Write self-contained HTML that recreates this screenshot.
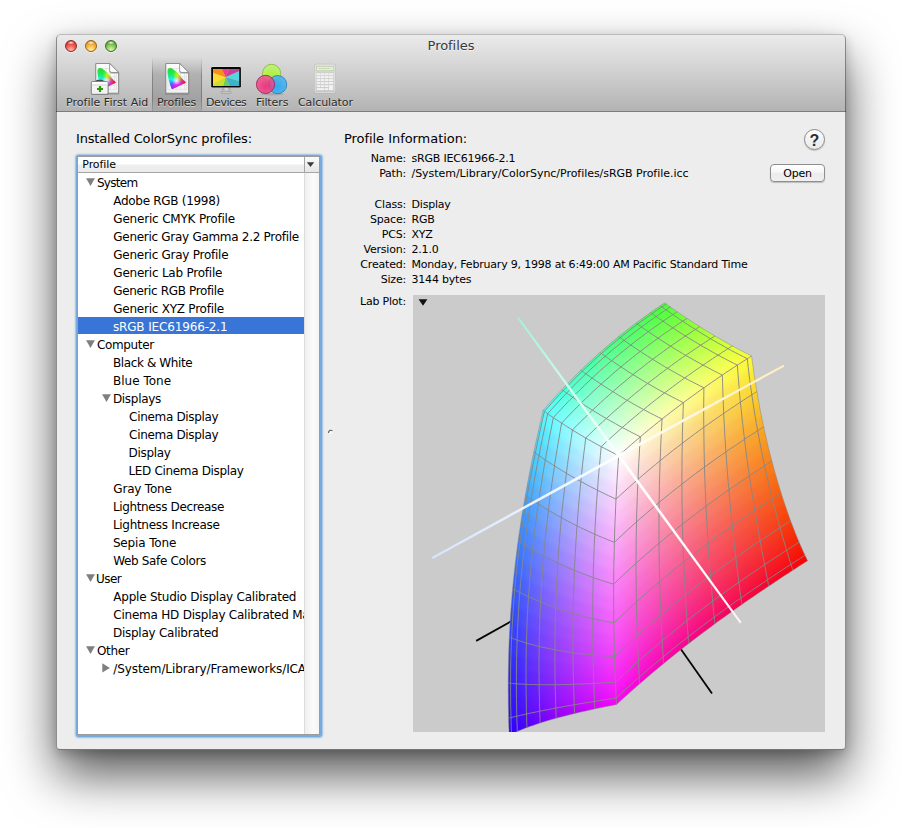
<!DOCTYPE html>
<html lang="en">
<head>
<meta charset="utf-8">
<title>Profiles</title>
<style>
html,body{margin:0;padding:0;}
body{width:902px;height:828px;background:#fff;position:relative;overflow:hidden;font-family:"DejaVu Sans","Liberation Sans",sans-serif;color:#000;-webkit-font-smoothing:antialiased;}
.abs{position:absolute;}
#win{position:absolute;left:56px;top:34px;width:790px;height:716px;border-radius:5px 5px 4px 4px;background:#ededed;
 box-shadow:0 25px 50px rgba(0,0,0,.66),0 4px 12px rgba(0,0,0,.2);}
#win:after{content:'';position:absolute;left:0;top:0;right:0;bottom:0;border-radius:5px 5px 4px 4px;border:1px solid rgba(0,0,0,.4);border-top-color:rgba(0,0,0,.25);border-bottom-color:rgba(0,0,0,.5);pointer-events:none;box-sizing:border-box}
#tb{position:absolute;left:0;top:0;width:790px;height:77px;border-radius:5px 5px 0 0;
 background:linear-gradient(#ebebeb 0,#dcdcdc 22px,#b3b3b3 100%);box-shadow:inset 0 1px 0 rgba(255,255,255,.7);border-bottom:1px solid #7c7c7c;box-sizing:content-box;}
.t{position:absolute;white-space:nowrap;line-height:1;}
.lbl{font-size:11px;color:#2b2b2b;text-shadow:0 1px 0 rgba(255,255,255,.55);letter-spacing:-.1px}
.tl{position:absolute;top:6px;width:12px;height:12px;border-radius:50%;box-sizing:border-box;}
.row{position:absolute;left:0;font-size:12px;white-space:nowrap;line-height:18px;height:18px;letter-spacing:-.42px;}
.k{position:absolute;font-size:11px;white-space:nowrap;text-align:right;width:80px;left:270px;line-height:15px;letter-spacing:-.2px}
.v{position:absolute;font-size:11px;white-space:nowrap;left:355.5px;line-height:15px;letter-spacing:-.2px}
</style>
</head>
<body>
<div id="win">
 <div id="tb">
  <div class="tl" style="left:9px;background:radial-gradient(ellipse 3.600px 1.800px at 50% 17%,rgba(255,255,255,.9),rgba(255,255,255,0) 100%),radial-gradient(circle at 50% 88%,#ffc0b6 0,#f4655a 40%,#e03a32 72%,#a8201c 100%);border:1px solid #8e2a25;box-shadow:0 1px 0 rgba(255,255,255,.45);"></div>
  <div class="tl" style="left:29px;background:radial-gradient(ellipse 3.600px 1.800px at 50% 17%,rgba(255,255,255,.9),rgba(255,255,255,0) 100%),radial-gradient(circle at 50% 88%,#fff0b0 0,#f8c050 40%,#e89a24 72%,#b26c10 100%);border:1px solid #96621a;box-shadow:0 1px 0 rgba(255,255,255,.45);"></div>
  <div class="tl" style="left:49px;background:radial-gradient(ellipse 3.600px 1.800px at 50% 17%,rgba(255,255,255,.9),rgba(255,255,255,0) 100%),radial-gradient(circle at 50% 88%,#dcf6b4 0,#92d066 40%,#5aa838 72%,#33741f 100%);border:1px solid #3f6e2a;box-shadow:0 1px 0 rgba(255,255,255,.45);"></div>
  <div class="t" style="left:0;width:790px;text-align:center;top:5px;font-size:13px;color:#3a3a3a;text-shadow:0 1px 0 rgba(255,255,255,.6);letter-spacing:-.05px">Profiles</div>
  <!-- selected item bg -->
  <div class="abs" style="left:96px;top:23px;width:49.500px;height:54px;background:linear-gradient(rgba(0,0,0,0),rgba(0,0,0,.14) 32%,rgba(0,0,0,.14) 78%,rgba(0,0,0,.06));"></div>
  <div class="abs" style="left:96px;top:23px;width:1px;height:54px;background:linear-gradient(rgba(0,0,0,0),rgba(0,0,0,.24) 35%,rgba(0,0,0,.24) 75%,rgba(0,0,0,.08));"></div>
  <div class="abs" style="left:144.500px;top:23px;width:1px;height:54px;background:linear-gradient(rgba(0,0,0,0),rgba(0,0,0,.24) 35%,rgba(0,0,0,.24) 75%,rgba(0,0,0,.08));"></div>
  <svg class="abs" style="left:30px;top:26px" width="40" height="40" viewBox="0 0 40 40">
 <defs>
  <linearGradient id="pg" x1="0" y1="0" x2="0" y2="1"><stop offset="0" stop-color="#fdfdfd"/><stop offset="1" stop-color="#f1f1f1"/></linearGradient>
  <linearGradient id="hue" x1="0" y1="0" x2="0" y2="1"><stop offset="0" stop-color="#22e020"/><stop offset=".3" stop-color="#20e860"/><stop offset=".55" stop-color="#18f0f0"/><stop offset=".8" stop-color="#3060ff"/><stop offset="1" stop-color="#3010f0"/></linearGradient>
  <radialGradient id="rr" gradientUnits="userSpaceOnUse" cx="29.500" cy="22.400" r="11"><stop offset="0" stop-color="#ff0030"/><stop offset=".35" stop-color="#ff2060" stop-opacity=".85"/><stop offset="1" stop-color="#ff40a0" stop-opacity="0"/></radialGradient>
  <radialGradient id="ry" gradientUnits="userSpaceOnUse" cx="23.500" cy="15.300" r="7"><stop offset="0" stop-color="#f4f000"/><stop offset=".5" stop-color="#e8f000" stop-opacity=".7"/><stop offset="1" stop-color="#a0f000" stop-opacity="0"/></radialGradient>
  <radialGradient id="rm" gradientUnits="userSpaceOnUse" cx="21" cy="26.300" r="6.500"><stop offset="0" stop-color="#ff10f0"/><stop offset=".6" stop-color="#f020f0" stop-opacity=".75"/><stop offset="1" stop-color="#c040ff" stop-opacity="0"/></radialGradient>
  <radialGradient id="rw" gradientUnits="userSpaceOnUse" cx="20.500" cy="20.800" r="4.500"><stop offset="0" stop-color="#fff" stop-opacity=".95"/><stop offset=".35" stop-color="#fff" stop-opacity=".6"/><stop offset="1" stop-color="#fff" stop-opacity="0"/></radialGradient>
   </defs>
 <g>
   <path d="M9 3.200h14.800l9.400 9.400v21.500h-24.200z" fill="#000" opacity=".16" transform="translate(0,.6)"/>
   <path d="M9.800 3.500h13.900l8.900 8.900v20.800h-22.800z" fill="url(#pg)" stroke="#868686" stroke-width=".9" stroke-linejoin="round"/>
   <path d="M11.800 8.500h12M11.800 12.700h18.800M11.800 16.900h18.800M11.800 21.100h18.800M11.800 25.300h18.800M11.800 29.500h18.800M16 8.500v21M20.200 8.500v21M24.400 10v19.500M28.600 12.700v16.800M11.800 8.500v21M30.600 12.700v16.800" stroke="#dedede" stroke-width=".7" fill="none"/>
   <g>
    <path d="M14 7.900c-1.700 0-2.600 1.500-2.500 4.200c.2 5.500 2.100 11.800 4.100 16.300c.3.600.8.700 1.300.400l12.300-5.800c.6-.300.6-.700.100-1.200c-4.000-4.000-9.300-10.800-13.100-13.300c-.700-.400-1.400-.600-2.200-.600z" fill="url(#hue)"/>
    <path d="M14 7.900c-1.700 0-2.600 1.500-2.500 4.200c.2 5.500 2.100 11.800 4.100 16.300c.3.600.8.700 1.300.400l12.300-5.800c.6-.300.6-.700.100-1.200c-4.000-4.000-9.300-10.800-13.100-13.300c-.700-.400-1.400-.600-2.200-.600z" fill="url(#ry)"/>
    <path d="M14 7.900c-1.700 0-2.600 1.500-2.500 4.200c.2 5.500 2.100 11.800 4.100 16.300c.3.600.8.700 1.300.400l12.300-5.800c.6-.300.6-.700.100-1.200c-4.000-4.000-9.300-10.800-13.100-13.300c-.700-.400-1.400-.600-2.200-.600z" fill="url(#rr)"/>
    <path d="M14 7.900c-1.700 0-2.600 1.500-2.500 4.200c.2 5.500 2.100 11.800 4.100 16.300c.3.600.8.700 1.300.400l12.300-5.800c.6-.300.6-.700.100-1.200c-4.000-4.000-9.300-10.800-13.100-13.300c-.700-.400-1.400-.600-2.200-.600z" fill="url(#rm)"/>
    <path d="M14 7.900c-1.700 0-2.600 1.500-2.500 4.200c.2 5.500 2.100 11.800 4.100 16.300c.3.600.8.700 1.300.400l12.300-5.800c.6-.300.6-.700.100-1.200c-4.000-4.000-9.300-10.800-13.100-13.300c-.700-.400-1.400-.600-2.200-.600z" fill="url(#rw)"/>
   </g>
   <path d="M23.700 3.500l8.900 8.900h-6.700c-1.300 0-2.200-.900-2.200-2.200z" fill="#fff" stroke="#7a7a7a" stroke-width=".8" stroke-linejoin="round"/>
   <path d="M24.500 5.300l6.300 6.300h-4.800c-.9 0-1.500-.600-1.500-1.500z" fill="#fafafa"/><path d="M23.300 10.600c0 1.600 1 2.600 2.600 2.600h6.400" fill="none" stroke="#000" stroke-opacity=".22" stroke-width="1"/>
 </g>
 <!-- first aid kit -->
 <path d="M10.300 22c0-1.200 .7-1.700 1.700-1.700h3.400c1 0 1.700 .5 1.700 1.700" fill="none" stroke="#4a4a4a" stroke-width="1.300"/>
 <rect x="5" y="21.800" width="17.400" height="13.300" rx="1.700" fill="#000" opacity=".22"/>
 <rect x="5.300" y="21.500" width="16.800" height="12.800" rx="1.500" fill="#f3f3f3" stroke="#7a7a7a" stroke-width=".9"/>
 <path d="M5.900 22.900c0-.600 .4-1 1-1h13.600c.6 0 1 .4 1 1v1.900h-15.600z" fill="#fff"/>
 <path d="M5.800 24.900h15.800" stroke="#cdcdcd" stroke-width=".8"/>
 <path d="M12.900 26h2.200v1.900h1.900v2.200h-1.900v1.900h-2.200v-1.900h-1.900v-2.200h1.900z" fill="#2c9a0c"/>
</svg>
<svg class="abs" style="left:100px;top:26px" width="40" height="40" viewBox="0 0 40 40"><g>
   <path d="M9 3.200h14.800l9.400 9.400v21.500h-24.200z" fill="#000" opacity=".16" transform="translate(0,.6)"/>
   <path d="M9.800 3.500h13.900l8.900 8.900v20.800h-22.800z" fill="url(#pg)" stroke="#868686" stroke-width=".9" stroke-linejoin="round"/>
   <path d="M11.800 8.500h12M11.800 12.700h18.800M11.800 16.900h18.800M11.800 21.100h18.800M11.800 25.300h18.800M11.800 29.500h18.800M16 8.500v21M20.200 8.500v21M24.400 10v19.500M28.600 12.700v16.800M11.800 8.500v21M30.600 12.700v16.800" stroke="#dedede" stroke-width=".7" fill="none"/>
   <g>
    <path d="M14 7.900c-1.700 0-2.600 1.500-2.500 4.200c.2 5.500 2.100 11.800 4.100 16.300c.3.600.8.700 1.300.400l12.300-5.800c.6-.300.6-.700.100-1.200c-4.000-4.000-9.300-10.800-13.100-13.300c-.700-.400-1.400-.600-2.200-.600z" fill="url(#hue)"/>
    <path d="M14 7.900c-1.700 0-2.600 1.500-2.500 4.200c.2 5.500 2.100 11.800 4.100 16.300c.3.600.8.700 1.300.400l12.300-5.800c.6-.300.6-.700.100-1.200c-4.000-4.000-9.300-10.800-13.100-13.300c-.700-.400-1.400-.600-2.200-.600z" fill="url(#ry)"/>
    <path d="M14 7.900c-1.700 0-2.600 1.500-2.500 4.200c.2 5.500 2.100 11.800 4.100 16.300c.3.600.8.700 1.300.400l12.300-5.800c.6-.300.6-.700.100-1.200c-4.000-4.000-9.300-10.800-13.100-13.300c-.700-.400-1.400-.600-2.200-.600z" fill="url(#rr)"/>
    <path d="M14 7.900c-1.700 0-2.600 1.500-2.500 4.200c.2 5.500 2.100 11.800 4.100 16.300c.3.600.8.700 1.300.400l12.300-5.800c.6-.300.6-.700.100-1.200c-4.000-4.000-9.300-10.800-13.100-13.300c-.700-.400-1.400-.600-2.200-.600z" fill="url(#rm)"/>
    <path d="M14 7.900c-1.700 0-2.600 1.500-2.500 4.200c.2 5.500 2.100 11.800 4.100 16.300c.3.600.8.700 1.300.400l12.300-5.800c.6-.300.6-.700.100-1.200c-4.000-4.000-9.300-10.800-13.100-13.300c-.700-.400-1.400-.600-2.200-.600z" fill="url(#rw)"/>
   </g>
   <path d="M23.700 3.500l8.900 8.900h-6.700c-1.300 0-2.200-.900-2.200-2.200z" fill="#fff" stroke="#7a7a7a" stroke-width=".8" stroke-linejoin="round"/>
   <path d="M24.500 5.300l6.300 6.300h-4.800c-.9 0-1.500-.600-1.500-1.500z" fill="#fafafa"/><path d="M23.300 10.600c0 1.600 1 2.600 2.600 2.600h6.400" fill="none" stroke="#000" stroke-opacity=".22" stroke-width="1"/>
 </g></svg>
<!-- devices -->
<svg class="abs" style="left:150px;top:24px" width="40" height="40" viewBox="0 0 40 40">
 <defs><linearGradient id="al" x1="0" y1="0" x2="1" y2="0"><stop offset="0" stop-color="#9c9c9c"/><stop offset=".5" stop-color="#dedede"/><stop offset="1" stop-color="#9c9c9c"/></linearGradient>
 <clipPath id="scr"><rect x="7" y="11" width="26.200" height="17"/></clipPath></defs>
 <path d="M16.400 29h7.600l.6 3.600h-8.800z" fill="url(#al)"/>
 <ellipse cx="20.200" cy="34.500" rx="5.600" ry="1.300" fill="#c4c4c4" stroke="#8c8c8c" stroke-width=".5"/>
 <rect x="4.800" y="8.600" width="30.400" height="21.400" rx="1.500" fill="#fff" opacity=".35"/>
 <rect x="5.200" y="9" width="29.700" height="20.600" rx="1.300" fill="#070707"/>
 <g clip-path="url(#scr)">
  <rect x="7" y="11" width="27" height="17" fill="#ffd83a"/>
  <path d="M19.600 19.300L7 14.800V11h9z" fill="#f5901e"/>
  <path d="M19.600 19.300L16 11h6.800z" fill="#f03c8c"/>
  <path d="M19.600 19.300L22.800 11H33.200v2.200z" fill="#c63f9e"/>
  <path d="M19.600 19.300L33.200 13.200V23z" fill="#55d6e2"/>
  <path d="M19.600 19.300L33.200 23v5H23.600z" fill="#3db3cb"/>
  <path d="M19.600 19.300L23.600 28H17z" fill="#6fc86a"/>
  <path d="M19.600 19.300L17 28H7v-1.800z" fill="#c6e02c"/>
 </g>
</svg>
<!-- filters -->
<svg class="abs" style="left:196px;top:24px" width="40" height="40" viewBox="0 0 40 40">
 <defs>
  <radialGradient id="fg" cx=".5" cy=".75" r=".8"><stop offset="0" stop-color="#a8f032"/><stop offset="1" stop-color="#c2f07e"/></radialGradient>
  <radialGradient id="fp" cx=".5" cy=".6" r=".7"><stop offset="0" stop-color="#f5186c"/><stop offset="1" stop-color="#ee5f9a"/></radialGradient>
  <radialGradient id="fb" cx=".45" cy=".6" r=".7"><stop offset="0" stop-color="#1ea4f4"/><stop offset="1" stop-color="#55b8f0"/></radialGradient>
 </defs>
 <ellipse cx="20" cy="36.200" rx="12" ry="1.200" fill="#000" opacity=".12"/>
 <circle cx="19.600" cy="15.400" r="9.100" fill="url(#fg)" stroke="#86b43a" stroke-width=".8"/>
 <circle cx="25.600" cy="26.600" r="9.100" fill="url(#fb)" fill-opacity=".88" stroke="#1b7cb4" stroke-width=".8"/>
 <circle cx="13.500" cy="26.400" r="9.100" fill="url(#fp)" fill-opacity=".82" stroke="#a3174f" stroke-width=".8"/>
</svg>
<!-- calculator -->
<svg class="abs" style="left:249px;top:24px" width="40" height="40" viewBox="0 0 40 40">
 <defs><linearGradient id="cb" x1="0" y1="0" x2="0" y2="1"><stop offset="0" stop-color="#dedede"/><stop offset="1" stop-color="#c4c4c4"/></linearGradient></defs>
 <rect x="9.300" y="6.500" width="21.300" height="29.400" rx="1.800" fill="#000" opacity=".12"/>
 <rect x="9.500" y="6.300" width="21" height="29" rx="1.700" fill="url(#cb)" stroke="#b4b4b4" stroke-width=".7"/>
 <rect x="10.100" y="6.900" width="19.800" height="27.800" rx="1.300" fill="none" stroke="#ededed" stroke-width=".7"/>
 <rect x="11.300" y="8.300" width="17.500" height="4.500" fill="#e3efd2" stroke="#bccaa6" stroke-width=".7"/>
 <path d="M14 10.600h11.500" stroke="#9fb08a" stroke-width=".7" stroke-dasharray="1.500 .7" opacity=".8"/>
 <g fill="#f2f2f2">
  <rect x="11.700" y="15.100" width="3.500" height="2"/><rect x="15.800" y="15.100" width="3.500" height="2"/><rect x="19.900" y="15.100" width="3.500" height="2"/><rect x="24" y="15.100" width="4.200" height="2"/>
  <rect x="11.700" y="18.100" width="3.500" height="2"/><rect x="15.800" y="18.100" width="3.500" height="2"/><rect x="19.900" y="18.100" width="3.500" height="2"/><rect x="24" y="18.100" width="4.200" height="2"/>
  <rect x="11.700" y="21.100" width="3.500" height="2"/><rect x="15.800" y="21.100" width="3.500" height="2"/><rect x="19.900" y="21.100" width="3.500" height="2"/><rect x="24" y="21.100" width="4.200" height="2"/>
  <rect x="11.700" y="24.100" width="3.500" height="2"/><rect x="15.800" y="24.100" width="3.500" height="2"/><rect x="19.900" y="24.100" width="3.500" height="2"/><rect x="24" y="24.100" width="4.200" height="2"/>
  <rect x="11.700" y="27.100" width="3.500" height="2"/><rect x="15.800" y="27.100" width="3.500" height="2"/><rect x="19.900" y="27.100" width="3.500" height="2"/><rect x="24" y="27.100" width="4.200" height="5.100"/>
  <rect x="11.700" y="30.100" width="7.600" height="2.100"/><rect x="19.900" y="30.100" width="3.500" height="2.100"/>
 </g>
 <path d="M11.500 14.700h17" stroke="#c9c9c9" stroke-width=".6"/>
</svg>

  <div class="t lbl" style="left:10px;top:63px;letter-spacing:.02px">Profile First Aid</div>
  <div class="t lbl" style="left:101px;top:63px;">Profiles</div>
  <div class="t lbl" style="left:150px;top:63px;letter-spacing:-.43px">Devices</div>
  <div class="t lbl" style="left:200px;top:63px;">Filters</div>
  <div class="t lbl" style="left:242px;top:63px;">Calculator</div>
 </div>

 <div class="t" style="left:20px;top:98px;font-size:13px;letter-spacing:-.18px">Installed ColorSync profiles:</div>
 <!-- table -->
 <div class="abs" style="left:19.500px;top:120.500px;width:246px;height:582px;border-radius:3px;background:#78aade;box-shadow:0 0 1.600px .7px rgba(120,170,222,.7);"></div>
 <div class="abs" id="tbl" style="left:21px;top:122px;width:243px;height:579px;box-sizing:border-box;border:1px solid #9c9c9c;background:#fff;">
  <div class="abs" style="left:0;top:0;width:241px;height:15px;background:linear-gradient(#fff 0,#fff 45%,#eee 55%,#ececec 100%);border-bottom:1px solid #a5a5a5;"></div>
  <div class="t" style="left:4.300px;top:2px;font-size:11px;letter-spacing:-.1px">Profile</div>
  <div class="abs" style="left:226px;top:0;width:15px;height:15px;border-left:1px solid #a5a5a5;background:linear-gradient(#fafafa,#e6e6e6);box-sizing:border-box"></div>
  <svg class="abs" style="left:228px;top:4px" width="9" height="7"><path d="M0.8 1.200h7.400L4.500 5.900z" fill="#3c3c3c"/></svg>
  <div class="abs" style="left:226px;top:16px;width:15px;height:561px;border-left:1px solid #dcdcdc;background:linear-gradient(90deg,#efefef,#fbfbfb 60%,#f4f4f4);box-sizing:border-box"></div>
  <div class="abs" id="rows" style="left:0;top:16px;width:226px;height:561px;overflow:hidden;">
<svg class="abs" style="left:8.1px;top:5px" width="10" height="9"><path d="M0.1 0.3h8.8L4.5 7.9z" fill="#7f7f7f"/></svg>
<div class="row" style="left:18.9px;top:1px;letter-spacing:-0.70px;">System</div>
<div class="row" style="left:35.3px;top:19px;letter-spacing:-0.30px;">Adobe RGB (1998)</div>
<div class="row" style="left:35.3px;top:37px;letter-spacing:-0.19px;">Generic CMYK Profile</div>
<div class="row" style="left:35.3px;top:55px;letter-spacing:-0.29px;">Generic Gray Gamma 2.2 Profile</div>
<div class="row" style="left:35.3px;top:73px;letter-spacing:-0.26px;">Generic Gray Profile</div>
<div class="row" style="left:35.3px;top:91px;letter-spacing:-0.22px;">Generic Lab Profile</div>
<div class="row" style="left:35.3px;top:109px;letter-spacing:-0.36px;">Generic RGB Profile</div>
<div class="row" style="left:35.3px;top:127px;letter-spacing:-0.24px;">Generic XYZ Profile</div>
<div class="abs" style="left:0;top:144px;width:226px;height:17px;background:#3875d7"></div>
<div class="row" style="left:34.9px;top:145px;letter-spacing:-0.14px;color:#fff;">sRGB IEC61966-2.1</div>
<svg class="abs" style="left:8.1px;top:167px" width="10" height="9"><path d="M0.1 0.3h8.8L4.5 7.9z" fill="#7f7f7f"/></svg>
<div class="row" style="left:18.9px;top:163px;letter-spacing:-0.33px;">Computer</div>
<div class="row" style="left:34.9px;top:181px;letter-spacing:-0.38px;">Black &amp; White</div>
<div class="row" style="left:34.9px;top:199px;letter-spacing:0.03px;">Blue Tone</div>
<svg class="abs" style="left:24.1px;top:221px" width="10" height="9"><path d="M0.1 0.3h8.8L4.5 7.9z" fill="#7f7f7f"/></svg>
<div class="row" style="left:34.9px;top:217px;letter-spacing:-0.30px;">Displays</div>
<div class="row" style="left:51.1px;top:235px;letter-spacing:-0.32px;">Cinema Display</div>
<div class="row" style="left:51.1px;top:253px;letter-spacing:-0.32px;">Cinema Display</div>
<div class="row" style="left:50.5px;top:271px;letter-spacing:-0.30px;">Display</div>
<div class="row" style="left:50.5px;top:289px;letter-spacing:-0.34px;">LED Cinema Display</div>
<div class="row" style="left:35.3px;top:307px;letter-spacing:-0.20px;">Gray Tone</div>
<div class="row" style="left:34.9px;top:325px;letter-spacing:-0.36px;">Lightness Decrease</div>
<div class="row" style="left:34.9px;top:343px;letter-spacing:-0.30px;">Lightness Increase</div>
<div class="row" style="left:34.9px;top:361px;letter-spacing:-0.14px;">Sepia Tone</div>
<div class="row" style="left:35.3px;top:379px;letter-spacing:-0.36px;">Web Safe Colors</div>
<svg class="abs" style="left:8.1px;top:401px" width="10" height="9"><path d="M0.1 0.3h8.8L4.5 7.9z" fill="#7f7f7f"/></svg>
<div class="row" style="left:17.9px;top:397px;letter-spacing:-0.50px;">User</div>
<div class="row" style="left:35.3px;top:415px;letter-spacing:-0.23px;">Apple Studio Display Calibrated</div>
<div class="row" style="left:35.3px;top:433px;letter-spacing:-0.23px;">Cinema HD Display Calibrated Mac</div>
<div class="row" style="left:34.9px;top:451px;letter-spacing:-0.25px;">Display Calibrated</div>
<svg class="abs" style="left:8.1px;top:473px" width="10" height="9"><path d="M0.1 0.3h8.8L4.5 7.9z" fill="#7f7f7f"/></svg>
<div class="row" style="left:18.9px;top:469px;letter-spacing:-0.30px;">Other</div>
<svg class="abs" style="left:24.3px;top:490px" width="9" height="10"><path d="M0.3 0.3v9.2L7.9 4.9z" fill="#7f7f7f"/></svg>
<div class="row" style="left:35.3px;top:487px;letter-spacing:-0.10px;">/System/Library/Frameworks/ICADevices.framework</div>
  </div>
 </div>
 <!-- splitter dimple -->
 <svg class="abs" style="left:271.200px;top:393.700px" width="8" height="8"><circle cx="3.6" cy="4.2" r="2.1" fill="#f6f6f6"/><path d="M1.6 4.4A2.2 2.2 0 0 1 5 2.6" fill="none" stroke="#555" stroke-width="1.1" stroke-linecap="round"/></svg>

 <div class="t" style="left:288px;top:98px;font-size:13px;letter-spacing:-.05px">Profile Information:</div>
 <div class="k" style="top:117px">Name:</div><div class="v" style="top:117px">sRGB IEC61966-2.1</div>
 <div class="k" style="top:132px">Path:</div><div class="v" style="top:132px;letter-spacing:-.04px">/System/Library/ColorSync/Profiles/sRGB Profile.icc</div>
 <div class="k" style="top:163px">Class:</div><div class="v" style="top:163px">Display</div>
 <div class="k" style="top:178px">Space:</div><div class="v" style="top:178px">RGB</div>
 <div class="k" style="top:193px">PCS:</div><div class="v" style="top:193px">XYZ</div>
 <div class="k" style="top:208px">Version:</div><div class="v" style="top:208px">2.1.0</div>
 <div class="k" style="top:223px">Created:</div><div class="v" style="top:223px">Monday, February 9, 1998 at 6:49:00 AM Pacific Standard Time</div>
 <div class="k" style="top:238px">Size:</div><div class="v" style="top:238px">3144 bytes</div>
 <div class="k" style="top:260px">Lab Plot:</div>
 <!-- help button -->
 <div class="abs" style="left:748px;top:95px;width:21px;height:21px;border-radius:50%;box-sizing:border-box;border:1px solid #8a8a8a;background:linear-gradient(#fff,#f2f2f2 50%,#e9e9e9);box-shadow:0 1px 1px rgba(0,0,0,.18);"></div>
 <div class="t" style="left:748px;top:99px;width:21px;text-align:center;font-family:'Liberation Sans',sans-serif;font-size:16px;font-weight:bold;color:#2e2e2e;">?</div>
 <!-- open button -->
 <div class="abs" style="left:714px;top:130px;width:55px;height:18px;border-radius:4px;box-sizing:border-box;border:1px solid #8e8e8e;background:linear-gradient(#fff 0,#f6f6f6 45%,#ebebeb 55%,#f1f1f1);box-shadow:0 1px 1px rgba(0,0,0,.2);"></div>
 <div class="t" style="left:714px;top:134px;width:55px;text-align:center;font-size:11px;letter-spacing:-.2px">Open</div>
 <!-- plot -->
 <svg class="abs" style="left:357px;top:261px;background:#cbcbcb" width="412" height="437" viewBox="0 0 412 437">
<defs><filter id="sm" x="-5%" y="-5%" width="110%" height="110%" color-interpolation-filters="sRGB"><feGaussianBlur stdDeviation="2.6"/><feComponentTransfer><feFuncA type="linear" slope="60" intercept="0"/></feComponentTransfer></filter>
<clipPath id="sil"><path d="M130.1 115.5L133.9 111.1L137.7 106.8L141.6 102.5L145.4 98.3L149.3 94.2L153.2 90.1L157.1 86L161 82.1L164.9 78.1L168.8 74.3L172.7 70.5L176.7 66.8L180.6 63.2L184.5 59.6L188.4 56.2L192.3 52.8L196.2 49.5L200 46.2L203.8 43.1L207.5 40.1L211.2 37.1L214.8 34.3L218.4 31.6L221.8 29L225.1 26.5L228.3 24.1L231.3 21.9L234.2 19.9L236.9 18L239.4 16.2L241.7 14.6L243.8 13.2L245.6 11.9L247.2 10.9L248.5 10L249.6 9.3L250.4 8.7L251.1 8.3L251.7 7.9L251.7 7.9L251.9 8L252.1 8.2L252.4 8.4L252.8 8.7L253.3 9.1L254 9.5L254.7 10L255.5 10.6L256.5 11.3L257.5 12.1L258.7 12.9L260.1 13.9L261.5 14.9L263.1 16L264.8 17.2L266.6 18.4L268.6 19.7L270.7 21.2L272.9 22.6L275.2 24.2L277.6 25.8L280.2 27.5L282.9 29.2L285.6 31L288.5 32.8L291.5 34.6L294.6 36.5L297.8 38.5L301.1 40.5L304.5 42.5L307.9 44.5L311.5 46.5L315.1 48.6L318.9 50.6L322.7 52.7L326.5 54.8L330.5 56.9L334.5 59L338.6 61.1L338.6 61.1L339.5 68.3L340.6 75.6L341.7 82.9L342.8 90.2L344 97.5L345.3 104.8L346.7 112L348.1 119.3L349.5 126.5L351.1 133.7L352.7 140.8L354.3 147.9L356 154.9L357.8 161.9L359.6 168.7L361.4 175.5L363.3 182.1L365.2 188.7L367.2 195L369.1 201.2L371.1 207.2L373.1 213L375 218.6L376.9 223.9L378.8 229L380.7 233.8L382.4 238.2L384.1 242.4L385.7 246.2L387.2 249.7L388.6 252.8L389.8 255.6L390.9 258L391.9 260L392.7 261.7L393.3 263.1L393.8 264.2L394.2 265L394.6 265.7L394.6 265.7L392.2 267.3L389.9 268.8L387 270.6L383.4 272.9L379.4 275.6L374.9 278.5L370.1 281.6L365 284.9L359.8 288.4L354.4 292L348.9 295.7L343.4 299.5L337.9 303.3L332.3 307.1L326.7 311L321.1 314.9L315.6 318.9L310 322.9L304.5 326.8L299.1 330.9L293.7 334.9L288.3 338.9L283 343L277.7 347L272.4 351.1L267.2 355.2L262.1 359.3L256.9 363.4L251.9 367.5L246.8 371.7L241.9 375.8L236.9 380L232 384.2L227.2 388.3L222.4 392.5L217.6 396.8L212.9 401L208.2 405.2L203.5 409.5L203.5 409.5L199 410.4L194.5 411.3L190 412.2L185.6 413.1L181.3 414L177 415L172.8 415.9L168.7 416.8L164.6 417.8L160.6 418.8L156.7 419.7L152.8 420.7L149.1 421.7L145.4 422.6L141.9 423.6L138.4 424.6L135 425.6L131.8 426.6L128.6 427.5L125.6 428.5L122.7 429.5L120 430.4L117.3 431.3L114.8 432.2L112.5 433.1L110.3 433.9L108.3 434.7L106.4 435.5L104.7 436.2L103.2 436.9L101.8 437.5L100.6 438L99.5 438.5L98.6 438.9L97.9 439.2L97.3 439.5L96.8 439.7L96.5 439.9L96.1 440.1L96.1 440.1L96 437.6L96 435L95.8 431.8L95.7 427.6L95.6 422.5L95.5 416.5L95.3 409.8L95.3 402.5L95.2 394.5L95.2 385.9L95.3 377L95.5 367.7L95.7 358.2L96 348.5L96.5 338.6L97 328.7L97.6 318.7L98.4 308.6L99.2 298.6L100.1 288.7L101.1 278.8L102.2 269L103.4 259.2L104.6 249.6L106 240L107.4 230.5L108.8 221.1L110.4 211.9L112 202.7L113.6 193.6L115.3 184.6L117 175.7L118.8 166.9L120.6 158.1L122.4 149.4L124.3 140.9L126.2 132.3L128.2 123.9L130.1 115.5z"/></clipPath>
<linearGradient id="gan" gradientUnits="userSpaceOnUse" x1="205.7" y1="160.6" x2="105.3" y2="23.0"><stop offset="0" stop-color="#fff"/><stop offset="1" stop-color="#9ff5d6"/></linearGradient>
<linearGradient id="gap" gradientUnits="userSpaceOnUse" x1="205.7" y1="160.6" x2="327.8" y2="327.8"><stop offset="0" stop-color="#fff"/><stop offset="1" stop-color="#fff3f8"/></linearGradient>
<linearGradient id="gbn" gradientUnits="userSpaceOnUse" x1="205.7" y1="160.6" x2="19.3" y2="263.0"><stop offset="0" stop-color="#fff"/><stop offset="1" stop-color="#d5e4ff"/></linearGradient>
<linearGradient id="gbp" gradientUnits="userSpaceOnUse" x1="205.7" y1="160.6" x2="371.0" y2="70.6"><stop offset="0" stop-color="#fff"/><stop offset="1" stop-color="#ffeebb"/></linearGradient>
</defs>
<line x1="206.0" y1="265.9" x2="63.2" y2="345.9" stroke="#050505" stroke-width="1.8"/>
<line x1="206.0" y1="265.9" x2="299.0" y2="398.6" stroke="#050505" stroke-width="1.8"/>
<g clip-path="url(#sil)"><g filter="url(#sm)">
<polygon points="251.9,7.5 252.4,8 250.8,9.1 250.3,8.6" fill="#46ff39"/>
<polygon points="250.9,8.2 251.4,8.7 249.4,10 249,9.6" fill="#46ff3a"/>
<polygon points="249.6,9.1 250.1,9.5 247.4,11.3 247,10.9" fill="#46ff3c"/>
<polygon points="247.7,10.5 248.1,10.8 244.8,13.1 244.4,12.7" fill="#46ff3f"/>
<polygon points="245,12.3 245.4,12.6 241.5,15.3 241.1,15" fill="#46ff42"/>
<polygon points="241.7,14.5 242.1,14.9 237.6,18 237.2,17.7" fill="#46ff47"/>
<polygon points="237.9,17.2 238.2,17.6 233.2,21.1 232.8,20.8" fill="#46ff4c"/>
<polygon points="233.5,20.4 233.8,20.7 228.3,24.7 227.9,24.4" fill="#46ff53"/>
<polygon points="228.6,23.9 229,24.2 223.1,28.5 222.7,28.2" fill="#46ff5a"/>
<polygon points="223.3,27.8 223.7,28.1 217.5,32.8 217.2,32.5" fill="#47ff62"/>
<polygon points="217.8,32 218.2,32.3 211.7,37.3 211.3,37" fill="#47ff6a"/>
<polygon points="212,36.5 212.4,36.8 205.7,42.1 205.4,41.8" fill="#47ff73"/>
<polygon points="206,41.3 206.3,41.6 199.6,47.2 199.2,46.9" fill="#48ff7d"/>
<polygon points="199.8,46.4 200.2,46.6 193.3,52.5 193,52.2" fill="#48ff87"/>
<polygon points="193.6,51.7 193.9,51.9 187,58 186.7,57.7" fill="#48ff91"/>
<polygon points="187.2,57.2 187.6,57.5 180.7,63.7 180.3,63.5" fill="#49ff9c"/>
<polygon points="180.9,62.9 181.2,63.2 174.3,69.7 173.9,69.4" fill="#4affa7"/>
<polygon points="174.5,68.8 174.9,69.1 167.9,75.8 167.5,75.5" fill="#4affb2"/>
<polygon points="168.1,75 168.5,75.2 161.5,82.1 161.2,81.8" fill="#4bffbd"/>
<polygon points="161.7,81.3 162.1,81.5 155.2,88.6 154.8,88.3" fill="#4cffc9"/>
<polygon points="155.4,87.7 155.7,88 148.9,95.2 148.5,94.9" fill="#4dffd4"/>
<polygon points="149.1,94.4 149.4,94.6 142.6,102 142.2,101.7" fill="#4effe0"/>
<polygon points="142.8,101.2 143.1,101.4 136.3,108.9 136,108.7" fill="#4fffed"/>
<polygon points="136.5,108.1 136.9,108.3 130.1,116 129.8,115.8" fill="#50fff9"/>
<polygon points="252.2,7.8 252.9,8.4 251.3,9.5 250.6,8.9" fill="#47ff39"/>
<polygon points="251.3,8.5 251.9,9 250,10.4 249.3,9.8" fill="#47ff3a"/>
<polygon points="250,9.4 250.6,9.9 247.9,11.7 247.3,11.2" fill="#47ff3c"/>
<polygon points="248,10.7 248.6,11.2 245.3,13.4 244.7,13" fill="#47ff3f"/>
<polygon points="245.4,12.5 245.9,13 242,15.7 241.4,15.2" fill="#47ff42"/>
<polygon points="242.1,14.8 242.6,15.2 238.1,18.4 237.6,18" fill="#47ff47"/>
<polygon points="238.2,17.5 238.7,17.9 233.7,21.5 233.2,21.1" fill="#47ff4c"/>
<polygon points="233.8,20.6 234.3,21 228.8,25 228.3,24.6" fill="#47ff53"/>
<polygon points="228.9,24.1 229.5,24.5 223.6,28.9 223.1,28.5" fill="#47ff5a"/>
<polygon points="223.7,28 224.2,28.4 218,33.1 217.5,32.7" fill="#48ff62"/>
<polygon points="218.1,32.2 218.6,32.6 212.2,37.6 211.7,37.2" fill="#48ff6a"/>
<polygon points="212.3,36.7 212.8,37.1 206.2,42.4 205.7,42" fill="#48ff73"/>
<polygon points="206.3,41.5 206.8,41.9 200.1,47.5 199.5,47.1" fill="#49ff7d"/>
<polygon points="200.2,46.6 200.7,47 193.8,52.8 193.3,52.4" fill="#49ff87"/>
<polygon points="193.9,51.9 194.4,52.3 187.5,58.3 187,57.9" fill="#49ff91"/>
<polygon points="187.6,57.4 188.1,57.8 181.1,64 180.6,63.7" fill="#4aff9c"/>
<polygon points="181.2,63.1 181.7,63.5 174.7,70 174.2,69.6" fill="#4bffa7"/>
<polygon points="174.8,69.1 175.3,69.4 168.3,76.1 167.9,75.8" fill="#4bffb2"/>
<polygon points="168.4,75.2 168.9,75.5 162,82.4 161.5,82.1" fill="#4cffbd"/>
<polygon points="162.1,81.5 162.5,81.8 155.6,88.9 155.1,88.5" fill="#4dffc9"/>
<polygon points="155.7,88 156.2,88.3 149.3,95.5 148.8,95.2" fill="#4effd4"/>
<polygon points="149.4,94.6 149.8,94.9 143,102.3 142.5,102" fill="#4effe0"/>
<polygon points="143.1,101.4 143.5,101.7 136.7,109.2 136.3,108.9" fill="#4fffed"/>
<polygon points="136.8,108.3 137.3,108.6 130.5,116.3 130.1,116" fill="#51fff9"/>
<polygon points="252.6,8.1 253.7,9 252.2,10.1 251.1,9.2" fill="#48ff39"/>
<polygon points="251.7,8.8 252.7,9.6 250.8,10.9 249.8,10.1" fill="#48ff3a"/>
<polygon points="250.4,9.7 251.3,10.5 248.7,12.2 247.8,11.5" fill="#48ff3c"/>
<polygon points="248.5,11.1 249.3,11.8 246,14 245.2,13.3" fill="#48ff3f"/>
<polygon points="245.8,12.9 246.7,13.5 242.7,16.2 241.9,15.6" fill="#48ff42"/>
<polygon points="242.6,15.1 243.4,15.8 238.9,18.9 238,18.3" fill="#48ff47"/>
<polygon points="238.7,17.8 239.5,18.5 234.4,22 233.6,21.4" fill="#48ff4c"/>
<polygon points="234.3,21 235.1,21.6 229.6,25.6 228.8,24.9" fill="#49ff53"/>
<polygon points="229.4,24.5 230.2,25.1 224.3,29.4 223.5,28.8" fill="#49ff5a"/>
<polygon points="224.2,28.3 225,29 218.8,33.6 218,33" fill="#49ff62"/>
<polygon points="218.6,32.6 219.4,33.2 212.9,38.2 212.2,37.6" fill="#49ff6a"/>
<polygon points="212.8,37.1 213.6,37.7 206.9,43 206.2,42.4" fill="#4aff73"/>
<polygon points="206.8,41.9 207.5,42.4 200.8,48 200,47.4" fill="#4aff7d"/>
<polygon points="200.6,46.9 201.4,47.5 194.5,53.3 193.8,52.7" fill="#4aff87"/>
<polygon points="194.4,52.2 195.1,52.8 188.2,58.8 187.4,58.3" fill="#4bff91"/>
<polygon points="188,57.7 188.8,58.3 181.8,64.5 181.1,64" fill="#4bff9c"/>
<polygon points="181.7,63.5 182.4,64 175.4,70.5 174.7,69.9" fill="#4cffa7"/>
<polygon points="175.3,69.4 176,69.9 169,76.6 168.3,76.1" fill="#4cffb2"/>
<polygon points="168.9,75.5 169.6,76 162.6,82.9 161.9,82.4" fill="#4dffbd"/>
<polygon points="162.5,81.8 163.2,82.3 156.3,89.3 155.6,88.8" fill="#4effc9"/>
<polygon points="156.1,88.3 156.8,88.8 149.9,96 149.2,95.5" fill="#4fffd4"/>
<polygon points="149.8,94.9 150.5,95.4 143.6,102.7 142.9,102.2" fill="#50ffe0"/>
<polygon points="143.5,101.7 144.2,102.1 137.4,109.7 136.7,109.2" fill="#51ffed"/>
<polygon points="137.2,108.6 137.9,109.1 131.2,116.7 130.5,116.3" fill="#52fff9"/>
<polygon points="253.3,8.6 254.7,9.8 253.3,10.8 251.9,9.7" fill="#4aff39"/>
<polygon points="252.3,9.3 253.7,10.4 251.9,11.7 250.5,10.6" fill="#4aff3a"/>
<polygon points="251.1,10.2 252.4,11.2 249.8,13 248.6,12" fill="#4aff3c"/>
<polygon points="249.2,11.6 250.4,12.5 247.1,14.8 245.9,13.8" fill="#4aff3f"/>
<polygon points="246.5,13.4 247.7,14.3 243.8,17 242.6,16.1" fill="#4aff42"/>
<polygon points="243.3,15.6 244.4,16.5 239.9,19.7 238.8,18.8" fill="#4aff47"/>
<polygon points="239.4,18.3 240.5,19.2 235.5,22.8 234.4,21.9" fill="#4aff4c"/>
<polygon points="235,21.5 236.1,22.3 230.6,26.3 229.5,25.4" fill="#4bff53"/>
<polygon points="230.1,25 231.2,25.8 225.3,30.2 224.2,29.3" fill="#4bff5a"/>
<polygon points="224.9,28.9 226,29.7 219.8,34.4 218.7,33.5" fill="#4bff62"/>
<polygon points="219.3,33.1 220.4,33.9 213.9,38.9 212.9,38.1" fill="#4bff6a"/>
<polygon points="213.5,37.6 214.6,38.4 207.9,43.7 206.9,42.9" fill="#4cff73"/>
<polygon points="207.5,42.4 208.5,43.2 201.8,48.7 200.7,47.9" fill="#4cff7d"/>
<polygon points="201.3,47.4 202.4,48.2 195.5,54 194.4,53.2" fill="#4cff87"/>
<polygon points="195,52.7 196.1,53.5 189.1,59.5 188.1,58.7" fill="#4dff91"/>
<polygon points="188.7,58.2 189.7,59 182.8,65.2 181.7,64.5" fill="#4dff9c"/>
<polygon points="182.3,63.9 183.3,64.7 176.3,71.1 175.3,70.4" fill="#4effa7"/>
<polygon points="175.9,69.9 176.9,70.6 169.9,77.2 168.9,76.5" fill="#4effb2"/>
<polygon points="169.5,76 170.5,76.7 163.5,83.5 162.6,82.8" fill="#4fffbd"/>
<polygon points="163.1,82.3 164.1,83 157.2,90 156.2,89.3" fill="#50ffc9"/>
<polygon points="156.8,88.7 157.7,89.4 150.8,96.6 149.9,95.9" fill="#51ffd4"/>
<polygon points="150.4,95.3 151.4,96 144.5,103.4 143.6,102.7" fill="#52ffe0"/>
<polygon points="144.1,102.1 145,102.8 138.2,110.3 137.3,109.6" fill="#52ffed"/>
<polygon points="137.8,109 138.8,109.7 132,117.3 131.1,116.7" fill="#53fff9"/>
<polygon points="254.2,9.4 256,10.8 254.7,11.8 252.9,10.4" fill="#4dff39"/>
<polygon points="253.3,10 255,11.4 253.3,12.7 251.6,11.3" fill="#4dff3a"/>
<polygon points="252.1,10.9 253.7,12.2 251.2,14 249.6,12.7" fill="#4dff3c"/>
<polygon points="250.1,12.3 251.7,13.5 248.5,15.7 246.9,14.5" fill="#4dff3f"/>
<polygon points="247.5,14.1 249,15.3 245.1,18 243.7,16.8" fill="#4dff42"/>
<polygon points="244.3,16.4 245.7,17.5 241.2,20.6 239.8,19.5" fill="#4dff47"/>
<polygon points="240.4,19.1 241.8,20.2 236.8,23.7 235.4,22.6" fill="#4dff4c"/>
<polygon points="236,22.2 237.4,23.3 231.9,27.2 230.5,26.2" fill="#4dff53"/>
<polygon points="231.1,25.7 232.5,26.8 226.7,31.1 225.2,30" fill="#4eff5a"/>
<polygon points="225.9,29.6 227.3,30.6 221.1,35.3 219.7,34.2" fill="#4eff62"/>
<polygon points="220.3,33.8 221.7,34.8 215.2,39.8 213.9,38.8" fill="#4eff6a"/>
<polygon points="214.5,38.3 215.9,39.3 209.2,44.6 207.8,43.6" fill="#4eff73"/>
<polygon points="208.4,43.1 209.8,44.1 203,49.6 201.7,48.6" fill="#4fff7d"/>
<polygon points="202.3,48.1 203.6,49.1 196.8,54.9 195.4,53.9" fill="#4fff87"/>
<polygon points="196,53.4 197.3,54.4 190.4,60.4 189.1,59.4" fill="#4fff91"/>
<polygon points="189.7,58.9 191,59.9 184,66.1 182.7,65.1" fill="#50ff9c"/>
<polygon points="183.3,64.6 184.6,65.6 177.6,72 176.3,71.1" fill="#50ffa7"/>
<polygon points="176.8,70.5 178.1,71.5 171.1,78.1 169.9,77.2" fill="#51ffb2"/>
<polygon points="170.4,76.6 171.7,77.6 164.7,84.4 163.5,83.4" fill="#52ffbd"/>
<polygon points="164,82.9 165.3,83.8 158.3,90.8 157.1,89.9" fill="#52ffc9"/>
<polygon points="157.6,89.3 158.9,90.2 152,97.4 150.7,96.5" fill="#53ffd4"/>
<polygon points="151.3,95.9 152.5,96.8 145.6,104.2 144.4,103.3" fill="#54ffe0"/>
<polygon points="145,102.7 146.2,103.6 139.3,111.1 138.2,110.2" fill="#55ffed"/>
<polygon points="138.7,109.6 139.9,110.5 133.1,118.1 131.9,117.3" fill="#56fff9"/>
<polygon points="255.5,10.3 257.7,12 256.4,12.9 254.2,11.3" fill="#51ff39"/>
<polygon points="254.6,11 256.7,12.6 255,13.8 252.9,12.2" fill="#51ff3a"/>
<polygon points="253.3,11.9 255.3,13.4 252.9,15.1 250.9,13.6" fill="#51ff3c"/>
<polygon points="251.4,13.2 253.3,14.7 250.2,16.9 248.3,15.4" fill="#51ff3f"/>
<polygon points="248.8,15 250.7,16.5 246.8,19.1 245,17.7" fill="#51ff42"/>
<polygon points="245.6,17.3 247.4,18.7 242.9,21.8 241.1,20.4" fill="#51ff47"/>
<polygon points="241.7,20 243.5,21.3 238.5,24.9 236.7,23.5" fill="#51ff4c"/>
<polygon points="237.3,23.1 239.1,24.4 233.6,28.4 231.8,27.1" fill="#51ff53"/>
<polygon points="232.4,26.6 234.2,27.9 228.3,32.3 226.5,30.9" fill="#51ff5a"/>
<polygon points="227.2,30.5 228.9,31.8 222.7,36.4 221,35.2" fill="#51ff62"/>
<polygon points="221.6,34.7 223.3,36 216.9,40.9 215.1,39.7" fill="#52ff6a"/>
<polygon points="215.7,39.2 217.5,40.4 210.8,45.7 209.1,44.5" fill="#52ff73"/>
<polygon points="209.7,44 211.4,45.2 204.6,50.7 202.9,49.5" fill="#52ff7d"/>
<polygon points="203.5,49 205.2,50.2 198.3,56 196.7,54.8" fill="#53ff87"/>
<polygon points="197.2,54.3 198.9,55.5 191.9,61.5 190.3,60.3" fill="#53ff91"/>
<polygon points="190.9,59.8 192.5,61 185.5,67.2 183.9,66" fill="#54ff9c"/>
<polygon points="184.5,65.5 186.1,66.7 179.1,73.1 177.5,71.9" fill="#54ffa7"/>
<polygon points="178,71.4 179.6,72.5 172.6,79.2 171,78" fill="#55ffb2"/>
<polygon points="171.6,77.5 173.2,78.6 166.2,85.4 164.6,84.3" fill="#55ffbd"/>
<polygon points="165.2,83.7 166.7,84.8 159.8,91.8 158.2,90.7" fill="#56ffc9"/>
<polygon points="158.8,90.1 160.3,91.3 153.4,98.4 151.9,97.3" fill="#57ffd4"/>
<polygon points="152.4,96.7 153.9,97.8 147,105.1 145.5,104.1" fill="#57ffe0"/>
<polygon points="146.1,103.5 147.6,104.6 140.7,112 139.2,111" fill="#58ffed"/>
<polygon points="139.8,110.4 141.2,111.4 134.4,119 133,118" fill="#59fff9"/>
<polygon points="257.1,11.5 259.6,13.4 258.4,14.3 255.9,12.4" fill="#55ff39"/>
<polygon points="256.2,12.2 258.6,14 257,15.2 254.5,13.4" fill="#55ff3a"/>
<polygon points="254.9,13 257.3,14.8 254.9,16.5 252.5,14.7" fill="#55ff3c"/>
<polygon points="253,14.4 255.3,16.1 252.2,18.3 249.9,16.6" fill="#55ff3f"/>
<polygon points="250.4,16.2 252.6,17.9 248.8,20.5 246.6,18.8" fill="#55ff42"/>
<polygon points="247.2,18.4 249.3,20.1 244.9,23.2 242.7,21.6" fill="#55ff47"/>
<polygon points="243.3,21.1 245.4,22.7 240.4,26.3 238.3,24.7" fill="#56ff4c"/>
<polygon points="238.9,24.2 241,25.8 235.5,29.8 233.4,28.2" fill="#56ff53"/>
<polygon points="234,27.7 236.1,29.3 230.2,33.6 228.1,32.1" fill="#56ff5a"/>
<polygon points="228.7,31.6 230.8,33.1 224.6,37.8 222.6,36.3" fill="#56ff62"/>
<polygon points="223.2,35.8 225.2,37.3 218.8,42.3 216.7,40.8" fill="#56ff6a"/>
<polygon points="217.3,40.3 219.4,41.8 212.7,47 210.7,45.6" fill="#56ff73"/>
<polygon points="211.3,45.1 213.3,46.6 206.5,52.1 204.5,50.6" fill="#57ff7d"/>
<polygon points="205.1,50.1 207.1,51.6 200.2,57.3 198.2,55.9" fill="#57ff87"/>
<polygon points="198.8,55.4 200.8,56.8 193.8,62.8 191.8,61.4" fill="#58ff91"/>
<polygon points="192.4,60.8 194.4,62.3 187.3,68.5 185.4,67.1" fill="#58ff9c"/>
<polygon points="186,66.5 187.9,67.9 180.9,74.3 179,72.9" fill="#58ffa7"/>
<polygon points="179.5,72.4 181.4,73.8 174.4,80.4 172.5,79" fill="#59ffb2"/>
<polygon points="173.1,78.5 175,79.9 167.9,86.6 166.1,85.3" fill="#5affbd"/>
<polygon points="166.6,84.7 168.5,86.1 161.5,93 159.7,91.7" fill="#5affc9"/>
<polygon points="160.2,91.1 162.1,92.5 155.1,99.6 153.3,98.3" fill="#5bffd4"/>
<polygon points="153.8,97.7 155.6,99 148.7,106.3 146.9,105" fill="#5cffe0"/>
<polygon points="147.4,104.5 149.2,105.7 142.4,113.2 140.6,111.9" fill="#5cffed"/>
<polygon points="141.1,111.3 142.9,112.6 136.1,120.2 134.3,118.9" fill="#5dfff9"/>
<polygon points="259,12.9 261.9,15 260.7,15.9 257.8,13.8" fill="#5bff39"/>
<polygon points="258.1,13.6 260.9,15.6 259.3,16.8 256.5,14.7" fill="#5bff3a"/>
<polygon points="256.9,14.4 259.6,16.4 257.2,18.1 254.5,16.1" fill="#5bff3c"/>
<polygon points="254.9,15.7 257.6,17.7 254.5,19.9 251.8,17.9" fill="#5bff3f"/>
<polygon points="252.3,17.5 254.9,19.5 251.1,22.1 248.6,20.2" fill="#5bff42"/>
<polygon points="249.1,19.8 251.6,21.7 247.2,24.8 244.7,22.9" fill="#5bff47"/>
<polygon points="245.2,22.5 247.7,24.3 242.7,27.9 240.2,26" fill="#5bff4c"/>
<polygon points="240.8,25.6 243.3,27.4 237.8,31.4 235.4,29.5" fill="#5bff53"/>
<polygon points="235.9,29.1 238.4,30.9 232.5,35.2 230.1,33.4" fill="#5bff5a"/>
<polygon points="230.7,32.9 233.1,34.7 226.9,39.4 224.5,37.6" fill="#5bff62"/>
<polygon points="225.1,37.1 227.5,38.9 221,43.8 218.6,42.1" fill="#5cff6a"/>
<polygon points="219.2,41.6 221.6,43.4 214.9,48.6 212.6,46.9" fill="#5cff73"/>
<polygon points="213.1,46.4 215.5,48.1 208.7,53.6 206.4,51.9" fill="#5cff7d"/>
<polygon points="206.9,51.4 209.3,53.1 202.4,58.8 200,57.1" fill="#5cff87"/>
<polygon points="200.6,56.6 202.9,58.3 196,64.3 193.7,62.6" fill="#5dff91"/>
<polygon points="194.2,62.1 196.5,63.8 189.5,70 187.2,68.3" fill="#5dff9c"/>
<polygon points="187.8,67.8 190.1,69.4 183,75.8 180.7,74.2" fill="#5effa7"/>
<polygon points="181.3,73.7 183.6,75.3 176.5,81.8 174.3,80.3" fill="#5effb2"/>
<polygon points="174.8,79.7 177.1,81.3 170,88.1 167.8,86.5" fill="#5fffbd"/>
<polygon points="168.4,85.9 170.6,87.5 163.5,94.4 161.4,92.9" fill="#5fffc9"/>
<polygon points="161.9,92.3 164.1,93.9 157.1,101 155,99.5" fill="#60ffd4"/>
<polygon points="155.5,98.9 157.6,100.4 150.7,107.7 148.6,106.2" fill="#61ffe0"/>
<polygon points="149.1,105.6 151.2,107.1 144.3,114.5 142.2,113" fill="#61ffed"/>
<polygon points="142.8,112.5 144.8,113.9 138,121.5 135.9,120.1" fill="#62fff9"/>
<polygon points="261.3,14.5 264.5,16.8 263.4,17.7 260.1,15.4" fill="#61ff39"/>
<polygon points="260.4,15.2 263.5,17.5 262,18.6 258.8,16.3" fill="#61ff3a"/>
<polygon points="259.1,16 262.2,18.3 259.9,20 256.8,17.7" fill="#61ff3c"/>
<polygon points="257.2,17.3 260.2,19.6 257.2,21.7 254.1,19.5" fill="#61ff3f"/>
<polygon points="254.6,19.1 257.6,21.3 253.8,24 250.8,21.8" fill="#61ff42"/>
<polygon points="251.3,21.4 254.3,23.5 249.8,26.6 246.9,24.5" fill="#61ff47"/>
<polygon points="247.5,24.1 250.3,26.2 245.4,29.7 242.5,27.6" fill="#61ff4c"/>
<polygon points="243.1,27.2 245.9,29.2 240.4,33.2 237.6,31.1" fill="#61ff53"/>
<polygon points="238.2,30.7 241,32.7 235.1,37 232.3,35" fill="#61ff5a"/>
<polygon points="232.9,34.5 235.7,36.5 229.5,41.2 226.7,39.1" fill="#62ff62"/>
<polygon points="227.3,38.7 230.1,40.7 223.6,45.6 220.8,43.6" fill="#62ff6a"/>
<polygon points="221.4,43.2 224.2,45.1 217.5,50.4 214.8,48.4" fill="#62ff73"/>
<polygon points="215.3,47.9 218.1,49.9 211.2,55.3 208.6,53.4" fill="#62ff7d"/>
<polygon points="209.1,52.9 211.8,54.8 204.9,60.6 202.2,58.6" fill="#63ff87"/>
<polygon points="202.8,58.1 205.4,60.1 198.4,66 195.8,64.1" fill="#63ff91"/>
<polygon points="196.4,63.6 199,65.5 191.9,71.6 189.3,69.8" fill="#63ff9c"/>
<polygon points="189.9,69.3 192.5,71.1 185.4,77.5 182.8,75.6" fill="#64ffa7"/>
<polygon points="183.4,75.1 186,77 178.9,83.5 176.3,81.7" fill="#64ffb2"/>
<polygon points="176.9,81.2 179.4,83 172.4,89.7 169.9,87.9" fill="#65ffbd"/>
<polygon points="170.4,87.4 172.9,89.1 165.9,96 163.4,94.3" fill="#65ffc9"/>
<polygon points="163.9,93.7 166.4,95.5 159.4,102.5 156.9,100.8" fill="#66ffd4"/>
<polygon points="157.5,100.3 159.9,102 152.9,109.2 150.5,107.5" fill="#66ffe0"/>
<polygon points="151.1,107 153.5,108.6 146.5,116 144.2,114.4" fill="#67ffed"/>
<polygon points="144.7,113.8 147.1,115.4 140.2,123 137.8,121.3" fill="#68fff9"/>
<polygon points="263.9,16.4 267.5,18.9 266.4,19.7 262.8,17.2" fill="#68ff39"/>
<polygon points="263,17 266.5,19.5 265,20.6 261.4,18.1" fill="#68ff3a"/>
<polygon points="261.7,17.9 265.2,20.3 262.9,22 259.4,19.5" fill="#68ff3c"/>
<polygon points="259.8,19.2 263.2,21.6 260.1,23.8 256.8,21.3" fill="#68ff3f"/>
<polygon points="257.2,20.9 260.5,23.3 256.8,26 253.5,23.6" fill="#68ff42"/>
<polygon points="253.9,23.2 257.2,25.5 252.8,28.6 249.6,26.3" fill="#68ff47"/>
<polygon points="250.1,25.9 253.3,28.2 248.3,31.7 245.1,29.4" fill="#68ff4c"/>
<polygon points="245.6,29 248.8,31.3 243.4,35.2 240.2,32.9" fill="#68ff53"/>
<polygon points="240.8,32.4 243.9,34.7 238.1,39 234.9,36.7" fill="#68ff5a"/>
<polygon points="235.5,36.3 238.6,38.5 232.4,43.1 229.3,40.9" fill="#69ff62"/>
<polygon points="229.8,40.4 233,42.7 226.5,47.6 223.4,45.4" fill="#69ff6a"/>
<polygon points="224,44.9 227.1,47.1 220.4,52.3 217.3,50.1" fill="#69ff73"/>
<polygon points="217.9,49.6 220.9,51.8 214.1,57.3 211.1,55.1" fill="#69ff7d"/>
<polygon points="211.6,54.6 214.7,56.8 207.7,62.5 204.7,60.3" fill="#69ff87"/>
<polygon points="205.3,59.9 208.3,62 201.2,67.9 198.3,65.8" fill="#6aff91"/>
<polygon points="198.8,65.3 201.8,67.4 194.7,73.5 191.8,71.4" fill="#6aff9c"/>
<polygon points="192.3,70.9 195.3,73 188.2,79.3 185.3,77.3" fill="#6affa7"/>
<polygon points="185.8,76.8 188.7,78.8 181.6,85.3 178.7,83.3" fill="#6bffb2"/>
<polygon points="179.3,82.8 182.1,84.8 175,91.5 172.2,89.5" fill="#6bffbd"/>
<polygon points="172.7,89 175.6,91 168.5,97.8 165.7,95.9" fill="#6cffc9"/>
<polygon points="166.2,95.3 169,97.3 162,104.3 159.2,102.4" fill="#6cffd4"/>
<polygon points="159.7,101.8 162.5,103.8 155.5,110.9 152.8,109" fill="#6dffe0"/>
<polygon points="153.3,108.5 156,110.4 149.1,117.7 146.4,115.9" fill="#6effed"/>
<polygon points="146.9,115.3 149.6,117.2 142.6,124.6 140,122.8" fill="#6efff9"/>
<polygon points="266.9,18.4 270.8,21.1 269.7,21.9 265.7,19.3" fill="#70ff39"/>
<polygon points="265.9,19.1 269.8,21.7 268.3,22.8 264.4,20.2" fill="#70ff3a"/>
<polygon points="264.6,19.9 268.5,22.6 266.2,24.2 262.4,21.5" fill="#70ff3c"/>
<polygon points="262.7,21.2 266.5,23.9 263.5,26 259.7,23.3" fill="#70ff3f"/>
<polygon points="260.1,23 263.8,25.6 260.1,28.2 256.4,25.6" fill="#70ff42"/>
<polygon points="256.9,25.2 260.5,27.8 256.1,30.9 252.5,28.3" fill="#70ff47"/>
<polygon points="253,27.9 256.6,30.4 251.6,33.9 248.1,31.4" fill="#70ff4c"/>
<polygon points="248.6,30.9 252.1,33.5 246.7,37.4 243.1,34.9" fill="#70ff53"/>
<polygon points="243.7,34.4 247.2,36.9 241.3,41.2 237.8,38.7" fill="#70ff5a"/>
<polygon points="238.4,38.3 241.9,40.7 235.7,45.3 232.2,42.9" fill="#70ff62"/>
<polygon points="232.7,42.4 236.2,44.8 229.7,49.8 226.3,47.3" fill="#70ff6a"/>
<polygon points="226.8,46.9 230.3,49.3 223.6,54.5 220.2,52.1" fill="#70ff73"/>
<polygon points="220.7,51.6 224.1,54 217.3,59.4 213.9,57" fill="#71ff7d"/>
<polygon points="214.4,56.6 217.8,58.9 210.9,64.6 207.5,62.3" fill="#71ff87"/>
<polygon points="208.1,61.8 211.4,64.1 204.4,70 201,67.7" fill="#71ff91"/>
<polygon points="201.6,67.2 204.9,69.5 197.8,75.6 194.5,73.3" fill="#72ff9c"/>
<polygon points="195.1,72.8 198.3,75.1 191.2,81.4 188,79.1" fill="#72ffa7"/>
<polygon points="188.5,78.6 191.8,80.9 184.6,87.4 181.4,85.1" fill="#72ffb2"/>
<polygon points="181.9,84.6 185.2,86.8 178,93.5 174.9,91.3" fill="#73ffbd"/>
<polygon points="175.4,90.8 178.6,93 171.4,99.8 168.3,97.6" fill="#73ffc9"/>
<polygon points="168.8,97.1 172,99.3 164.9,106.2 161.8,104.1" fill="#74ffd4"/>
<polygon points="162.3,103.6 165.4,105.7 158.4,112.8 155.3,110.8" fill="#74ffe0"/>
<polygon points="155.8,110.2 158.9,112.3 151.9,119.6 148.9,117.5" fill="#75ffed"/>
<polygon points="149.4,117 152.4,119 145.4,126.5 142.5,124.5" fill="#76fff9"/>
<polygon points="270.1,20.7 274.4,23.5 273.3,24.4 269,21.5" fill="#78ff39"/>
<polygon points="269.2,21.3 273.4,24.2 271.9,25.3 267.7,22.4" fill="#78ff3a"/>
<polygon points="267.9,22.1 272.1,25 269.8,26.6 265.7,23.7" fill="#78ff3c"/>
<polygon points="266,23.4 270.1,26.3 267.1,28.4 263,25.5" fill="#78ff3f"/>
<polygon points="263.4,25.2 267.4,28 263.7,30.6 259.7,27.8" fill="#78ff42"/>
<polygon points="260.1,27.4 264.1,30.2 259.8,33.3 255.8,30.5" fill="#78ff47"/>
<polygon points="256.2,30.1 260.2,32.8 255.3,36.3 251.3,33.6" fill="#78ff4c"/>
<polygon points="251.8,33.1 255.7,35.9 250.3,39.8 246.4,37" fill="#78ff53"/>
<polygon points="246.9,36.6 250.8,39.3 244.9,43.6 241.1,40.9" fill="#78ff5a"/>
<polygon points="241.6,40.4 245.4,43.1 239.2,47.7 235.4,45" fill="#78ff62"/>
<polygon points="235.9,44.6 239.7,47.2 233.3,52.1 229.5,49.5" fill="#78ff6a"/>
<polygon points="230,49 233.8,51.6 227.1,56.8 223.4,54.2" fill="#79ff73"/>
<polygon points="223.9,53.7 227.6,56.3 220.8,61.7 217.1,59.1" fill="#79ff7d"/>
<polygon points="217.6,58.7 221.3,61.2 214.3,66.9 210.6,64.3" fill="#79ff87"/>
<polygon points="211.2,63.9 214.9,66.4 207.8,72.3 204.1,69.8" fill="#79ff91"/>
<polygon points="204.7,69.3 208.3,71.8 201.2,77.8 197.6,75.4" fill="#7aff9c"/>
<polygon points="198.1,74.9 201.7,77.3 194.6,83.6 191,81.2" fill="#7affa7"/>
<polygon points="191.5,80.7 195.1,83.1 187.9,89.6 184.4,87.1" fill="#7affb2"/>
<polygon points="184.9,86.6 188.5,89 181.3,95.7 177.8,93.3" fill="#7bffbd"/>
<polygon points="178.3,92.8 181.8,95.1 174.7,101.9 171.2,99.6" fill="#7bffc9"/>
<polygon points="171.7,99.1 175.2,101.4 168.1,108.4 164.7,106" fill="#7cffd4"/>
<polygon points="165.2,105.5 168.6,107.8 161.5,114.9 158.2,112.6" fill="#7cffe0"/>
<polygon points="158.7,112.1 162,114.4 155,121.6 151.7,119.4" fill="#7dffed"/>
<polygon points="152.2,118.9 155.5,121.1 148.5,128.5 145.2,126.3" fill="#7dfff9"/>
<polygon points="273.8,23.1 278.3,26.1 277.2,26.9 272.6,23.9" fill="#81ff39"/>
<polygon points="272.8,23.7 277.3,26.8 275.8,27.8 271.3,24.8" fill="#81ff3a"/>
<polygon points="271.5,24.6 276,27.6 273.8,29.2 269.3,26.1" fill="#81ff3c"/>
<polygon points="269.6,25.8 274,28.9 271.1,31 266.6,27.9" fill="#81ff3f"/>
<polygon points="267,27.6 271.3,30.6 267.7,33.2 263.3,30.2" fill="#81ff42"/>
<polygon points="263.7,29.8 268,32.8 263.7,35.8 259.4,32.9" fill="#81ff47"/>
<polygon points="259.8,32.5 264.1,35.4 259.2,38.9 254.9,35.9" fill="#81ff4c"/>
<polygon points="255.4,35.5 259.6,38.4 254.2,42.3 250,39.4" fill="#81ff53"/>
<polygon points="250.5,39 254.7,41.9 248.8,46.1 244.6,43.2" fill="#81ff5a"/>
<polygon points="245.1,42.8 249.3,45.6 243.1,50.2 239,47.4" fill="#81ff62"/>
<polygon points="239.5,46.9 243.6,49.7 237.1,54.6 233,51.8" fill="#81ff6a"/>
<polygon points="233.5,51.3 237.6,54.1 230.9,59.3 226.9,56.5" fill="#81ff73"/>
<polygon points="227.4,56 231.5,58.8 224.6,64.2 220.5,61.4" fill="#81ff7d"/>
<polygon points="221.1,61 225.1,63.7 218.1,69.3 214.1,66.6" fill="#82ff87"/>
<polygon points="214.6,66.1 218.6,68.9 211.5,74.7 207.6,72" fill="#82ff91"/>
<polygon points="208.1,71.5 212.1,74.2 204.9,80.3 201,77.6" fill="#82ff9c"/>
<polygon points="201.5,77.1 205.4,79.8 198.3,86 194.4,83.4" fill="#82ffa7"/>
<polygon points="194.9,82.9 198.8,85.5 191.6,91.9 187.7,89.3" fill="#83ffb2"/>
<polygon points="188.2,88.8 192.1,91.4 184.9,98 181.1,95.4" fill="#83ffbd"/>
<polygon points="181.6,94.9 185.4,97.5 178.2,104.2 174.5,101.7" fill="#84ffc9"/>
<polygon points="175,101.2 178.7,103.7 171.6,110.6 167.9,108.1" fill="#84ffd4"/>
<polygon points="168.4,107.6 172.1,110.1 164.9,117.2 161.3,114.7" fill="#85ffe0"/>
<polygon points="161.8,114.2 165.4,116.6 158.4,123.8 154.7,121.4" fill="#85ffed"/>
<polygon points="155.2,120.9 158.9,123.3 151.8,130.7 148.3,128.3" fill="#86fff9"/>
<polygon points="277.7,25.7 282.6,28.9 281.5,29.7 276.6,26.5" fill="#8aff39"/>
<polygon points="276.7,26.3 281.6,29.5 280.1,30.6 275.2,27.4" fill="#8aff3a"/>
<polygon points="275.4,27.2 280.2,30.3 278,31.9 273.2,28.7" fill="#8aff3c"/>
<polygon points="273.5,28.4 278.2,31.6 275.3,33.7 270.5,30.5" fill="#8aff3f"/>
<polygon points="270.9,30.2 275.6,33.3 271.9,35.9 267.2,32.8" fill="#8aff42"/>
<polygon points="267.6,32.4 272.2,35.5 267.9,38.5 263.3,35.4" fill="#8aff47"/>
<polygon points="263.7,35 268.3,38.1 263.4,41.6 258.8,38.5" fill="#8aff4c"/>
<polygon points="259.3,38.1 263.8,41.2 258.4,45 253.9,41.9" fill="#8aff53"/>
<polygon points="254.3,41.5 258.9,44.6 253,48.8 248.5,45.8" fill="#8aff5a"/>
<polygon points="249,45.3 253.5,48.3 247.3,52.9 242.8,49.9" fill="#8aff62"/>
<polygon points="243.3,49.4 247.8,52.4 241.3,57.3 236.9,54.3" fill="#8aff6a"/>
<polygon points="237.4,53.8 241.8,56.8 235.1,61.9 230.7,59" fill="#8aff73"/>
<polygon points="231.2,58.5 235.6,61.5 228.7,66.8 224.3,63.9" fill="#8bff7d"/>
<polygon points="224.8,63.4 229.2,66.4 222.2,72 217.9,69.1" fill="#8bff87"/>
<polygon points="218.4,68.6 222.7,71.5 215.6,77.3 211.3,74.4" fill="#8bff91"/>
<polygon points="211.8,73.9 216.1,76.8 208.9,82.8 204.7,80" fill="#8bff9c"/>
<polygon points="205.2,79.5 209.4,82.3 202.2,88.5 198,85.7" fill="#8cffa7"/>
<polygon points="198.5,85.2 202.7,88 195.5,94.4 191.3,91.7" fill="#8cffb2"/>
<polygon points="191.8,91.2 196,93.9 188.8,100.5 184.6,97.7" fill="#8cffbd"/>
<polygon points="185.1,97.2 189.3,100 182,106.7 178,104" fill="#8dffc9"/>
<polygon points="178.5,103.5 182.5,106.2 175.3,113 171.3,110.4" fill="#8dffd4"/>
<polygon points="171.8,109.9 175.8,112.5 168.7,119.5 164.7,116.9" fill="#8dffe0"/>
<polygon points="165.2,116.4 169.2,119 162,126.2 158.1,123.6" fill="#8effed"/>
<polygon points="158.6,123.1 162.5,125.6 155.4,133 151.6,130.4" fill="#8efff9"/>
<polygon points="281.9,28.5 287.1,31.8 286,32.6 280.8,29.2" fill="#93ff39"/>
<polygon points="280.9,29.1 286.1,32.4 284.6,33.4 279.5,30.1" fill="#93ff3a"/>
<polygon points="279.6,29.9 284.8,33.2 282.6,34.8 277.5,31.5" fill="#93ff3c"/>
<polygon points="277.7,31.2 282.8,34.5 279.8,36.6 274.8,33.2" fill="#93ff3f"/>
<polygon points="275.1,32.9 280.1,36.2 276.5,38.8 271.4,35.5" fill="#93ff42"/>
<polygon points="271.8,35.1 276.8,38.4 272.5,41.4 267.5,38.1" fill="#93ff47"/>
<polygon points="267.9,37.7 272.8,41 267.9,44.4 263,41.2" fill="#94ff4c"/>
<polygon points="263.5,40.8 268.3,44 262.9,47.9 258.1,44.6" fill="#94ff53"/>
<polygon points="258.5,44.2 263.4,47.4 257.5,51.6 252.7,48.4" fill="#94ff5a"/>
<polygon points="253.2,48 258,51.2 251.8,55.7 247,52.5" fill="#94ff62"/>
<polygon points="247.5,52.1 252.3,55.2 245.8,60.1 241,56.9" fill="#94ff6a"/>
<polygon points="241.5,56.5 246.2,59.6 239.5,64.7 234.8,61.6" fill="#94ff73"/>
<polygon points="235.3,61.2 240,64.2 233.1,69.6 228.4,66.5" fill="#94ff7d"/>
<polygon points="228.9,66.1 233.6,69.1 226.6,74.7 221.9,71.7" fill="#94ff87"/>
<polygon points="222.4,71.2 227.1,74.2 219.9,80 215.3,77" fill="#95ff91"/>
<polygon points="215.8,76.5 220.4,79.5 213.2,85.5 208.7,82.5" fill="#95ff9c"/>
<polygon points="209.2,82.1 213.7,85 206.5,91.2 202,88.3" fill="#95ffa7"/>
<polygon points="202.5,87.8 207,90.7 199.7,97.1 195.2,94.2" fill="#95ffb2"/>
<polygon points="195.7,93.7 200.2,96.6 192.9,103.1 188.5,100.2" fill="#96ffbd"/>
<polygon points="189,99.7 193.4,102.6 186.2,109.3 181.8,106.4" fill="#96ffc9"/>
<polygon points="182.3,105.9 186.7,108.7 179.4,115.6 175.1,112.8" fill="#96ffd4"/>
<polygon points="175.6,112.3 179.9,115.1 172.7,122 168.4,119.3" fill="#97ffe0"/>
<polygon points="168.9,118.8 173.2,121.5 166,128.7 161.8,125.9" fill="#97ffed"/>
<polygon points="162.3,125.4 166.5,128.1 159.3,135.4 155.2,132.7" fill="#98fff9"/>
<polygon points="286.4,31.4 291.9,34.8 290.8,35.6 285.3,32.1" fill="#9dff39"/>
<polygon points="285.4,32 290.9,35.4 289.4,36.4 284,33" fill="#9dff3a"/>
<polygon points="284.1,32.8 289.6,36.2 287.4,37.8 282,34.3" fill="#9dff3c"/>
<polygon points="282.2,34.1 287.6,37.5 284.7,39.5 279.3,36.1" fill="#9dff3f"/>
<polygon points="279.6,35.8 284.9,39.2 281.3,41.7 276,38.3" fill="#9dff42"/>
<polygon points="276.3,38 281.6,41.4 277.3,44.4 272,41" fill="#9dff47"/>
<polygon points="272.4,40.6 277.6,44 272.8,47.4 267.5,44" fill="#9eff4c"/>
<polygon points="268,43.6 273.1,47 267.7,50.8 262.6,47.5" fill="#9eff53"/>
<polygon points="263,47.1 268.2,50.4 262.3,54.6 257.2,51.3" fill="#9eff5a"/>
<polygon points="257.6,50.8 262.8,54.1 256.6,58.6 251.5,55.3" fill="#9eff62"/>
<polygon points="251.9,54.9 257,58.2 250.5,63 245.5,59.7" fill="#9eff6a"/>
<polygon points="245.9,59.3 251,62.5 244.2,67.6 239.2,64.4" fill="#9eff73"/>
<polygon points="239.7,63.9 244.7,67.2 237.8,72.5 232.8,69.3" fill="#9eff7d"/>
<polygon points="233.3,68.8 238.3,72 231.2,77.6 226.3,74.4" fill="#9eff87"/>
<polygon points="226.8,73.9 231.7,77.1 224.5,82.9 219.6,79.7" fill="#9eff91"/>
<polygon points="220.1,79.2 225,82.4 217.8,88.3 212.9,85.2" fill="#9fff9c"/>
<polygon points="213.4,84.7 218.3,87.9 211,94 206.2,90.9" fill="#9fffa7"/>
<polygon points="206.7,90.4 211.5,93.5 204.2,99.8 199.4,96.8" fill="#9fffb2"/>
<polygon points="199.9,96.3 204.7,99.3 197.4,105.8 192.7,102.8" fill="#9fffbd"/>
<polygon points="193.1,102.3 197.9,105.3 190.6,112 185.9,109" fill="#a0ffc9"/>
<polygon points="186.4,108.5 191,111.5 183.7,118.2 179.1,115.3" fill="#a0ffd4"/>
<polygon points="179.6,114.8 184.2,117.7 177,124.7 172.4,121.8" fill="#a0ffe0"/>
<polygon points="172.9,121.3 177.5,124.2 170.2,131.2 165.7,128.4" fill="#a1ffed"/>
<polygon points="166.2,127.9 170.7,130.7 163.5,137.9 159.1,135.2" fill="#a1fff9"/>
<polygon points="291.2,34.4 297,37.9 295.9,38.7 290.1,35.1" fill="#a8ff39"/>
<polygon points="290.2,35 296,38.5 294.5,39.5 288.8,36" fill="#a8ff3a"/>
<polygon points="288.9,35.8 294.6,39.4 292.5,40.9 286.8,37.3" fill="#a8ff3c"/>
<polygon points="287,37.1 292.7,40.6 289.8,42.6 284.1,39.1" fill="#a8ff3f"/>
<polygon points="284.4,38.8 290,42.3 286.4,44.8 280.8,41.3" fill="#a8ff42"/>
<polygon points="281.1,41 286.7,44.5 282.4,47.5 276.8,44" fill="#a8ff47"/>
<polygon points="277.2,43.6 282.7,47.1 277.8,50.5 272.3,47" fill="#a8ff4c"/>
<polygon points="272.7,46.6 278.2,50.1 272.8,53.9 267.4,50.4" fill="#a8ff53"/>
<polygon points="267.8,50 273.2,53.4 267.4,57.6 262,54.2" fill="#a8ff5a"/>
<polygon points="262.4,53.8 267.8,57.2 261.6,61.7 256.2,58.3" fill="#a8ff62"/>
<polygon points="256.7,57.8 262,61.2 255.5,66 250.2,62.6" fill="#a8ff6a"/>
<polygon points="250.7,62.2 256,65.6 249.2,70.6 243.9,67.3" fill="#a8ff73"/>
<polygon points="244.4,66.8 249.7,70.2 242.8,75.5 237.5,72.2" fill="#a8ff7d"/>
<polygon points="238,71.7 243.2,75 236.2,80.5 230.9,77.2" fill="#a8ff87"/>
<polygon points="231.4,76.8 236.6,80.1 229.4,85.8 224.3,82.5" fill="#a9ff91"/>
<polygon points="224.7,82.1 229.9,85.3 222.7,91.3 217.5,88" fill="#a9ff9c"/>
<polygon points="218,87.6 223.1,90.8 215.8,96.9 210.7,93.7" fill="#a9ffa7"/>
<polygon points="211.2,93.2 216.3,96.4 209,102.7 203.9,99.5" fill="#a9ffb2"/>
<polygon points="204.4,99.1 209.4,102.2 202.1,108.7 197.1,105.5" fill="#aaffbd"/>
<polygon points="197.6,105 202.6,108.2 195.2,114.8 190.3,111.7" fill="#aaffc9"/>
<polygon points="190.8,111.2 195.7,114.3 188.4,121 183.5,118" fill="#aaffd4"/>
<polygon points="183.9,117.5 188.8,120.5 181.5,127.4 176.7,124.4" fill="#abffe0"/>
<polygon points="177.2,123.9 182,126.9 174.7,134 169.9,131" fill="#abffed"/>
<polygon points="170.4,130.5 175.2,133.4 167.9,140.6 163.2,137.7" fill="#abfff9"/>
<polygon points="296.3,37.5 302.3,41.1 301.2,41.9 295.2,38.2" fill="#b2ff39"/>
<polygon points="295.3,38.1 301.3,41.7 299.9,42.7 293.9,39.1" fill="#b2ff3a"/>
<polygon points="294,38.9 300,42.6 297.8,44.1 291.9,40.4" fill="#b2ff3c"/>
<polygon points="292.1,40.2 298,43.8 295.1,45.8 289.2,42.2" fill="#b2ff3f"/>
<polygon points="289.4,41.9 295.3,45.5 291.7,48 285.9,44.4" fill="#b2ff42"/>
<polygon points="286.2,44.1 292,47.7 287.7,50.6 281.9,47" fill="#b2ff47"/>
<polygon points="282.3,46.7 288,50.2 283.2,53.6 277.4,50.1" fill="#b2ff4c"/>
<polygon points="277.8,49.7 283.5,53.2 278.2,57 272.4,53.5" fill="#b2ff53"/>
<polygon points="272.8,53.1 278.5,56.6 272.7,60.7 267,57.2" fill="#b3ff5a"/>
<polygon points="267.4,56.8 273.1,60.3 266.9,64.8 261.2,61.3" fill="#b3ff62"/>
<polygon points="261.7,60.9 267.3,64.4 260.8,69.1 255.2,65.7" fill="#b3ff6a"/>
<polygon points="255.6,65.2 261.3,68.7 254.5,73.7 248.9,70.3" fill="#b3ff73"/>
<polygon points="249.4,69.8 254.9,73.3 248,78.5 242.4,75.1" fill="#b3ff7d"/>
<polygon points="242.9,74.7 248.5,78.1 241.3,83.6 235.8,80.2" fill="#b3ff87"/>
<polygon points="236.3,79.7 241.8,83.1 234.6,88.8 229.1,85.5" fill="#b3ff91"/>
<polygon points="229.6,85 235.1,88.4 227.8,94.3 222.3,91" fill="#b3ff9c"/>
<polygon points="222.8,90.5 228.2,93.8 220.9,99.9 215.5,96.6" fill="#b4ffa7"/>
<polygon points="216,96.1 221.4,99.4 214,105.7 208.7,102.4" fill="#b4ffb2"/>
<polygon points="209.1,101.9 214.5,105.2 207.1,111.6 201.8,108.4" fill="#b4ffbd"/>
<polygon points="202.3,107.9 207.5,111.1 200.1,117.7 194.9,114.5" fill="#b4ffc9"/>
<polygon points="195.4,114 200.6,117.2 193.2,123.9 188.1,120.7" fill="#b5ffd4"/>
<polygon points="188.5,120.2 193.7,123.4 186.3,130.2 181.2,127.1" fill="#b5ffe0"/>
<polygon points="181.7,126.6 186.8,129.7 179.5,136.7 174.4,133.7" fill="#b5ffed"/>
<polygon points="174.9,133.2 179.9,136.2 172.6,143.4 167.7,140.4" fill="#b6fff9"/>
<polygon points="301.6,40.7 307.9,44.4 306.8,45.1 300.6,41.4" fill="#bdff39"/>
<polygon points="300.6,41.3 306.9,45 305.5,46 299.2,42.3" fill="#bdff3a"/>
<polygon points="299.3,42.1 305.6,45.8 303.4,47.3 297.2,43.6" fill="#bdff3c"/>
<polygon points="297.4,43.4 303.6,47.1 300.7,49.1 294.5,45.4" fill="#bdff3f"/>
<polygon points="294.8,45.1 300.9,48.8 297.3,51.2 291.2,47.6" fill="#bdff42"/>
<polygon points="291.5,47.2 297.6,50.9 293.3,53.9 287.2,50.2" fill="#bdff47"/>
<polygon points="287.6,49.8 293.6,53.5 288.8,56.9 282.7,53.2" fill="#bdff4c"/>
<polygon points="283.1,52.8 289.1,56.5 283.7,60.2 277.7,56.6" fill="#bdff53"/>
<polygon points="278.1,56.2 284.1,59.8 278.3,64 272.3,60.4" fill="#bdff5a"/>
<polygon points="272.7,60 278.7,63.5 272.5,68 266.5,64.4" fill="#bdff62"/>
<polygon points="267,64 272.9,67.5 266.4,72.3 260.5,68.8" fill="#bdff6a"/>
<polygon points="260.9,68.3 266.8,71.9 260,76.9 254.2,73.4" fill="#beff73"/>
<polygon points="254.6,72.9 260.4,76.4 253.5,81.7 247.7,78.2" fill="#beff7d"/>
<polygon points="248.1,77.8 253.9,81.2 246.8,86.7 241,83.3" fill="#beff87"/>
<polygon points="241.5,82.8 247.2,86.3 240,91.9 234.3,88.5" fill="#beff91"/>
<polygon points="234.7,88 240.5,91.5 233.1,97.4 227.5,94" fill="#beff9c"/>
<polygon points="227.9,93.5 233.6,96.9 226.2,102.9 220.6,99.6" fill="#beffa7"/>
<polygon points="221,99.1 226.7,102.5 219.3,108.7 213.7,105.4" fill="#bfffb2"/>
<polygon points="214.1,104.9 219.7,108.2 212.3,114.6 206.8,111.3" fill="#bfffbd"/>
<polygon points="207.2,110.8 212.7,114.1 205.3,120.6 199.8,117.4" fill="#bfffc9"/>
<polygon points="200.3,116.9 205.8,120.1 198.3,126.8 192.9,123.6" fill="#bfffd4"/>
<polygon points="193.4,123.1 198.8,126.3 191.4,133.2 186,130" fill="#c0ffe0"/>
<polygon points="186.5,129.5 191.8,132.6 184.5,139.6 179.2,136.5" fill="#c0ffed"/>
<polygon points="179.6,136 184.9,139.1 177.6,146.2 172.3,143.1" fill="#c0fff9"/>
<polygon points="307.2,44 313.7,47.7 312.6,48.4 306.1,44.7" fill="#c8ff39"/>
<polygon points="306.2,44.6 312.7,48.3 311.3,49.3 304.8,45.6" fill="#c8ff3a"/>
<polygon points="304.9,45.4 311.4,49.1 309.2,50.6 302.8,46.9" fill="#c8ff3c"/>
<polygon points="303,46.7 309.4,50.4 306.5,52.4 300.1,48.6" fill="#c8ff3f"/>
<polygon points="300.3,48.3 306.7,52.1 303.2,54.5 296.8,50.8" fill="#c8ff42"/>
<polygon points="297.1,50.5 303.4,54.2 299.2,57.1 292.8,53.4" fill="#c8ff47"/>
<polygon points="293.1,53.1 299.4,56.8 294.6,60.1 288.3,56.5" fill="#c8ff4c"/>
<polygon points="288.7,56.1 294.9,59.7 289.6,63.5 283.3,59.8" fill="#c8ff53"/>
<polygon points="283.7,59.4 289.9,63.1 284.1,67.2 277.9,63.6" fill="#c8ff5a"/>
<polygon points="278.3,63.2 284.5,66.8 278.2,71.2 272.1,67.6" fill="#c9ff62"/>
<polygon points="272.5,67.2 278.6,70.8 272.1,75.5 266,71.9" fill="#c9ff6a"/>
<polygon points="266.4,71.5 272.5,75.1 265.7,80.1 259.6,76.5" fill="#c9ff73"/>
<polygon points="260.1,76.1 266.2,79.6 259.2,84.9 253.1,81.3" fill="#c9ff7d"/>
<polygon points="253.6,80.9 259.6,84.4 252.5,89.9 246.5,86.4" fill="#c9ff87"/>
<polygon points="246.9,85.9 252.9,89.4 245.6,95.1 239.7,91.6" fill="#c9ff91"/>
<polygon points="240.1,91.2 246.1,94.6 238.7,100.5 232.8,97" fill="#c9ff9c"/>
<polygon points="233.3,96.6 239.2,100 231.8,106.1 225.9,102.6" fill="#c9ffa7"/>
<polygon points="226.3,102.2 232.2,105.6 224.8,111.8 218.9,108.4" fill="#caffb2"/>
<polygon points="219.4,107.9 225.2,111.3 217.7,117.7 212,114.3" fill="#caffbd"/>
<polygon points="212.4,113.8 218.2,117.2 210.7,123.7 205,120.3" fill="#caffc9"/>
<polygon points="205.5,119.9 211.2,123.2 203.7,129.8 198,126.5" fill="#caffd4"/>
<polygon points="198.5,126 204.2,129.3 196.7,136.1 191.1,132.9" fill="#cbffe0"/>
<polygon points="191.5,132.4 197.1,135.6 189.7,142.5 184.2,139.3" fill="#cbffed"/>
<polygon points="184.6,138.8 190.2,142 182.7,149.1 177.3,145.9" fill="#cbfff9"/>
<polygon points="313,47.3 319.7,51.1 318.6,51.8 311.9,48" fill="#d4ff39"/>
<polygon points="312,47.9 318.7,51.7 317.3,52.7 310.6,48.9" fill="#d4ff3a"/>
<polygon points="310.7,48.7 317.4,52.5 315.3,54 308.6,50.2" fill="#d4ff3c"/>
<polygon points="308.8,50 315.4,53.7 312.6,55.7 305.9,51.9" fill="#d4ff3f"/>
<polygon points="306.1,51.7 312.7,55.4 309.2,57.9 302.6,54.1" fill="#d4ff42"/>
<polygon points="302.9,53.8 309.4,57.5 305.2,60.5 298.6,56.7" fill="#d4ff47"/>
<polygon points="298.9,56.4 305.5,60.1 300.6,63.4 294.1,59.7" fill="#d4ff4c"/>
<polygon points="294.5,59.3 301,63.1 295.6,66.8 289.1,63.1" fill="#d4ff53"/>
<polygon points="289.5,62.7 295.9,66.4 290.1,70.5 283.7,66.8" fill="#d4ff5a"/>
<polygon points="284.1,66.4 290.5,70.1 284.3,74.5 277.9,70.9" fill="#d4ff62"/>
<polygon points="278.3,70.4 284.6,74.1 278.1,78.8 271.7,75.2" fill="#d4ff6a"/>
<polygon points="272.2,74.7 278.5,78.4 271.7,83.3 265.4,79.7" fill="#d4ff73"/>
<polygon points="265.8,79.3 272.1,82.9 265.1,88.1 258.8,84.5" fill="#d4ff7d"/>
<polygon points="259.3,84.1 265.6,87.7 258.4,93.1 252.1,89.6" fill="#d4ff87"/>
<polygon points="252.6,89.1 258.8,92.7 251.5,98.3 245.3,94.8" fill="#d4ff91"/>
<polygon points="245.8,94.3 252,97.8 244.6,103.7 238.4,100.2" fill="#d4ff9c"/>
<polygon points="238.9,99.7 245,103.2 237.6,109.2 231.4,105.7" fill="#d5ffa7"/>
<polygon points="231.9,105.3 238,108.7 230.5,114.9 224.4,111.5" fill="#d5ffb2"/>
<polygon points="224.9,111 231,114.4 223.4,120.8 217.4,117.3" fill="#d5ffbd"/>
<polygon points="217.9,116.9 223.9,120.3 216.4,126.8 210.4,123.4" fill="#d5ffc9"/>
<polygon points="210.8,122.9 216.8,126.3 209.3,132.9 203.4,129.5" fill="#d5ffd4"/>
<polygon points="203.8,129 209.7,132.4 202.2,139.1 196.4,135.8" fill="#d6ffe0"/>
<polygon points="196.8,135.3 202.7,138.6 195.2,145.5 189.4,142.3" fill="#d6ffed"/>
<polygon points="189.8,141.8 195.6,145 188.1,152 182.4,148.8" fill="#d6fff9"/>
<polygon points="319,50.7 325.9,54.4 324.9,55.2 318,51.4" fill="#dfff39"/>
<polygon points="318,51.3 324.9,55 323.5,56 316.6,52.3" fill="#dfff3a"/>
<polygon points="316.7,52.1 323.6,55.9 321.5,57.3 314.6,53.6" fill="#dfff3c"/>
<polygon points="314.8,53.3 321.6,57.1 318.8,59 312,55.3" fill="#dfff3f"/>
<polygon points="312.2,55 319,58.8 315.4,61.2 308.6,57.5" fill="#dfff42"/>
<polygon points="308.9,57.1 315.7,60.9 311.5,63.8 304.7,60.1" fill="#dfff47"/>
<polygon points="305,59.7 311.7,63.4 306.9,66.8 300.2,63" fill="#dfff4c"/>
<polygon points="300.5,62.7 307.2,66.4 301.8,70.1 295.1,66.4" fill="#dfff53"/>
<polygon points="295.5,66 302.2,69.7 296.3,73.8 289.7,70.1" fill="#dfff5a"/>
<polygon points="290.1,69.7 296.7,73.4 290.5,77.8 283.9,74.1" fill="#dfff62"/>
<polygon points="284.2,73.7 290.9,77.4 284.3,82.1 277.7,78.4" fill="#dfff6a"/>
<polygon points="278.1,78 284.7,81.6 277.9,86.6 271.3,83" fill="#dfff73"/>
<polygon points="271.8,82.5 278.3,86.2 271.3,91.4 264.8,87.8" fill="#e0ff7d"/>
<polygon points="265.2,87.3 271.7,90.9 264.5,96.4 258,92.8" fill="#e0ff87"/>
<polygon points="258.5,92.3 264.9,95.9 257.6,101.5 251.2,98" fill="#e0ff91"/>
<polygon points="251.6,97.5 258,101.1 250.6,106.9 244.2,103.3" fill="#e0ff9c"/>
<polygon points="244.7,102.9 251.1,106.4 243.6,112.4 237.2,108.9" fill="#e0ffa7"/>
<polygon points="237.7,108.4 244,111.9 236.5,118.1 230.2,114.6" fill="#e0ffb2"/>
<polygon points="230.6,114.1 236.9,117.6 229.4,123.9 223.1,120.4" fill="#e0ffbd"/>
<polygon points="223.6,120 229.8,123.4 222.2,129.9 216,126.4" fill="#e1ffc9"/>
<polygon points="216.5,126 222.7,129.4 215.1,136 209,132.6" fill="#e1ffd4"/>
<polygon points="209.4,132.1 215.5,135.5 208,142.2 201.9,138.8" fill="#e1ffe0"/>
<polygon points="202.3,138.4 208.4,141.7 200.9,148.6 194.8,145.2" fill="#e1ffed"/>
<polygon points="195.3,144.7 201.3,148.1 193.8,155 187.8,151.8" fill="#e2fff9"/>
<polygon points="325.2,54 332.3,57.8 331.3,58.5 324.2,54.8" fill="#ebff39"/>
<polygon points="324.3,54.7 331.4,58.4 330,59.4 322.8,55.6" fill="#ebff3a"/>
<polygon points="323,55.5 330,59.2 327.9,60.7 320.9,56.9" fill="#ebff3c"/>
<polygon points="321,56.7 328.1,60.5 325.2,62.4 318.2,58.6" fill="#ebff3f"/>
<polygon points="318.4,58.4 325.4,62.1 321.9,64.6 314.9,60.8" fill="#ebff42"/>
<polygon points="315.1,60.5 322.1,64.3 317.9,67.1 310.9,63.4" fill="#ebff47"/>
<polygon points="311.2,63 318.1,66.8 313.3,70.1 306.4,66.4" fill="#ebff4c"/>
<polygon points="306.7,66 313.6,69.7 308.3,73.5 301.4,69.7" fill="#ebff53"/>
<polygon points="301.7,69.3 308.6,73.1 302.8,77.1 295.9,73.4" fill="#ebff5a"/>
<polygon points="296.3,73 303.1,76.7 296.9,81.1 290.1,77.4" fill="#ebff62"/>
<polygon points="290.5,77 297.3,80.7 290.7,85.4 283.9,81.7" fill="#ebff6a"/>
<polygon points="284.3,81.3 291.1,84.9 284.3,89.9 277.5,86.3" fill="#ebff73"/>
<polygon points="277.9,85.8 284.7,89.5 277.6,94.7 270.9,91" fill="#ebff7d"/>
<polygon points="271.3,90.6 278.1,94.2 270.8,99.6 264.1,96" fill="#ebff87"/>
<polygon points="264.6,95.6 271.3,99.2 263.9,104.8 257.3,101.2" fill="#ebff91"/>
<polygon points="257.7,100.7 264.3,104.3 256.9,110.1 250.3,106.5" fill="#ecff9c"/>
<polygon points="250.7,106.1 257.3,109.6 249.8,115.6 243.2,112.1" fill="#ecffa7"/>
<polygon points="243.7,111.6 250.2,115.1 242.7,121.3 236.1,117.7" fill="#ecffb2"/>
<polygon points="236.6,117.3 243.1,120.8 235.5,127.1 229,123.6" fill="#ecffbd"/>
<polygon points="229.5,123.1 235.9,126.6 228.3,133 221.9,129.5" fill="#ecffc9"/>
<polygon points="222.3,129.1 228.7,132.5 221.1,139.1 214.8,135.7" fill="#ecffd4"/>
<polygon points="215.2,135.2 221.5,138.6 213.9,145.3 207.6,141.9" fill="#edffe0"/>
<polygon points="208.1,141.4 214.4,144.8 206.8,151.6 200.5,148.3" fill="#edffed"/>
<polygon points="201,147.8 207.2,151.1 199.6,158 193.4,154.7" fill="#edfff9"/>
<polygon points="331.6,57.4 338.9,61.2 337.9,61.9 330.6,58.2" fill="#f7ff39"/>
<polygon points="330.7,58 338,61.8 336.6,62.8 329.3,59" fill="#f7ff3a"/>
<polygon points="329.4,58.9 336.6,62.6 334.6,64 327.3,60.3" fill="#f7ff3c"/>
<polygon points="327.4,60.1 334.7,63.8 331.9,65.8 324.6,62" fill="#f7ff3f"/>
<polygon points="324.8,61.7 332,65.5 328.5,67.9 321.3,64.2" fill="#f7ff42"/>
<polygon points="321.5,63.9 328.7,67.6 324.5,70.5 317.3,66.7" fill="#f7ff47"/>
<polygon points="317.6,66.4 324.8,70.1 320,73.5 312.8,69.7" fill="#f7ff4c"/>
<polygon points="313.1,69.3 320.2,73.1 314.9,76.8 307.8,73.1" fill="#f7ff53"/>
<polygon points="308.1,72.7 315.2,76.4 309.4,80.4 302.3,76.8" fill="#f7ff5a"/>
<polygon points="302.7,76.3 309.7,80 303.5,84.4 296.5,80.7" fill="#f7ff62"/>
<polygon points="296.9,80.3 303.9,84 297.3,88.7 290.3,85" fill="#f7ff6a"/>
<polygon points="290.7,84.6 297.7,88.2 290.9,93.2 283.9,89.5" fill="#f7ff73"/>
<polygon points="284.3,89.1 291.3,92.7 284.2,97.9 277.3,94.3" fill="#f7ff7d"/>
<polygon points="277.7,93.9 284.6,97.5 277.4,102.9 270.5,99.3" fill="#f7ff87"/>
<polygon points="270.9,98.8 277.8,102.4 270.4,108 263.5,104.4" fill="#f7ff91"/>
<polygon points="264,104 270.8,107.5 263.3,113.3 256.5,109.8" fill="#f7ff9c"/>
<polygon points="257,109.3 263.8,112.9 256.2,118.8 249.4,115.3" fill="#f8ffa7"/>
<polygon points="249.9,114.8 256.6,118.3 249,124.4 242.3,120.9" fill="#f8ffb2"/>
<polygon points="242.7,120.5 249.5,124 241.8,130.2 235.1,126.7" fill="#f8ffbd"/>
<polygon points="235.6,126.3 242.2,129.7 234.6,136.1 228,132.7" fill="#f8ffc9"/>
<polygon points="228.4,132.2 235,135.6 227.3,142.2 220.8,138.8" fill="#f8ffd4"/>
<polygon points="221.2,138.3 227.8,141.7 220.1,148.4 213.6,145" fill="#f8ffe0"/>
<polygon points="214,144.5 220.5,147.9 212.9,154.7 206.4,151.3" fill="#f9ffed"/>
<polygon points="206.9,150.8 213.3,154.2 205.7,161.1 199.3,157.7" fill="#f9fff9"/>
<polygon points="96.1,440.5 96.7,440.2 96.6,435.4 95.9,435.7" fill="#2701fa"/>
<polygon points="96,436.4 96.6,436.2 96.4,430.2 95.8,430.4" fill="#2705fa"/>
<polygon points="95.8,431.2 96.4,431 96.2,422.6 95.6,422.8" fill="#280afa"/>
<polygon points="95.6,423.5 96.2,423.4 96,412.8 95.4,412.9" fill="#2810fa"/>
<polygon points="95.4,413.7 96,413.6 95.8,401.1 95.2,401.1" fill="#2817fb"/>
<polygon points="95.2,401.9 95.8,401.9 95.8,387.8 95.2,387.7" fill="#281efb"/>
<polygon points="95.2,388.5 95.8,388.6 95.9,373.3 95.3,373.2" fill="#2926fb"/>
<polygon points="95.3,374 95.9,374.1 96.3,358 95.7,357.8" fill="#292ffb"/>
<polygon points="95.7,358.6 96.2,358.8 96.8,342.1 96.3,341.9" fill="#2a39fb"/>
<polygon points="96.3,342.7 96.8,342.9 97.7,326 97.2,325.8" fill="#2b43fb"/>
<polygon points="97.1,326.6 97.6,326.8 98.8,309.7 98.3,309.5" fill="#2c4dfb"/>
<polygon points="98.2,310.3 98.7,310.5 100.1,293.5 99.7,293.3" fill="#2d58fb"/>
<polygon points="99.6,294.1 100.1,294.3 101.7,277.4 101.3,277.2" fill="#2f63fb"/>
<polygon points="101.2,278 101.7,278.2 103.6,261.5 103.1,261.2" fill="#306ffb"/>
<polygon points="103,262 103.5,262.3 105.6,245.8 105.2,245.6" fill="#327bfb"/>
<polygon points="105.1,246.4 105.5,246.6 107.8,230.4 107.4,230.1" fill="#3587fc"/>
<polygon points="107.3,230.9 107.7,231.2 110.3,215.2 109.8,214.9" fill="#3794fc"/>
<polygon points="109.7,215.7 110.1,216 112.8,200.3 112.4,200" fill="#3aa1fc"/>
<polygon points="112.3,200.8 112.7,201.1 115.5,185.6 115.1,185.3" fill="#3daffc"/>
<polygon points="115,186.1 115.4,186.4 118.3,171.1 118,170.9" fill="#40bdfd"/>
<polygon points="117.8,171.6 118.2,171.9 121.3,156.9 120.9,156.6" fill="#43cbfd"/>
<polygon points="120.7,157.4 121.1,157.7 124.3,142.8 123.9,142.6" fill="#47d9fe"/>
<polygon points="123.8,143.4 124.1,143.6 127.3,129 127,128.8" fill="#4ae8fe"/>
<polygon points="126.8,129.5 127.2,129.8 130.5,115.3 130.2,115.1" fill="#4ef7ff"/>
<polygon points="96.6,440.2 97.5,439.8 97.3,435.1 96.4,435.4" fill="#2901fa"/>
<polygon points="96.5,436.2 97.3,435.9 97.1,429.9 96.3,430.2" fill="#2905fa"/>
<polygon points="96.3,431 97.1,430.7 96.9,422.4 96.1,422.6" fill="#290afa"/>
<polygon points="96.1,423.4 96.9,423.2 96.7,412.7 95.9,412.8" fill="#2a10fa"/>
<polygon points="95.9,413.6 96.7,413.5 96.5,401.1 95.8,401.1" fill="#2a17fb"/>
<polygon points="95.8,401.9 96.5,401.9 96.5,387.8 95.7,387.8" fill="#2a1efb"/>
<polygon points="95.7,388.6 96.5,388.6 96.6,373.4 95.9,373.3" fill="#2a26fb"/>
<polygon points="95.9,374.1 96.6,374.2 97,358.2 96.2,358" fill="#2b2ffb"/>
<polygon points="96.2,358.8 96.9,359 97.5,342.4 96.8,342.1" fill="#2c39fb"/>
<polygon points="96.8,342.9 97.5,343.2 98.4,326.3 97.7,326" fill="#2d43fb"/>
<polygon points="97.6,326.8 98.3,327.1 99.5,310.1 98.8,309.7" fill="#2e4dfb"/>
<polygon points="98.7,310.5 99.4,310.9 100.8,293.9 100.1,293.5" fill="#2f58fb"/>
<polygon points="100,294.3 100.7,294.7 102.4,277.8 101.7,277.4" fill="#3063fb"/>
<polygon points="101.6,278.2 102.3,278.6 104.2,261.9 103.5,261.5" fill="#326ffb"/>
<polygon points="103.4,262.3 104.1,262.7 106.2,246.2 105.6,245.8" fill="#347bfb"/>
<polygon points="105.5,246.6 106.1,247 108.4,230.8 107.8,230.4" fill="#3687fc"/>
<polygon points="107.7,231.2 108.3,231.6 110.8,215.6 110.2,215.2" fill="#3894fc"/>
<polygon points="110.1,216 110.7,216.4 113.3,200.6 112.8,200.3" fill="#3ba1fc"/>
<polygon points="112.7,201.1 113.2,201.4 116,185.9 115.5,185.6" fill="#3eaffc"/>
<polygon points="115.3,186.4 115.9,186.7 118.8,171.4 118.3,171.1" fill="#41bdfd"/>
<polygon points="118.2,171.9 118.6,172.2 121.7,157.2 121.2,156.9" fill="#44cbfd"/>
<polygon points="121.1,157.6 121.5,158 124.7,143.1 124.2,142.8" fill="#48d9fe"/>
<polygon points="124.1,143.6 124.5,143.9 127.8,129.3 127.3,129" fill="#4be8fe"/>
<polygon points="127.1,129.8 127.6,130.1 130.9,115.6 130.5,115.3" fill="#4ff7ff"/>
<polygon points="97.3,439.8 98.6,439.3 98.4,434.7 97.1,435.1" fill="#2c01fa"/>
<polygon points="97.2,435.9 98.5,435.4 98.3,429.6 97,430" fill="#2c05fa"/>
<polygon points="97,430.7 98.3,430.4 98,422.2 96.8,422.4" fill="#2c0afa"/>
<polygon points="96.8,423.2 98,423 97.8,412.6 96.6,412.7" fill="#2c10fa"/>
<polygon points="96.6,413.5 97.8,413.3 97.7,401 96.5,401.1" fill="#2c17fb"/>
<polygon points="96.5,401.9 97.7,401.8 97.6,387.9 96.5,387.8" fill="#2c1efb"/>
<polygon points="96.5,388.6 97.6,388.7 97.7,373.6 96.6,373.4" fill="#2d26fb"/>
<polygon points="96.6,374.2 97.7,374.4 98.1,358.5 96.9,358.2" fill="#2d2ffb"/>
<polygon points="96.9,359 98,359.3 98.6,342.8 97.5,342.4" fill="#2e39fb"/>
<polygon points="97.5,343.2 98.6,343.6 99.4,326.7 98.3,326.3" fill="#2f43fb"/>
<polygon points="98.3,327.1 99.4,327.5 100.5,310.6 99.4,310.1" fill="#304dfb"/>
<polygon points="99.4,310.9 100.4,311.4 101.8,294.4 100.7,293.9" fill="#3158fb"/>
<polygon points="100.7,294.7 101.7,295.2 103.3,278.3 102.3,277.8" fill="#3263fb"/>
<polygon points="102.2,278.6 103.2,279.1 105.1,262.4 104.1,261.9" fill="#346ffb"/>
<polygon points="104,262.7 105,263.2 107.1,246.8 106.2,246.2" fill="#367bfb"/>
<polygon points="106,247 107,247.6 109.2,231.3 108.4,230.8" fill="#3887fc"/>
<polygon points="108.2,231.5 109.1,232.1 111.6,216.1 110.8,215.6" fill="#3a94fc"/>
<polygon points="110.6,216.4 111.5,216.9 114.1,201.2 113.3,200.6" fill="#3da1fc"/>
<polygon points="113.2,201.4 114,201.9 116.8,186.4 116,185.9" fill="#40affc"/>
<polygon points="115.8,186.7 116.6,187.2 119.5,171.9 118.8,171.4" fill="#42bdfd"/>
<polygon points="118.6,172.2 119.4,172.7 122.4,157.7 121.7,157.2" fill="#46cbfd"/>
<polygon points="121.5,158 122.2,158.5 125.4,143.6 124.7,143.1" fill="#49d9fe"/>
<polygon points="124.5,143.9 125.2,144.4 128.4,129.7 127.7,129.3" fill="#4de8fe"/>
<polygon points="127.6,130.1 128.2,130.5 131.5,116 130.9,115.6" fill="#50f7ff"/>
<polygon points="98.4,439.3 100.2,438.6 100,434.1 98.2,434.7" fill="#2f01fa"/>
<polygon points="98.3,435.5 100,434.8 99.8,429.1 98.1,429.6" fill="#2f05fa"/>
<polygon points="98.1,430.4 99.8,429.8 99.6,421.8 97.9,422.2" fill="#2f0afa"/>
<polygon points="97.9,423 99.6,422.6 99.4,412.3 97.7,412.6" fill="#2f10fa"/>
<polygon points="97.7,413.3 99.4,413.1 99.2,401 97.6,401" fill="#3017fb"/>
<polygon points="97.6,401.8 99.2,401.8 99.1,388.1 97.5,387.9" fill="#301efb"/>
<polygon points="97.5,388.7 99.1,388.9 99.2,373.9 97.7,373.6" fill="#3026fb"/>
<polygon points="97.7,374.4 99.2,374.7 99.5,358.9 98,358.5" fill="#312ffb"/>
<polygon points="98,359.3 99.5,359.7 100.1,343.3 98.5,342.8" fill="#3139fb"/>
<polygon points="98.5,343.6 100,344.1 100.8,327.3 99.3,326.7" fill="#3243fb"/>
<polygon points="99.3,327.5 100.8,328.1 101.8,311.2 100.4,310.6" fill="#334dfb"/>
<polygon points="100.3,311.3 101.8,312 103.1,295.1 101.7,294.4" fill="#3458fb"/>
<polygon points="101.6,295.2 103,295.9 104.6,279.1 103.3,278.3" fill="#3563fb"/>
<polygon points="103.2,279.1 104.5,279.9 106.3,263.2 105,262.4" fill="#376ffb"/>
<polygon points="104.9,263.2 106.2,264 108.3,247.5 107,246.8" fill="#397bfb"/>
<polygon points="106.9,247.5 108.2,248.3 110.4,232.1 109.2,231.3" fill="#3b87fc"/>
<polygon points="109.1,232.1 110.3,232.9 112.7,216.9 111.5,216.1" fill="#3d94fc"/>
<polygon points="111.4,216.9 112.6,217.6 115.2,201.9 114.1,201.1" fill="#3fa1fc"/>
<polygon points="113.9,201.9 115,202.7 117.8,187.1 116.7,186.4" fill="#42affc"/>
<polygon points="116.6,187.2 117.6,187.9 120.5,172.6 119.5,171.9" fill="#45bdfd"/>
<polygon points="119.3,172.7 120.4,173.4 123.3,158.3 122.3,157.7" fill="#48cbfd"/>
<polygon points="122.2,158.4 123.2,159.1 126.3,144.2 125.3,143.6" fill="#4bd9fe"/>
<polygon points="125.1,144.4 126.1,145 129.3,130.3 128.4,129.7" fill="#4ee8fe"/>
<polygon points="128.2,130.5 129.1,131.1 132.3,116.6 131.5,116" fill="#52f7ff"/>
<polygon points="99.9,438.6 102.2,437.7 102,433.3 99.6,434.1" fill="#3401fa"/>
<polygon points="99.8,434.8 102,434 101.8,428.4 99.5,429.1" fill="#3405fa"/>
<polygon points="99.6,429.8 101.8,429.2 101.5,421.3 99.4,421.8" fill="#340afa"/>
<polygon points="99.4,422.6 101.5,422.1 101.3,412.1 99.2,412.3" fill="#3410fa"/>
<polygon points="99.2,413.1 101.3,412.9 101.1,400.9 99.1,401" fill="#3417fb"/>
<polygon points="99.1,401.8 101.1,401.7 101.1,388.2 99,388.1" fill="#341efb"/>
<polygon points="99,388.9 101.1,389 101.2,374.3 99.1,373.9" fill="#3526fb"/>
<polygon points="99.1,374.7 101.1,375 101.4,359.4 99.4,358.9" fill="#352ffb"/>
<polygon points="99.4,359.7 101.4,360.2 101.9,343.9 100,343.3" fill="#3639fb"/>
<polygon points="99.9,344.1 101.9,344.7 102.6,328.1 100.7,327.3" fill="#3643fb"/>
<polygon points="100.7,328.1 102.6,328.9 103.6,312.1 101.8,311.2" fill="#374dfb"/>
<polygon points="101.7,312 103.6,312.9 104.8,296 103,295.1" fill="#3858fb"/>
<polygon points="103,295.9 104.8,296.8 106.3,280 104.5,279.1" fill="#3963fb"/>
<polygon points="104.4,279.9 106.2,280.8 107.9,264.2 106.3,263.2" fill="#3b6ffb"/>
<polygon points="106.2,264 107.8,264.9 109.8,248.5 108.2,247.5" fill="#3c7bfb"/>
<polygon points="108.1,248.3 109.7,249.3 111.9,233 110.3,232.1" fill="#3e87fc"/>
<polygon points="110.2,232.8 111.8,233.8 114.2,217.8 112.6,216.8" fill="#4094fc"/>
<polygon points="112.5,217.6 114,218.6 116.6,202.8 115.1,201.9" fill="#43a1fc"/>
<polygon points="115,202.7 116.4,203.6 119.1,188.1 117.7,187.1" fill="#45affc"/>
<polygon points="117.6,187.9 119,188.8 121.8,173.5 120.4,172.6" fill="#48bdfd"/>
<polygon points="120.3,173.4 121.6,174.3 124.6,159.2 123.3,158.3" fill="#4bcbfd"/>
<polygon points="123.1,159.1 124.4,160 127.4,145.1 126.2,144.2" fill="#4ed9fe"/>
<polygon points="126,145 127.3,145.8 130.4,131.1 129.2,130.3" fill="#51e8fe"/>
<polygon points="129,131.1 130.2,131.9 133.4,117.4 132.3,116.6" fill="#55f7ff"/>
<polygon points="101.8,437.7 104.6,436.7 104.4,432.4 101.5,433.4" fill="#3901fa"/>
<polygon points="101.7,434.1 104.4,433.1 104.2,427.7 101.4,428.5" fill="#3a05fa"/>
<polygon points="101.5,429.2 104.2,428.4 103.9,420.8 101.3,421.3" fill="#3a0afa"/>
<polygon points="101.4,422.1 103.9,421.5 103.7,411.7 101.1,412.1" fill="#3a10fa"/>
<polygon points="101.2,412.9 103.7,412.5 103.5,400.9 101,400.9" fill="#3a17fb"/>
<polygon points="101,401.7 103.5,401.6 103.5,388.4 100.9,388.2" fill="#3a1efb"/>
<polygon points="101,389 103.4,389.2 103.5,374.7 101,374.3" fill="#3a26fb"/>
<polygon points="101,375 103.5,375.4 103.8,360 101.3,359.4" fill="#3b2ffb"/>
<polygon points="101.3,360.2 103.7,360.8 104.2,344.7 101.8,343.9" fill="#3b39fb"/>
<polygon points="101.8,344.7 104.2,345.5 104.9,329 102.5,328.1" fill="#3c43fb"/>
<polygon points="102.5,328.9 104.8,329.8 105.8,313.1 103.5,312.1" fill="#3d4dfb"/>
<polygon points="103.5,312.8 105.7,313.9 106.9,297.1 104.7,296" fill="#3d58fb"/>
<polygon points="104.7,296.8 106.9,297.9 108.3,281.1 106.2,280" fill="#3f63fb"/>
<polygon points="106.1,280.8 108.2,281.9 109.9,265.3 107.8,264.1" fill="#406ffb"/>
<polygon points="107.8,264.9 109.8,266.1 111.7,249.7 109.7,248.5" fill="#417bfb"/>
<polygon points="109.6,249.3 111.6,250.5 113.7,234.2 111.8,233" fill="#4387fc"/>
<polygon points="111.7,233.8 113.6,235 115.9,219 114.1,217.8" fill="#4594fc"/>
<polygon points="113.9,218.6 115.8,219.8 118.3,204 116.5,202.8" fill="#47a1fc"/>
<polygon points="116.3,203.6 118.1,204.7 120.8,189.2 119,188" fill="#49affc"/>
<polygon points="118.9,188.8 120.6,189.9 123.4,174.6 121.7,173.5" fill="#4cbdfd"/>
<polygon points="121.6,174.3 123.2,175.4 126.1,160.2 124.5,159.2" fill="#4fcbfd"/>
<polygon points="124.3,160 125.9,161 128.9,146.1 127.4,145.1" fill="#52d9fe"/>
<polygon points="127.2,145.8 128.7,146.9 131.8,132.1 130.3,131.1" fill="#55e8fe"/>
<polygon points="130.2,131.9 131.6,132.9 134.8,118.3 133.4,117.4" fill="#58f7ff"/>
<polygon points="104.1,436.7 107.4,435.5 107.2,431.4 103.9,432.5" fill="#4001fa"/>
<polygon points="104,433.2 107.2,432.1 107,426.8 103.8,427.7" fill="#4005fa"/>
<polygon points="103.9,428.4 107,427.5 106.8,420.1 103.7,420.8" fill="#400afa"/>
<polygon points="103.7,421.5 106.8,420.9 106.5,411.4 103.5,411.8" fill="#4010fa"/>
<polygon points="103.5,412.5 106.5,412.1 106.4,400.8 103.4,400.9" fill="#4017fb"/>
<polygon points="103.4,401.6 106.4,401.5 106.3,388.6 103.3,388.4" fill="#411efb"/>
<polygon points="103.3,389.2 106.3,389.3 106.3,375.1 103.4,374.7" fill="#4126fb"/>
<polygon points="103.4,375.4 106.3,375.9 106.5,360.7 103.6,360" fill="#412ffb"/>
<polygon points="103.6,360.8 106.5,361.5 106.9,345.6 104.1,344.7" fill="#4239fb"/>
<polygon points="104,345.5 106.9,346.4 107.5,330 104.7,329" fill="#4243fb"/>
<polygon points="104.7,329.8 107.5,330.8 108.4,314.2 105.7,313.1" fill="#434dfb"/>
<polygon points="105.6,313.9 108.3,315 109.4,298.4 106.8,297.1" fill="#4458fb"/>
<polygon points="106.7,297.9 109.4,299.1 110.7,282.5 108.2,281.1" fill="#4563fb"/>
<polygon points="108.1,281.9 110.7,283.3 112.3,266.7 109.8,265.3" fill="#466ffb"/>
<polygon points="109.7,266.1 112.2,267.5 114,251 111.6,249.7" fill="#477bfb"/>
<polygon points="111.5,250.4 113.9,251.8 115.9,235.6 113.6,234.2" fill="#4987fc"/>
<polygon points="113.5,235 115.8,236.4 118,220.3 115.8,219" fill="#4a94fc"/>
<polygon points="115.7,219.7 117.9,221.1 120.3,205.3 118.2,203.9" fill="#4ca1fc"/>
<polygon points="118,204.7 120.2,206.1 122.7,190.5 120.6,189.1" fill="#4eaffc"/>
<polygon points="120.5,189.9 122.6,191.3 125.3,175.9 123.3,174.6" fill="#51bdfd"/>
<polygon points="123.1,175.4 125.1,176.7 127.9,161.5 126,160.2" fill="#53cbfd"/>
<polygon points="125.8,161 127.8,162.3 130.7,147.3 128.8,146.1" fill="#56d9fe"/>
<polygon points="128.6,146.8 130.5,148.1 133.5,133.3 131.7,132.1" fill="#59e8fe"/>
<polygon points="131.5,132.9 133.3,134.1 136.4,119.4 134.7,118.3" fill="#5cf7ff"/>
<polygon points="106.9,435.5 110.7,434.1 110.4,430.3 106.6,431.5" fill="#4801fa"/>
<polygon points="106.8,432.1 110.5,430.9 110.3,425.9 106.6,426.9" fill="#4805fa"/>
<polygon points="106.7,427.6 110.3,426.6 110,419.4 106.4,420.2" fill="#480afa"/>
<polygon points="106.5,420.9 110,420.1 109.8,410.9 106.3,411.4" fill="#4810fa"/>
<polygon points="106.3,412.1 109.8,411.7 109.6,400.6 106.1,400.8" fill="#4817fb"/>
<polygon points="106.2,401.5 109.6,401.4 109.5,388.7 106.1,388.6" fill="#481efb"/>
<polygon points="106.1,389.3 109.5,389.5 109.5,375.6 106.1,375.1" fill="#4826fb"/>
<polygon points="106.1,375.9 109.5,376.4 109.7,361.4 106.3,360.7" fill="#482ffb"/>
<polygon points="106.3,361.5 109.6,362.2 110,346.6 106.7,345.6" fill="#4939fb"/>
<polygon points="106.7,346.4 110,347.3 110.6,331.2 107.4,330" fill="#4943fb"/>
<polygon points="107.3,330.8 110.5,332 111.3,315.6 108.2,314.2" fill="#4a4dfb"/>
<polygon points="108.2,315 111.3,316.3 112.3,299.8 109.3,298.3" fill="#4b58fb"/>
<polygon points="109.2,299.1 112.3,300.6 113.6,284 110.6,282.5" fill="#4c63fb"/>
<polygon points="110.5,283.2 113.5,284.8 115,268.2 112.1,266.7" fill="#4d6ffb"/>
<polygon points="112.1,267.5 114.9,269 116.7,252.6 113.9,251" fill="#4e7bfb"/>
<polygon points="113.8,251.8 116.6,253.4 118.5,237.2 115.8,235.6" fill="#4f87fc"/>
<polygon points="115.7,236.4 118.4,238 120.5,221.9 117.9,220.3" fill="#5194fc"/>
<polygon points="117.8,221.1 120.4,222.7 122.7,206.9 120.2,205.3" fill="#52a1fc"/>
<polygon points="120.1,206.1 122.6,207.6 125,192 122.6,190.5" fill="#54affc"/>
<polygon points="122.5,191.2 124.9,192.8 127.5,177.4 125.1,175.9" fill="#57bdfd"/>
<polygon points="125,176.6 127.3,178.1 130,162.9 127.8,161.5" fill="#59cbfd"/>
<polygon points="127.6,162.2 129.9,163.7 132.7,148.7 130.5,147.3" fill="#5bd9fe"/>
<polygon points="130.4,148 132.5,149.5 135.5,134.6 133.4,133.3" fill="#5ee8fe"/>
<polygon points="133.2,134 135.3,135.4 138.3,120.8 136.3,119.4" fill="#61f7ff"/>
<polygon points="110.1,434.2 114.3,432.7 114.1,429.1 109.8,430.4" fill="#5001fa"/>
<polygon points="110,430.9 114.1,429.6 113.9,424.8 109.8,426" fill="#5005fa"/>
<polygon points="109.9,426.6 113.9,425.5 113.7,418.6 109.6,419.4" fill="#500afa"/>
<polygon points="109.7,420.1 113.7,419.3 113.5,410.4 109.5,410.9" fill="#5010fa"/>
<polygon points="109.5,411.7 113.5,411.2 113.3,400.5 109.4,400.6" fill="#5017fb"/>
<polygon points="109.4,401.4 113.3,401.2 113.1,388.9 109.3,388.8" fill="#501efb"/>
<polygon points="109.3,389.5 113.1,389.7 113.1,376.1 109.3,375.6" fill="#5026fb"/>
<polygon points="109.3,376.4 113.1,376.9 113.2,362.2 109.5,361.4" fill="#502ffb"/>
<polygon points="109.5,362.2 113.2,363 113.5,347.6 109.8,346.6" fill="#5139fb"/>
<polygon points="109.8,347.3 113.5,348.4 114,332.5 110.4,331.2" fill="#5143fb"/>
<polygon points="110.4,332 114,333.3 114.7,317 111.2,315.6" fill="#524dfb"/>
<polygon points="111.1,316.3 114.7,317.8 115.6,301.4 112.2,299.8" fill="#5258fb"/>
<polygon points="112.1,300.6 115.6,302.1 116.8,285.6 113.4,284" fill="#5363fb"/>
<polygon points="113.3,284.7 116.7,286.4 118.1,270 114.9,268.2" fill="#546ffb"/>
<polygon points="114.8,269 118,270.7 119.7,254.4 116.5,252.6" fill="#557bfb"/>
<polygon points="116.4,253.4 119.6,255.2 121.4,238.9 118.3,237.2" fill="#5687fc"/>
<polygon points="118.2,237.9 121.3,239.7 123.3,223.7 120.4,221.9" fill="#5894fc"/>
<polygon points="120.2,222.7 123.2,224.5 125.4,208.6 122.5,206.8" fill="#59a1fc"/>
<polygon points="122.4,207.6 125.3,209.4 127.6,193.7 124.9,192" fill="#5baffc"/>
<polygon points="124.7,192.8 127.5,194.5 130,179.1 127.3,177.3" fill="#5dbdfd"/>
<polygon points="127.2,178.1 129.9,179.8 132.5,164.6 129.9,162.9" fill="#5fcbfd"/>
<polygon points="129.7,163.7 132.3,165.3 135.1,150.3 132.6,148.7" fill="#62d9fe"/>
<polygon points="132.4,149.4 134.9,151.1 137.7,136.2 135.3,134.6" fill="#64e8fe"/>
<polygon points="135.2,135.4 137.6,136.9 140.5,122.2 138.2,120.7" fill="#67f7ff"/>
<polygon points="113.7,432.8 118.3,431.2 118.1,427.8 113.5,429.2" fill="#5801fa"/>
<polygon points="113.6,429.7 118.2,428.3 118,423.7 113.4,424.9" fill="#5805fa"/>
<polygon points="113.5,425.5 118,424.3 117.7,417.7 113.3,418.6" fill="#580afa"/>
<polygon points="113.4,419.3 117.8,418.4 117.5,409.9 113.1,410.5" fill="#5810fa"/>
<polygon points="113.2,411.2 117.5,410.6 117.3,400.3 113,400.5" fill="#5917fb"/>
<polygon points="113,401.2 117.3,401 117.2,389.1 112.9,388.9" fill="#591efb"/>
<polygon points="112.9,389.7 117.1,389.8 117.1,376.6 112.9,376.1" fill="#5926fb"/>
<polygon points="112.9,376.9 117.1,377.4 117.2,363.1 113,362.2" fill="#592ffb"/>
<polygon points="113,363 117.2,363.8 117.4,348.7 113.3,347.6" fill="#5939fb"/>
<polygon points="113.3,348.4 117.4,349.5 117.9,333.8 113.8,332.5" fill="#5a43fb"/>
<polygon points="113.8,333.2 117.8,334.6 118.5,318.5 114.5,317" fill="#5a4dfb"/>
<polygon points="114.5,317.8 118.4,319.3 119.3,303 115.5,301.3" fill="#5b58fb"/>
<polygon points="115.4,302.1 119.2,303.8 120.4,287.4 116.6,285.6" fill="#5b63fb"/>
<polygon points="116.5,286.4 120.3,288.2 121.6,271.8 117.9,269.9" fill="#5c6ffb"/>
<polygon points="117.9,270.7 121.5,272.6 123,256.3 119.5,254.4" fill="#5d7bfb"/>
<polygon points="119.4,255.1 123,257.1 124.7,240.9 121.2,238.9" fill="#5e87fc"/>
<polygon points="121.1,239.7 124.6,241.7 126.5,225.6 123.2,223.7" fill="#6094fc"/>
<polygon points="123,224.4 126.4,226.4 128.5,210.5 125.2,208.6" fill="#61a1fc"/>
<polygon points="125.1,209.4 128.3,211.3 130.6,195.6 127.5,193.7" fill="#63affc"/>
<polygon points="127.3,194.5 130.5,196.4 132.8,180.9 129.8,179" fill="#64bdfd"/>
<polygon points="129.7,179.8 132.7,181.7 135.2,166.4 132.3,164.5" fill="#66cbfd"/>
<polygon points="132.2,165.3 135.1,167.2 137.7,152.1 134.9,150.3" fill="#69d9fe"/>
<polygon points="134.8,151 137.6,152.8 140.3,137.9 137.6,136.1" fill="#6be8fe"/>
<polygon points="137.4,136.9 140.1,138.7 143,123.9 140.4,122.2" fill="#6df7ff"/>
<polygon points="117.7,431.4 122.7,429.7 122.5,426.4 117.5,427.9" fill="#6101fa"/>
<polygon points="117.6,428.4 122.6,426.9 122.4,422.5 117.4,423.8" fill="#6105fa"/>
<polygon points="117.5,424.4 122.4,423.1 122.2,416.8 117.3,417.8" fill="#620afa"/>
<polygon points="117.4,418.4 122.2,417.5 121.9,409.3 117.1,409.9" fill="#6210fa"/>
<polygon points="117.2,410.6 121.9,410 121.7,400 117,400.3" fill="#6217fb"/>
<polygon points="117,401 121.7,400.8 121.6,389.2 116.9,389.1" fill="#621efb"/>
<polygon points="116.9,389.8 121.5,390 121.5,377.1 116.9,376.6" fill="#6226fb"/>
<polygon points="116.9,377.4 121.5,377.9 121.5,363.9 117,363.1" fill="#622ffb"/>
<polygon points="116.9,363.8 121.5,364.7 121.7,349.9 117.2,348.7" fill="#6239fb"/>
<polygon points="117.2,349.5 121.7,350.6 122.1,335.2 117.6,333.8" fill="#6343fb"/>
<polygon points="117.6,334.6 122,336 122.6,320.2 118.3,318.5" fill="#634dfb"/>
<polygon points="118.2,319.3 122.6,320.9 123.4,304.8 119.1,303" fill="#6458fb"/>
<polygon points="119.1,303.8 123.3,305.6 124.3,289.4 120.2,287.4" fill="#6463fb"/>
<polygon points="120.1,288.2 124.2,290.1 125.4,273.9 121.4,271.8" fill="#656ffb"/>
<polygon points="121.3,272.6 125.4,274.6 126.8,258.4 122.9,256.3" fill="#667bfb"/>
<polygon points="122.8,257.1 126.7,259.1 128.3,243 124.5,240.9" fill="#6787fc"/>
<polygon points="124.4,241.6 128.2,243.8 130,227.7 126.3,225.6" fill="#6894fc"/>
<polygon points="126.2,226.4 129.9,228.5 131.9,212.6 128.3,210.5" fill="#69a1fc"/>
<polygon points="128.2,211.3 131.7,213.4 133.9,197.7 130.4,195.6" fill="#6baffc"/>
<polygon points="130.3,196.4 133.7,198.5 136,183 132.7,180.9" fill="#6cbdfd"/>
<polygon points="132.5,181.7 135.9,183.7 138.3,168.4 135.1,166.4" fill="#6ecbfd"/>
<polygon points="134.9,167.1 138.1,169.2 140.7,154 137.5,152" fill="#70d9fe"/>
<polygon points="137.4,152.8 140.5,154.8 143.2,139.8 140.1,137.9" fill="#72e8fe"/>
<polygon points="140,138.6 143,140.6 145.7,125.7 142.8,123.9" fill="#75f7ff"/>
<polygon points="122.1,429.8 127.5,428.1 127.3,425 121.9,426.6" fill="#6b01fa"/>
<polygon points="122,427 127.4,425.5 127.2,421.3 121.8,422.7" fill="#6b05fa"/>
<polygon points="121.9,423.2 127.2,421.9 126.9,415.9 121.7,416.9" fill="#6b0afa"/>
<polygon points="121.8,417.5 127,416.5 126.7,408.6 121.5,409.3" fill="#6b10fa"/>
<polygon points="121.6,410 126.7,409.3 126.5,399.7 121.4,400" fill="#6b17fb"/>
<polygon points="121.4,400.8 126.5,400.5 126.3,389.3 121.2,389.2" fill="#6b1efb"/>
<polygon points="121.3,390 126.3,390.1 126.2,377.6 121.2,377.1" fill="#6b26fb"/>
<polygon points="121.2,377.8 126.2,378.3 126.2,364.7 121.3,363.9" fill="#6c2ffb"/>
<polygon points="121.2,364.7 126.2,365.5 126.3,351 121.5,349.9" fill="#6c39fb"/>
<polygon points="121.4,350.6 126.3,351.8 126.6,336.7 121.8,335.2" fill="#6c43fb"/>
<polygon points="121.8,336 126.6,337.4 127.1,321.8 122.4,320.2" fill="#6d4dfb"/>
<polygon points="122.3,320.9 127,322.6 127.7,306.7 123.1,304.8" fill="#6d58fb"/>
<polygon points="123.1,305.6 127.7,307.5 128.6,291.4 124.1,289.3" fill="#6e63fb"/>
<polygon points="124,290.1 128.5,292.1 129.6,276 125.2,273.8" fill="#6e6ffb"/>
<polygon points="125.1,274.6 129.5,276.7 130.8,260.6 126.6,258.4" fill="#6f7bfb"/>
<polygon points="126.5,259.1 130.8,261.3 132.3,245.2 128.1,243" fill="#7087fc"/>
<polygon points="128,243.7 132.2,246 133.8,230 129.8,227.7" fill="#7194fc"/>
<polygon points="129.7,228.5 133.7,230.8 135.6,214.9 131.7,212.6" fill="#72a1fc"/>
<polygon points="131.5,213.4 135.5,215.7 137.5,200 133.7,197.7" fill="#73affc"/>
<polygon points="133.6,198.4 137.3,200.7 139.5,185.2 135.8,182.9" fill="#75bdfd"/>
<polygon points="135.7,183.7 139.4,185.9 141.7,170.6 138.1,168.4" fill="#77cbfd"/>
<polygon points="138,169.1 141.5,171.3 143.9,156.1 140.5,154" fill="#78d9fe"/>
<polygon points="140.3,154.7 143.8,156.9 146.3,141.9 143,139.8" fill="#7ae8fe"/>
<polygon points="142.8,140.5 146.2,142.6 148.8,127.8 145.6,125.7" fill="#7cf7ff"/>
<polygon points="126.8,428.3 132.6,426.5 132.4,423.6 126.6,425.2" fill="#7501fa"/>
<polygon points="126.7,425.6 132.4,424 132.2,420.1 126.5,421.5" fill="#7505fa"/>
<polygon points="126.6,421.9 132.3,420.6 132,414.9 126.4,415.9" fill="#750afa"/>
<polygon points="126.5,416.5 132.1,415.5 131.8,408 126.3,408.7" fill="#7510fa"/>
<polygon points="126.3,409.3 131.8,408.6 131.6,399.4 126.1,399.8" fill="#7517fb"/>
<polygon points="126.1,400.5 131.6,400.1 131.4,389.4 126,389.3" fill="#751efb"/>
<polygon points="126,390 131.4,390.1 131.2,378 125.9,377.6" fill="#7526fb"/>
<polygon points="125.9,378.3 131.2,378.8 131.2,365.5 125.9,364.7" fill="#762ffb"/>
<polygon points="125.9,365.5 131.2,366.3 131.3,352.2 126.1,351" fill="#7639fb"/>
<polygon points="126,351.8 131.3,352.9 131.5,338.1 126.4,336.7" fill="#7643fb"/>
<polygon points="126.3,337.4 131.5,338.9 131.9,323.5 126.8,321.8" fill="#764dfb"/>
<polygon points="126.8,322.6 131.8,324.3 132.5,308.6 127.5,306.7" fill="#7758fb"/>
<polygon points="127.4,307.4 132.4,309.4 133.2,293.4 128.4,291.4" fill="#7763fb"/>
<polygon points="128.3,292.1 133.1,294.2 134.1,278.2 129.4,275.9" fill="#786ffb"/>
<polygon points="129.3,276.7 134.1,278.9 135.2,262.9 130.6,260.5" fill="#797bfb"/>
<polygon points="130.5,261.3 135.2,263.6 136.5,247.6 132,245.2" fill="#7987fc"/>
<polygon points="131.9,246 136.4,248.3 138,232.4 133.6,230" fill="#7a94fc"/>
<polygon points="133.5,230.7 137.9,233.1 139.6,217.3 135.4,214.9" fill="#7ba1fc"/>
<polygon points="135.3,215.6 139.5,218 141.4,202.3 137.3,199.9" fill="#7daffc"/>
<polygon points="137.1,200.7 141.3,203.1 143.3,187.5 139.3,185.1" fill="#7ebdfd"/>
<polygon points="139.2,185.9 143.2,188.3 145.3,172.9 141.5,170.5" fill="#7fcbfd"/>
<polygon points="141.3,171.3 145.2,173.6 147.5,158.4 143.7,156.1" fill="#81d9fe"/>
<polygon points="143.6,156.8 147.4,159.2 149.8,144.1 146.1,141.8" fill="#83e8fe"/>
<polygon points="146,142.6 149.6,144.8 152.1,129.9 148.6,127.7" fill="#85f7ff"/>
<polygon points="131.9,426.7 137.9,424.9 137.8,422.1 131.7,423.8" fill="#7f01fa"/>
<polygon points="131.8,424.1 137.8,422.5 137.6,418.8 131.6,420.2" fill="#7f05fa"/>
<polygon points="131.7,420.7 137.7,419.3 137.4,413.8 131.5,414.9" fill="#7f0afa"/>
<polygon points="131.6,415.5 137.4,414.4 137.2,407.2 131.3,408" fill="#7f10fa"/>
<polygon points="131.4,408.6 137.2,407.9 137,399.1 131.2,399.4" fill="#7f17fb"/>
<polygon points="131.2,400.1 137,399.7 136.8,389.4 131,389.4" fill="#7f1efb"/>
<polygon points="131,390.1 136.7,390.1 136.6,378.4 130.9,378" fill="#8026fb"/>
<polygon points="130.9,378.7 136.6,379.1 136.5,366.3 130.9,365.5" fill="#802ffb"/>
<polygon points="130.9,366.3 136.5,367.1 136.6,353.3 131,352.2" fill="#8039fb"/>
<polygon points="131,352.9 136.5,354.1 136.7,339.6 131.2,338.1" fill="#8043fb"/>
<polygon points="131.2,338.9 136.7,340.3 137,325.3 131.6,323.5" fill="#804dfb"/>
<polygon points="131.6,324.3 137,326 137.5,310.5 132.2,308.6" fill="#8158fb"/>
<polygon points="132.2,309.3 137.4,311.3 138.1,295.6 133,293.4" fill="#8163fb"/>
<polygon points="132.9,294.2 138.1,296.3 139,280.4 133.9,278.2" fill="#826ffb"/>
<polygon points="133.8,278.9 138.9,281.2 140,265.2 135,262.8" fill="#827bfb"/>
<polygon points="134.9,263.6 139.9,266 141.1,250 136.3,247.6" fill="#8387fc"/>
<polygon points="136.2,248.3 141,250.8 142.5,234.9 137.8,232.3" fill="#8494fc"/>
<polygon points="137.7,233.1 142.4,235.6 144,219.8 139.4,217.3" fill="#85a1fc"/>
<polygon points="139.3,218 143.9,220.5 145.6,204.8 141.2,202.3" fill="#86affc"/>
<polygon points="141,203.1 145.5,205.6 147.4,190 143.1,187.5" fill="#87bdfd"/>
<polygon points="143,188.2 147.3,190.8 149.3,175.3 145.1,172.8" fill="#89cbfd"/>
<polygon points="145,173.6 149.2,176.1 151.3,160.8 147.3,158.4" fill="#8ad9fe"/>
<polygon points="147.1,159.1 151.2,161.6 153.5,146.4 149.6,144" fill="#8ce8fe"/>
<polygon points="149.4,144.8 153.4,147.2 155.7,132.2 151.9,129.9" fill="#8ef7ff"/>
<polygon points="137.2,425.1 143.6,423.3 143.4,420.7 137.1,422.3" fill="#8a01fa"/>
<polygon points="137.1,422.6 143.5,421 143.3,417.5 137,418.9" fill="#8a05fa"/>
<polygon points="137.1,419.4 143.3,418 143.1,412.8 136.8,413.9" fill="#8a0afa"/>
<polygon points="136.9,414.5 143.1,413.3 142.9,406.5 136.7,407.3" fill="#8a10fa"/>
<polygon points="136.8,407.9 142.9,407.1 142.6,398.6 136.5,399.1" fill="#8a17fb"/>
<polygon points="136.6,399.7 142.6,399.3 142.4,389.4 136.4,389.4" fill="#8a1efb"/>
<polygon points="136.4,390.1 142.4,390.1 142.2,378.8 136.2,378.4" fill="#8a26fb"/>
<polygon points="136.3,379.1 142.2,379.5 142.1,367.1 136.2,366.3" fill="#8a2ffb"/>
<polygon points="136.2,367.1 142.1,367.8 142.1,354.4 136.2,353.3" fill="#8a39fb"/>
<polygon points="136.2,354 142.1,355.1 142.2,341 136.4,339.5" fill="#8b43fb"/>
<polygon points="136.4,340.3 142.2,341.7 142.4,327 136.7,325.2" fill="#8b4dfb"/>
<polygon points="136.7,326 142.4,327.7 142.8,312.5 137.2,310.5" fill="#8b58fb"/>
<polygon points="137.2,311.3 142.8,313.2 143.4,297.7 137.9,295.6" fill="#8c63fb"/>
<polygon points="137.8,296.3 143.3,298.5 144.1,282.7 138.7,280.4" fill="#8c6ffb"/>
<polygon points="138.6,281.2 144,283.5 145,267.7 139.7,265.2" fill="#8d7bfb"/>
<polygon points="139.6,266 144.9,268.4 146,252.5 140.9,250" fill="#8d87fc"/>
<polygon points="140.8,250.7 145.9,253.3 147.2,237.4 142.2,234.8" fill="#8e94fc"/>
<polygon points="142.1,235.6 147.1,238.2 148.6,222.4 143.7,219.8" fill="#8fa1fc"/>
<polygon points="143.6,220.5 148.5,223.1 150.1,207.4 145.4,204.8" fill="#90affc"/>
<polygon points="145.3,205.5 150,208.2 151.8,192.6 147.2,190" fill="#91bdfd"/>
<polygon points="147,190.7 151.7,193.4 153.6,177.9 149.1,175.3" fill="#92cbfd"/>
<polygon points="149,176 153.4,178.7 155.5,163.3 151.1,160.8" fill="#94d9fe"/>
<polygon points="151,161.5 155.4,164.1 157.5,148.9 153.3,146.4" fill="#95e8fe"/>
<polygon points="153.1,147.1 157.4,149.7 159.6,134.7 155.5,132.2" fill="#97f7ff"/>
<polygon points="142.9,423.5 149.5,421.7 149.3,419.2 142.7,420.9" fill="#9501fa"/>
<polygon points="142.8,421.2 149.4,419.5 149.2,416.2 142.6,417.7" fill="#9505fa"/>
<polygon points="142.7,418 149.2,416.6 149,411.7 142.5,412.9" fill="#950afa"/>
<polygon points="142.6,413.4 149,412.2 148.8,405.7 142.3,406.5" fill="#9510fa"/>
<polygon points="142.4,407.1 148.8,406.3 148.6,398.2 142.2,398.7" fill="#9517fb"/>
<polygon points="142.2,399.3 148.6,398.8 148.3,389.3 142,389.4" fill="#951efb"/>
<polygon points="142,390.1 148.3,390 148.1,379.1 141.8,378.8" fill="#9526fb"/>
<polygon points="141.9,379.5 148.1,379.8 148,367.7 141.8,367.1" fill="#952ffb"/>
<polygon points="141.8,367.8 147.9,368.5 147.9,355.4 141.8,354.4" fill="#9539fb"/>
<polygon points="141.8,355.1 147.9,356.2 147.9,342.3 141.9,341" fill="#9543fb"/>
<polygon points="141.9,341.7 147.9,343.1 148.1,328.6 142.1,326.9" fill="#964dfb"/>
<polygon points="142.1,327.7 148.1,329.4 148.4,314.4 142.5,312.5" fill="#9658fb"/>
<polygon points="142.5,313.2 148.4,315.2 148.9,299.9 143.1,297.7" fill="#9663fb"/>
<polygon points="143,298.4 148.8,300.6 149.5,285.1 143.8,282.7" fill="#976ffb"/>
<polygon points="143.7,283.5 149.4,285.8 150.3,270.1 144.7,267.6" fill="#977bfb"/>
<polygon points="144.6,268.4 150.2,270.9 151.2,255.1 145.8,252.5" fill="#9887fc"/>
<polygon points="145.7,253.2 151.1,255.8 152.3,240.1 147,237.4" fill="#9994fc"/>
<polygon points="146.9,238.1 152.2,240.8 153.5,225.1 148.4,222.4" fill="#99a1fc"/>
<polygon points="148.2,223.1 153.4,225.8 154.9,210.1 149.9,207.4" fill="#9aaffc"/>
<polygon points="149.8,208.1 154.8,210.9 156.5,195.3 151.5,192.6" fill="#9bbdfd"/>
<polygon points="151.4,193.3 156.3,196 158.1,180.6 153.3,177.9" fill="#9ccbfd"/>
<polygon points="153.2,178.6 158,181.3 159.9,166 155.2,163.3" fill="#9ed9fe"/>
<polygon points="155.1,164 159.8,166.7 161.8,151.5 157.3,148.9" fill="#9fe8fe"/>
<polygon points="157.1,149.6 161.7,152.3 163.8,137.2 159.4,134.6" fill="#a1f7ff"/>
<polygon points="148.8,421.9 155.6,420.1 155.5,417.8 148.6,419.4" fill="#a001fa"/>
<polygon points="148.7,419.7 155.5,418.1 155.4,414.9 148.5,416.4" fill="#a005fa"/>
<polygon points="148.6,416.7 155.4,415.3 155.2,410.6 148.4,411.8" fill="#a00afa"/>
<polygon points="148.5,412.3 155.2,411.1 155,404.9 148.2,405.8" fill="#a010fa"/>
<polygon points="148.3,406.3 155,405.5 154.7,397.7 148,398.2" fill="#a017fb"/>
<polygon points="148.1,398.9 154.7,398.3 154.5,389.1 147.9,389.3" fill="#a01efb"/>
<polygon points="147.9,390 154.5,389.8 154.2,379.3 147.7,379.1" fill="#a026fb"/>
<polygon points="147.7,379.8 154.2,380 154.1,368.4 147.6,367.7" fill="#a02ffb"/>
<polygon points="147.6,368.4 154,369.1 154,356.4 147.6,355.4" fill="#a039fb"/>
<polygon points="147.5,356.2 153.9,357.1 153.9,343.7 147.6,342.3" fill="#a043fb"/>
<polygon points="147.6,343.1 153.9,344.4 154,330.2 147.8,328.6" fill="#a14dfb"/>
<polygon points="147.8,329.3 154,331 154.3,316.3 148.1,314.4" fill="#a158fb"/>
<polygon points="148.1,315.1 154.2,317 154.6,302 148.6,299.8" fill="#a163fb"/>
<polygon points="148.5,300.6 154.6,302.7 155.2,287.4 149.2,285" fill="#a26ffb"/>
<polygon points="149.1,285.8 155.1,288.1 155.8,272.6 150,270.1" fill="#a27bfb"/>
<polygon points="149.9,270.8 155.7,273.3 156.6,257.7 150.9,255.1" fill="#a387fc"/>
<polygon points="150.8,255.8 156.6,258.4 157.6,242.7 152,240" fill="#a394fc"/>
<polygon points="151.9,240.8 157.5,243.5 158.7,227.8 153.3,225" fill="#a4a1fc"/>
<polygon points="153.2,225.8 158.6,228.5 160,212.9 154.7,210.1" fill="#a5affc"/>
<polygon points="154.6,210.8 159.9,213.6 161.4,198.1 156.2,195.3" fill="#a6bdfd"/>
<polygon points="156.1,196 161.3,198.8 162.9,183.3 157.9,180.5" fill="#a7cbfd"/>
<polygon points="157.7,181.3 162.8,184.1 164.6,168.7 159.6,165.9" fill="#a8d9fe"/>
<polygon points="159.5,166.7 164.5,169.5 166.4,154.2 161.5,151.5" fill="#a9e8fe"/>
<polygon points="161.4,152.2 166.2,155 168.2,139.9 163.6,137.2" fill="#abf7ff"/>
<polygon points="154.9,420.3 162,418.5 161.9,416.3 154.8,417.9" fill="#ab01fa"/>
<polygon points="154.8,418.2 161.9,416.6 161.7,413.6 154.7,415" fill="#ab05fa"/>
<polygon points="154.7,415.4 161.8,414 161.6,409.5 154.5,410.7" fill="#ab0afa"/>
<polygon points="154.6,411.2 161.6,410 161.3,404 154.4,404.9" fill="#ab10fa"/>
<polygon points="154.4,405.5 161.3,404.6 161.1,397.2 154.2,397.7" fill="#ab17fb"/>
<polygon points="154.2,398.3 161.1,397.8 160.8,389 154,389.2" fill="#ab1efb"/>
<polygon points="154,389.8 160.8,389.6 160.6,379.5 153.8,379.3" fill="#ab26fb"/>
<polygon points="153.8,380 160.6,380.2 160.4,368.9 153.7,368.4" fill="#ab2ffb"/>
<polygon points="153.7,369.1 160.4,369.6 160.2,357.3 153.6,356.4" fill="#ab39fb"/>
<polygon points="153.6,357.1 160.2,358 160.2,344.9 153.6,343.7" fill="#ac43fb"/>
<polygon points="153.6,344.4 160.1,345.6 160.2,331.8 153.7,330.2" fill="#ac4dfb"/>
<polygon points="153.7,331 160.2,332.5 160.4,318.2 154,316.3" fill="#ac58fb"/>
<polygon points="153.9,317 160.3,318.9 160.6,304.1 154.3,302" fill="#ac63fb"/>
<polygon points="154.3,302.7 160.6,304.8 161.1,289.7 154.9,287.3" fill="#ad6ffb"/>
<polygon points="154.8,288.1 161,290.4 161.6,275 155.5,272.5" fill="#ad7bfb"/>
<polygon points="155.5,273.3 161.6,275.8 162.3,260.3 156.3,257.6" fill="#ae87fc"/>
<polygon points="156.3,258.4 162.3,261 163.2,245.4 157.3,242.7" fill="#ae94fc"/>
<polygon points="157.2,243.4 163.1,246.2 164.2,230.5 158.5,227.7" fill="#afa1fc"/>
<polygon points="158.4,228.5 164.1,231.3 165.3,215.7 159.7,212.8" fill="#b0affc"/>
<polygon points="159.6,213.6 165.2,216.4 166.6,200.9 161.1,198" fill="#b1bdfd"/>
<polygon points="161,198.8 166.5,201.6 168,186.2 162.7,183.3" fill="#b2cbfd"/>
<polygon points="162.5,184 167.9,186.9 169.5,171.5 164.3,168.7" fill="#b3d9fe"/>
<polygon points="164.2,169.4 169.4,172.3 171.2,157 166.1,154.2" fill="#b4e8fe"/>
<polygon points="166,154.9 171,157.8 172.9,142.6 168,139.8" fill="#b5f7ff"/>
<polygon points="161.2,418.7 168.6,417 168.4,414.9 161.1,416.5" fill="#b601fa"/>
<polygon points="161.2,416.7 168.5,415.1 168.3,412.3 161,413.7" fill="#b605fa"/>
<polygon points="161.1,414.1 168.3,412.6 168.1,408.4 160.9,409.6" fill="#b60afa"/>
<polygon points="161,410.1 168.2,408.9 167.9,403.2 160.7,404.1" fill="#b610fa"/>
<polygon points="160.8,404.6 167.9,403.7 167.7,396.6 160.5,397.2" fill="#b617fb"/>
<polygon points="160.6,397.8 167.7,397.2 167.4,388.7 160.3,389" fill="#b61efb"/>
<polygon points="160.4,389.6 167.4,389.4 167.1,379.6 160.1,379.5" fill="#b726fb"/>
<polygon points="160.2,380.2 167.1,380.3 166.9,369.4 160,368.9" fill="#b72ffb"/>
<polygon points="160,369.6 166.9,370.1 166.7,358.2 159.9,357.3" fill="#b739fb"/>
<polygon points="159.8,358 166.7,358.9 166.6,346.1 159.8,344.9" fill="#b743fb"/>
<polygon points="159.8,345.6 166.6,346.8 166.6,333.3 159.9,331.8" fill="#b74dfb"/>
<polygon points="159.8,332.5 166.6,334 166.7,319.9 160,318.1" fill="#b758fb"/>
<polygon points="160,318.9 166.6,320.7 166.9,306.1 160.3,304" fill="#b863fb"/>
<polygon points="160.3,304.8 166.8,306.8 167.2,291.9 160.7,289.6" fill="#b86ffb"/>
<polygon points="160.7,290.4 167.1,292.6 167.7,277.5 161.3,275" fill="#b87bfb"/>
<polygon points="161.2,275.7 167.6,278.2 168.3,262.8 162,260.2" fill="#b987fc"/>
<polygon points="162,261 168.2,263.6 169,248.1 162.9,245.4" fill="#b994fc"/>
<polygon points="162.8,246.1 168.9,248.8 169.9,233.3 163.9,230.5" fill="#baa1fc"/>
<polygon points="163.8,231.2 169.8,234.1 170.9,218.5 165,215.7" fill="#bbaffc"/>
<polygon points="164.9,216.4 170.8,219.3 172,203.8 166.3,200.9" fill="#bcbdfd"/>
<polygon points="166.2,201.6 171.9,204.5 173.3,189.1 167.7,186.1" fill="#bccbfd"/>
<polygon points="167.6,186.9 173.2,189.8 174.7,174.4 169.2,171.5" fill="#bdd9fe"/>
<polygon points="169.1,172.2 174.6,175.2 176.2,159.9 170.9,157" fill="#bfe8fe"/>
<polygon points="170.8,157.7 176.1,160.6 177.8,145.5 172.6,142.6" fill="#c0f7ff"/>
<polygon points="167.8,417.1 175.3,415.5 175.2,413.4 167.7,415" fill="#c201fa"/>
<polygon points="167.7,415.3 175.2,413.7 175.1,411 167.6,412.4" fill="#c205fa"/>
<polygon points="167.7,412.7 175.1,411.3 174.9,407.3 167.4,408.5" fill="#c20afa"/>
<polygon points="167.5,408.9 174.9,407.7 174.7,402.3 167.3,403.2" fill="#c210fa"/>
<polygon points="167.4,403.7 174.7,402.8 174.4,396 167.1,396.6" fill="#c217fb"/>
<polygon points="167.1,397.2 174.4,396.6 174.1,388.4 166.9,388.7" fill="#c21efb"/>
<polygon points="166.9,389.4 174.1,389.1 173.9,379.7 166.7,379.6" fill="#c226fb"/>
<polygon points="166.7,380.3 173.9,380.3 173.6,369.8 166.5,369.4" fill="#c22ffb"/>
<polygon points="166.5,370.1 173.6,370.5 173.4,358.9 166.3,358.2" fill="#c239fb"/>
<polygon points="166.3,358.9 173.4,359.6 173.3,347.2 166.2,346.1" fill="#c243fb"/>
<polygon points="166.2,346.8 173.2,347.9 173.2,334.7 166.2,333.3" fill="#c34dfb"/>
<polygon points="166.2,334 173.1,335.5 173.2,321.7 166.3,319.9" fill="#c358fb"/>
<polygon points="166.3,320.6 173.2,322.4 173.3,308.1 166.5,306.1" fill="#c363fb"/>
<polygon points="166.5,306.8 173.3,308.8 173.6,294.1 166.9,291.9" fill="#c36ffb"/>
<polygon points="166.8,292.6 173.5,294.8 173.9,279.9 167.3,277.4" fill="#c47bfb"/>
<polygon points="167.3,278.2 173.9,280.6 174.4,265.4 167.9,262.8" fill="#c487fc"/>
<polygon points="167.9,263.5 174.3,266.1 175,250.8 168.7,248.1" fill="#c594fc"/>
<polygon points="168.6,248.8 175,251.5 175.8,236.1 169.6,233.3" fill="#c5a1fc"/>
<polygon points="169.5,234 175.7,236.8 176.7,221.4 170.6,218.5" fill="#c6affc"/>
<polygon points="170.5,219.2 176.6,222.1 177.7,206.7 171.7,203.7" fill="#c7bdfd"/>
<polygon points="171.6,204.5 177.6,207.4 178.9,192 173,189" fill="#c8cbfd"/>
<polygon points="172.9,189.7 178.8,192.7 180.1,177.4 174.4,174.4" fill="#c9d9fe"/>
<polygon points="174.3,175.1 180,178.1 181.5,162.8 175.9,159.8" fill="#cae8fe"/>
<polygon points="175.8,160.6 181.4,163.5 183,148.4 177.6,145.4" fill="#cbf7ff"/>
<polygon points="174.5,415.6 182.2,413.9 182.1,412 174.4,413.6" fill="#ce01fa"/>
<polygon points="174.5,413.8 182.1,412.3 182,409.7 174.3,411.1" fill="#ce05fa"/>
<polygon points="174.4,411.4 182,410 181.8,406.1 174.2,407.4" fill="#ce0afa"/>
<polygon points="174.3,407.8 181.8,406.6 181.6,401.4 174,402.4" fill="#ce10fa"/>
<polygon points="174.1,402.8 181.6,401.9 181.3,395.4 173.8,396" fill="#ce17fb"/>
<polygon points="173.9,396.6 181.4,395.9 181.1,388.1 173.6,388.5" fill="#ce1efb"/>
<polygon points="173.7,389.1 181.1,388.7 180.8,379.7 173.4,379.7" fill="#ce26fb"/>
<polygon points="173.4,380.3 180.8,380.3 180.5,370.1 173.2,369.8" fill="#ce2ffb"/>
<polygon points="173.2,370.5 180.5,370.8 180.3,359.6 173,358.9" fill="#ce39fb"/>
<polygon points="173,359.6 180.2,360.3 180.1,348.2 172.9,347.2" fill="#ce43fb"/>
<polygon points="172.8,347.9 180,348.9 179.9,336.1 172.8,334.7" fill="#ce4dfb"/>
<polygon points="172.8,335.4 179.9,336.8 179.9,323.3 172.8,321.6" fill="#cf58fb"/>
<polygon points="172.8,322.4 179.9,324 180,310 173,308.1" fill="#cf63fb"/>
<polygon points="172.9,308.8 179.9,310.7 180.1,296.3 173.2,294.1" fill="#cf6ffb"/>
<polygon points="173.2,294.8 180.1,297 180.4,282.2 173.6,279.8" fill="#cf7bfb"/>
<polygon points="173.5,280.6 180.3,282.9 180.8,267.9 174.1,265.4" fill="#d087fc"/>
<polygon points="174,266.1 180.7,268.6 181.3,253.4 174.7,250.8" fill="#d094fc"/>
<polygon points="174.6,251.5 181.2,254.2 182,238.9 175.5,236.1" fill="#d1a1fc"/>
<polygon points="175.4,236.8 181.9,239.6 182.7,224.2 176.4,221.3" fill="#d2affc"/>
<polygon points="176.3,222.1 182.6,225 183.6,209.6 177.4,206.6" fill="#d2bdfd"/>
<polygon points="177.3,207.3 183.5,210.3 184.7,194.9 178.6,191.9" fill="#d3cbfd"/>
<polygon points="178.5,192.7 184.6,195.7 185.8,180.3 179.8,177.3" fill="#d4d9fe"/>
<polygon points="179.7,178 185.7,181 187.1,165.8 181.2,162.8" fill="#d5e8fe"/>
<polygon points="181.1,163.5 186.9,166.5 188.4,151.3 182.7,148.3" fill="#d6f7ff"/>
<polygon points="181.5,414.1 189.3,412.4 189.2,410.6 181.3,412.2" fill="#da01fa"/>
<polygon points="181.4,412.4 189.2,410.8 189.1,408.4 181.2,409.8" fill="#da05fa"/>
<polygon points="181.3,410.1 189.1,408.7 188.9,405 181.1,406.3" fill="#da0afa"/>
<polygon points="181.2,406.6 188.9,405.4 188.7,400.5 180.9,401.5" fill="#da10fa"/>
<polygon points="181,401.9 188.7,400.9 188.4,394.7 180.7,395.4" fill="#da17fb"/>
<polygon points="180.8,395.9 188.4,395.2 188.1,387.7 180.5,388.1" fill="#da1efb"/>
<polygon points="180.6,388.7 188.2,388.3 187.9,379.6 180.3,379.7" fill="#da26fb"/>
<polygon points="180.3,380.3 187.8,380.2 187.6,370.4 180,370.2" fill="#da2ffb"/>
<polygon points="180.1,370.8 187.6,371.1 187.3,360.2 179.8,359.6" fill="#da39fb"/>
<polygon points="179.8,360.3 187.3,360.9 187.1,349.2 179.7,348.2" fill="#da43fb"/>
<polygon points="179.7,348.9 187,349.9 186.9,337.4 179.6,336.1" fill="#da4dfb"/>
<polygon points="179.5,336.8 186.9,338 186.8,324.9 179.5,323.3" fill="#da58fb"/>
<polygon points="179.5,324 186.7,325.6 186.8,311.8 179.6,310" fill="#db63fb"/>
<polygon points="179.6,310.7 186.7,312.5 186.9,298.3 179.8,296.2" fill="#db6ffb"/>
<polygon points="179.7,297 186.8,299.1 187,284.5 180,282.2" fill="#db7bfb"/>
<polygon points="180,282.9 187,285.2 187.3,270.4 180.4,267.9" fill="#dc87fc"/>
<polygon points="180.4,268.6 187.3,271.1 187.8,256.1 181,253.4" fill="#dc94fc"/>
<polygon points="180.9,254.1 187.7,256.8 188.3,241.6 181.6,238.8" fill="#dda1fc"/>
<polygon points="181.5,239.6 188.2,242.3 189,227.1 182.4,224.2" fill="#ddaffc"/>
<polygon points="182.3,224.9 188.9,227.8 189.7,212.5 183.3,209.5" fill="#debdfd"/>
<polygon points="183.2,210.3 189.7,213.2 190.7,197.9 184.3,194.9" fill="#dfcbfd"/>
<polygon points="184.2,195.6 190.6,198.6 191.7,183.3 185.5,180.3" fill="#dfd9fe"/>
<polygon points="185.4,181 191.6,184 192.8,168.8 186.7,165.7" fill="#e0e8fe"/>
<polygon points="186.6,166.5 192.7,169.5 194,154.3 188.1,151.3" fill="#e1f7ff"/>
<polygon points="188.5,412.6 196.5,411 196.4,409.2 188.4,410.8" fill="#e601fa"/>
<polygon points="188.5,411 196.5,409.4 196.3,407.1 188.3,408.5" fill="#e605fa"/>
<polygon points="188.4,408.8 196.3,407.4 196.1,403.9 188.2,405.1" fill="#e60afa"/>
<polygon points="188.3,405.5 196.2,404.3 195.9,399.5 188,400.5" fill="#e610fa"/>
<polygon points="188.1,401 195.9,400 195.7,394 187.8,394.7" fill="#e617fb"/>
<polygon points="187.9,395.3 195.7,394.5 195.4,387.3 187.6,387.8" fill="#e61efb"/>
<polygon points="187.6,388.3 195.4,387.9 195.1,379.5 187.3,379.6" fill="#e626fb"/>
<polygon points="187.4,380.2 195.1,380.1 194.8,370.6 187.1,370.4" fill="#e62ffb"/>
<polygon points="187.1,371.1 194.8,371.3 194.5,360.8 186.8,360.2" fill="#e639fb"/>
<polygon points="186.8,360.9 194.5,361.4 194.2,350 186.6,349.2" fill="#e643fb"/>
<polygon points="186.6,349.9 194.2,350.7 194,338.5 186.5,337.3" fill="#e64dfb"/>
<polygon points="186.5,338 194,339.2 193.8,326.3 186.4,324.9" fill="#e758fb"/>
<polygon points="186.4,325.5 193.8,327 193.8,313.6 186.4,311.8" fill="#e763fb"/>
<polygon points="186.4,312.5 193.7,314.3 193.8,300.3 186.5,298.3" fill="#e76ffb"/>
<polygon points="186.4,299 193.7,301 193.9,286.7 186.7,284.5" fill="#e77bfb"/>
<polygon points="186.6,285.2 193.8,287.4 194.1,272.8 187,270.4" fill="#e887fc"/>
<polygon points="186.9,271.1 194,273.5 194.4,258.6 187.4,256" fill="#e894fc"/>
<polygon points="187.4,256.7 194.3,259.3 194.8,244.3 188,241.6" fill="#e8a1fc"/>
<polygon points="187.9,242.3 194.8,245 195.4,229.9 188.6,227" fill="#e9affc"/>
<polygon points="188.6,227.7 195.3,230.6 196.1,215.4 189.4,212.4" fill="#eabdfd"/>
<polygon points="189.3,213.2 196,216.1 196.9,200.8 190.3,197.8" fill="#eacbfd"/>
<polygon points="190.2,198.6 196.8,201.5 197.8,186.3 191.4,183.3" fill="#ebd9fe"/>
<polygon points="191.3,184 197.7,187 198.8,171.8 192.5,168.7" fill="#ece8fe"/>
<polygon points="192.4,169.4 198.7,172.5 199.9,157.3 193.7,154.3" fill="#edf7ff"/>
<polygon points="195.8,411.1 203.9,409.5 203.8,407.9 195.7,409.4" fill="#f201fa"/>
<polygon points="195.7,409.6 203.8,408 203.7,405.8 195.6,407.2" fill="#f205fa"/>
<polygon points="195.6,407.5 203.7,406.1 203.5,402.7 195.4,404" fill="#f20afa"/>
<polygon points="195.5,404.3 203.5,403.1 203.3,398.6 195.2,399.6" fill="#f210fa"/>
<polygon points="195.3,400 203.3,399 203,393.3 195,394" fill="#f217fb"/>
<polygon points="195.1,394.5 203.1,393.8 202.8,386.8 194.8,387.3" fill="#f21efb"/>
<polygon points="194.8,387.9 202.8,387.4 202.4,379.3 194.5,379.5" fill="#f226fb"/>
<polygon points="194.6,380.1 202.4,379.9 202.1,370.8 194.3,370.6" fill="#f22ffb"/>
<polygon points="194.3,371.3 202.1,371.4 201.8,361.2 194,360.8" fill="#f239fb"/>
<polygon points="194,361.4 201.8,361.9 201.5,350.8 193.8,350" fill="#f243fb"/>
<polygon points="193.8,350.7 201.5,351.5 201.2,339.6 193.6,338.5" fill="#f34dfb"/>
<polygon points="193.6,339.2 201.2,340.3 201,327.7 193.4,326.3" fill="#f358fb"/>
<polygon points="193.4,327 201,328.4 200.9,315.2 193.4,313.6" fill="#f363fb"/>
<polygon points="193.3,314.3 200.9,315.9 200.9,302.2 193.4,300.3" fill="#f36ffb"/>
<polygon points="193.4,301 200.8,302.9 200.9,288.8 193.5,286.7" fill="#f37bfb"/>
<polygon points="193.5,287.4 200.8,289.6 201,275.1 193.7,272.8" fill="#f487fc"/>
<polygon points="193.7,273.5 200.9,275.8 201.2,261.1 194.1,258.6" fill="#f494fc"/>
<polygon points="194,259.3 201.2,261.8 201.6,247 194.5,244.3" fill="#f5a1fc"/>
<polygon points="194.4,245 201.5,247.7 202,232.6 195.1,229.8" fill="#f5affc"/>
<polygon points="195,230.5 201.9,233.3 202.6,218.2 195.7,215.3" fill="#f6bdfd"/>
<polygon points="195.7,216 202.5,218.9 203.3,203.7 196.5,200.8" fill="#f6cbfd"/>
<polygon points="196.4,201.5 203.2,204.5 204,189.3 197.4,186.2" fill="#f7d9fe"/>
<polygon points="197.3,187 203.9,190 204.9,174.8 198.4,171.7" fill="#f8e8fe"/>
<polygon points="198.3,172.5 204.8,175.5 205.9,160.3 199.6,157.3" fill="#f9f7ff"/>
<polygon points="395,265.6 394.3,264.2 389.8,267 390.5,268.5" fill="#f60102"/>
<polygon points="391.2,268 390.5,266.6 385.2,270 385.8,271.5" fill="#f60108"/>
<polygon points="386.5,271 385.9,269.6 379.1,274 379.6,275.5" fill="#f60110"/>
<polygon points="380.3,275 379.8,273.6 371.8,278.8 372.2,280.3" fill="#f60118"/>
<polygon points="372.9,279.8 372.4,278.4 363.7,284.1 364.1,285.6" fill="#f60120"/>
<polygon points="364.7,285.2 364.3,283.7 355.1,289.8 355.5,291.4" fill="#f60129"/>
<polygon points="356.1,290.9 355.8,289.4 346.3,295.8 346.6,297.4" fill="#f60133"/>
<polygon points="347.2,296.9 346.9,295.4 337.3,302 337.5,303.5" fill="#f6013c"/>
<polygon points="338.2,303.1 337.9,301.5 328.2,308.2 328.5,309.8" fill="#f60146"/>
<polygon points="329.1,309.4 328.9,307.8 319.2,314.6 319.4,316.2" fill="#f60151"/>
<polygon points="320.1,315.7 319.8,314.1 310.2,321 310.4,322.6" fill="#f6015b"/>
<polygon points="311.1,322.2 310.9,320.6 301.3,327.5 301.5,329.1" fill="#f60166"/>
<polygon points="302.2,328.7 302,327 292.5,334 292.7,335.7" fill="#f60171"/>
<polygon points="293.3,335.2 293.1,333.6 283.8,340.6 284,342.2" fill="#f6017c"/>
<polygon points="284.6,341.7 284.4,340.1 275.2,347.2 275.4,348.8" fill="#f60187"/>
<polygon points="276,348.3 275.9,346.7 266.8,353.9 266.9,355.5" fill="#f70193"/>
<polygon points="267.6,355 267.4,353.4 258.4,360.5 258.6,362.1" fill="#f7019e"/>
<polygon points="259.2,361.6 259,360 250.2,367.2 250.3,368.8" fill="#f701aa"/>
<polygon points="250.9,368.3 250.8,366.7 242.1,374 242.2,375.6" fill="#f701b6"/>
<polygon points="242.8,375.1 242.7,373.5 234,380.8 234.2,382.4" fill="#f701c2"/>
<polygon points="234.8,381.8 234.7,380.2 226.2,387.6 226.3,389.2" fill="#f701cf"/>
<polygon points="226.9,388.6 226.8,387.1 218.4,394.4 218.5,396" fill="#f801db"/>
<polygon points="219.1,395.5 219,393.9 210.7,401.3 210.8,402.9" fill="#f801e7"/>
<polygon points="211.4,402.4 211.3,400.8 203.1,408.2 203.2,409.8" fill="#f801f4"/>
<polygon points="394.4,264.4 393.4,262.5 389.1,265.2 390,267.2" fill="#f60502"/>
<polygon points="390.6,266.8 389.7,264.9 384.6,268.2 385.4,270.2" fill="#f60508"/>
<polygon points="386,269.7 385.2,267.8 378.5,272.2 379.2,274.1" fill="#f60510"/>
<polygon points="379.8,273.7 379.1,271.8 371.2,276.9 371.8,278.9" fill="#f60518"/>
<polygon points="372.5,278.5 371.9,276.5 363.2,282.2 363.8,284.2" fill="#f60520"/>
<polygon points="364.4,283.8 363.9,281.8 354.7,287.9 355.2,289.9" fill="#f60529"/>
<polygon points="355.8,289.5 355.4,287.4 345.9,293.8 346.3,295.9" fill="#f60533"/>
<polygon points="347,295.5 346.6,293.4 337,299.9 337.3,302.1" fill="#f6053c"/>
<polygon points="338,301.6 337.6,299.5 327.9,306.2 328.3,308.3" fill="#f60546"/>
<polygon points="328.9,307.9 328.6,305.7 318.9,312.5 319.3,314.7" fill="#f60551"/>
<polygon points="319.9,314.2 319.6,312.1 310,319 310.3,321.1" fill="#f6055b"/>
<polygon points="310.9,320.7 310.6,318.5 301.1,325.4 301.4,327.6" fill="#f60566"/>
<polygon points="302,327.1 301.7,325 292.3,332 292.6,334.1" fill="#f60571"/>
<polygon points="293.2,333.7 292.9,331.5 283.6,338.5 283.9,340.7" fill="#f6057c"/>
<polygon points="284.5,340.2 284.3,338.1 275,345.1 275.3,347.3" fill="#f60587"/>
<polygon points="275.9,346.8 275.7,344.7 266.6,351.8 266.8,353.9" fill="#f70593"/>
<polygon points="267.4,353.5 267.2,351.3 258.2,358.4 258.5,360.6" fill="#f7059e"/>
<polygon points="259.1,360.1 258.9,358 250,365.2 250.2,367.3" fill="#f705aa"/>
<polygon points="250.9,366.8 250.6,364.7 241.9,371.9 242.1,374.1" fill="#f705b6"/>
<polygon points="242.7,373.6 242.5,371.4 233.9,378.7 234.1,380.8" fill="#f705c2"/>
<polygon points="234.7,380.3 234.5,378.2 226,385.5 226.2,387.7" fill="#f705cf"/>
<polygon points="226.8,387.1 226.6,385 218.2,392.4 218.4,394.5" fill="#f805db"/>
<polygon points="219,394 218.8,391.9 210.6,399.3 210.8,401.4" fill="#f805e7"/>
<polygon points="211.4,400.9 211.2,398.7 203,406.2 203.2,408.3" fill="#f805f4"/>
<polygon points="393.6,262.8 392.2,259.9 388,262.6 389.3,265.5" fill="#f60a03"/>
<polygon points="389.9,265.2 388.6,262.2 383.6,265.4 384.7,268.4" fill="#f60a09"/>
<polygon points="385.3,268 384.2,265.1 377.6,269.4 378.6,272.4" fill="#f60a10"/>
<polygon points="379.3,271.9 378.2,269 370.5,274 371.4,277.1" fill="#f60a18"/>
<polygon points="372,276.7 371.1,273.6 362.5,279.3 363.3,282.3" fill="#f60a20"/>
<polygon points="364,281.9 363.2,278.9 354.1,284.9 354.8,288" fill="#f60a29"/>
<polygon points="355.5,287.6 354.8,284.5 345.4,290.8 346,293.9" fill="#f60a33"/>
<polygon points="346.7,293.5 346,290.4 336.5,296.9 337,300.1" fill="#f60a3c"/>
<polygon points="337.7,299.6 337.1,296.5 327.5,303.1 328,306.3" fill="#f60a46"/>
<polygon points="328.7,305.9 328.2,302.7 318.6,309.4 319,312.7" fill="#f60a51"/>
<polygon points="319.7,312.2 319.2,309 309.6,315.8 310.1,319.1" fill="#f60a5b"/>
<polygon points="310.7,318.6 310.3,315.4 300.8,322.3 301.2,325.6" fill="#f60a66"/>
<polygon points="301.8,325.1 301.4,321.8 292,328.8 292.4,332.1" fill="#f60a71"/>
<polygon points="293,331.6 292.6,328.4 283.3,335.4 283.7,338.6" fill="#f60a7c"/>
<polygon points="284.4,338.2 284,334.9 274.8,342 275.1,345.2" fill="#f60a87"/>
<polygon points="275.8,344.8 275.4,341.5 266.3,348.6 266.7,351.9" fill="#f70a93"/>
<polygon points="267.3,351.4 267,348.1 258,355.3 258.3,358.6" fill="#f70a9f"/>
<polygon points="259,358.1 258.6,354.8 249.8,362 250.1,365.3" fill="#f70aaa"/>
<polygon points="250.7,364.8 250.4,361.5 241.7,368.8 242,372" fill="#f70ab6"/>
<polygon points="242.6,371.5 242.3,368.3 233.7,375.5 234,378.8" fill="#f70ac2"/>
<polygon points="234.6,378.3 234.3,375.1 225.8,382.4 226.1,385.6" fill="#f70acf"/>
<polygon points="226.7,385.1 226.4,381.9 218.1,389.3 218.3,392.5" fill="#f80adb"/>
<polygon points="218.9,392 218.7,388.8 210.4,396.2 210.7,399.4" fill="#f80ae7"/>
<polygon points="211.3,398.9 211,395.7 202.8,403.1 203.1,406.3" fill="#f80af4"/>
<polygon points="392.4,260.4 390.5,256.4 386.5,259 388.3,263" fill="#f61003"/>
<polygon points="388.8,262.6 387.1,258.7 382.2,261.8 383.8,265.8" fill="#f61009"/>
<polygon points="384.4,265.4 382.8,261.5 376.4,265.6 377.8,269.6" fill="#f61010"/>
<polygon points="378.4,269.3 377,265.2 369.4,270.2 370.6,274.3" fill="#f61018"/>
<polygon points="371.2,273.9 370.1,269.8 361.6,275.3 362.7,279.5" fill="#f61021"/>
<polygon points="363.3,279.1 362.3,274.9 353.3,280.9 354.2,285.1" fill="#f6102a"/>
<polygon points="354.9,284.7 354,280.5 344.7,286.7 345.5,291" fill="#f61033"/>
<polygon points="346.2,290.6 345.3,286.3 335.9,292.7 336.6,297.1" fill="#f6103d"/>
<polygon points="337.3,296.7 336.5,292.3 327,298.9 327.6,303.3" fill="#f61047"/>
<polygon points="328.3,302.9 327.6,298.5 318,305.2 318.7,309.6" fill="#f61051"/>
<polygon points="319.3,309.2 318.7,304.8 309.2,311.6 309.8,316" fill="#f6105b"/>
<polygon points="310.4,315.6 309.8,311.2 300.4,318 300.9,322.5" fill="#f61066"/>
<polygon points="301.5,322 301,317.6 291.6,324.5 292.1,329" fill="#f61071"/>
<polygon points="292.8,328.6 292.3,324.1 283,331.1 283.5,335.5" fill="#f6107c"/>
<polygon points="284.1,335.1 283.6,330.7 274.5,337.7 274.9,342.1" fill="#f61087"/>
<polygon points="275.5,341.7 275.1,337.3 266,344.3 266.5,348.8" fill="#f71093"/>
<polygon points="267.1,348.3 266.7,343.9 257.7,351 258.1,355.4" fill="#f7109f"/>
<polygon points="258.8,355 258.3,350.6 249.5,357.7 249.9,362.2" fill="#f710aa"/>
<polygon points="250.6,361.7 250.1,357.3 241.4,364.5 241.8,368.9" fill="#f710b6"/>
<polygon points="242.5,368.5 242,364 233.5,371.3 233.9,375.7" fill="#f710c2"/>
<polygon points="234.5,375.3 234.1,370.8 225.6,378.1 226,382.5" fill="#f710cf"/>
<polygon points="226.6,382.1 226.2,377.7 217.8,385 218.2,389.4" fill="#f810db"/>
<polygon points="218.8,388.9 218.4,384.6 210.2,392 210.5,396.3" fill="#f810e8"/>
<polygon points="211.1,395.9 210.8,391.5 202.6,398.9 203,403.3" fill="#f810f4"/>
<polygon points="390.8,257 388.5,252 384.7,254.4 386.8,259.4" fill="#f61703"/>
<polygon points="387.3,259.2 385.2,254.2 380.6,257.1 382.5,262.2" fill="#f61709"/>
<polygon points="383,261.9 381.1,256.9 374.9,260.8 376.6,265.9" fill="#f61710"/>
<polygon points="377.2,265.6 375.5,260.5 368.1,265.3 369.6,270.5" fill="#f61718"/>
<polygon points="370.2,270.1 368.7,265 360.5,270.3 361.8,275.6" fill="#f61721"/>
<polygon points="362.4,275.2 361.1,270 352.3,275.8 353.5,281.1" fill="#f6172a"/>
<polygon points="354.1,280.8 353,275.4 343.8,281.5 344.8,287" fill="#f61733"/>
<polygon points="345.5,286.6 344.4,281.2 335.1,287.5 336,293" fill="#f6173d"/>
<polygon points="336.6,292.6 335.7,287.1 326.3,293.6 327.1,299.2" fill="#f61747"/>
<polygon points="327.7,298.8 326.9,293.3 317.4,299.9 318.2,305.4" fill="#f61751"/>
<polygon points="318.8,305.1 318.1,299.5 308.6,306.2 309.3,311.8" fill="#f6175b"/>
<polygon points="310,311.4 309.2,305.9 299.8,312.6 300.5,318.3" fill="#f61766"/>
<polygon points="301.1,317.9 300.5,312.3 291.1,319.1 291.8,324.8" fill="#f61771"/>
<polygon points="292.4,324.4 291.8,318.7 282.5,325.7 283.1,331.3" fill="#f6177c"/>
<polygon points="283.8,330.9 283.2,325.3 274,332.2 274.6,337.9" fill="#f61787"/>
<polygon points="275.2,337.5 274.7,331.9 265.6,338.9 266.2,344.5" fill="#f71793"/>
<polygon points="266.8,344.1 266.3,338.5 257.4,345.6 257.9,351.2" fill="#f7179f"/>
<polygon points="258.5,350.8 258,345.2 249.2,352.3 249.7,357.9" fill="#f717aa"/>
<polygon points="250.3,357.5 249.8,351.9 241.1,359.1 241.6,364.7" fill="#f717b6"/>
<polygon points="242.2,364.3 241.7,358.7 233.2,365.9 233.6,371.5" fill="#f717c2"/>
<polygon points="234.2,371.1 233.8,365.5 225.3,372.7 225.8,378.3" fill="#f717cf"/>
<polygon points="226.4,377.9 225.9,372.3 217.6,379.7 218,385.2" fill="#f817db"/>
<polygon points="218.6,384.8 218.2,379.2 209.9,386.6 210.3,392.2" fill="#f817e8"/>
<polygon points="210.9,391.7 210.5,386.2 202.4,393.6 202.8,399.1" fill="#f817f4"/>
<polygon points="388.8,252.6 386.1,246.7 382.6,248.9 385,255" fill="#f61e04"/>
<polygon points="385.5,254.7 383,248.7 378.6,251.5 380.9,257.6" fill="#f61e0a"/>
<polygon points="381.3,257.3 379.1,251.3 373.2,255.1 375.2,261.2" fill="#f61e11"/>
<polygon points="375.7,260.9 373.8,254.8 366.6,259.4 368.3,265.7" fill="#f61e19"/>
<polygon points="368.9,265.3 367.2,259.1 359.2,264.3 360.7,270.7" fill="#f61e21"/>
<polygon points="361.3,270.3 359.8,264 351.2,269.7 352.5,276.1" fill="#f61e2a"/>
<polygon points="353.1,275.8 351.8,269.3 342.8,275.3 344,281.8" fill="#f61e33"/>
<polygon points="344.6,281.5 343.4,275 334.2,281.2 335.3,287.8" fill="#f61e3d"/>
<polygon points="335.9,287.5 334.8,280.9 325.5,287.3 326.5,293.9" fill="#f61e47"/>
<polygon points="327.1,293.6 326.1,286.9 316.7,293.5 317.6,300.2" fill="#f61e51"/>
<polygon points="318.2,299.8 317.3,293.1 307.9,299.8 308.8,306.5" fill="#f61e5b"/>
<polygon points="309.4,306.2 308.6,299.4 299.2,306.1 300,312.9" fill="#f61e66"/>
<polygon points="300.6,312.6 299.8,305.8 290.6,312.6 291.3,319.4" fill="#f61e71"/>
<polygon points="291.9,319.1 291.2,312.3 282,319.1 282.7,325.9" fill="#f61e7c"/>
<polygon points="283.3,325.6 282.6,318.8 273.6,325.7 274.2,332.5" fill="#f71e87"/>
<polygon points="274.8,332.2 274.2,325.3 265.2,332.3 265.8,339.2" fill="#f71e93"/>
<polygon points="266.4,338.8 265.8,332 257,339 257.6,345.8" fill="#f71e9f"/>
<polygon points="258.2,345.5 257.6,338.6 248.8,345.7 249.4,352.6" fill="#f71eaa"/>
<polygon points="250,352.2 249.4,345.4 240.8,352.5 241.3,359.3" fill="#f71eb6"/>
<polygon points="241.9,359 241.4,352.2 232.8,359.3 233.4,366.2" fill="#f71ec2"/>
<polygon points="234,365.8 233.4,359 225,366.2 225.5,373" fill="#f71ecf"/>
<polygon points="226.1,372.6 225.6,365.8 217.2,373.1 217.8,379.9" fill="#f81edb"/>
<polygon points="218.3,379.5 217.8,372.8 209.6,380.1 210.1,386.9" fill="#f81ee8"/>
<polygon points="210.7,386.5 210.2,379.7 202.1,387.1 202.6,393.9" fill="#f81ef4"/>
<polygon points="386.4,247.4 383.5,240.5 380.2,242.5 382.9,249.5" fill="#f62605"/>
<polygon points="383.3,249.3 380.6,242.4 376.4,245 378.9,252.1" fill="#f6260b"/>
<polygon points="379.4,251.8 376.9,244.8 371.2,248.4 373.5,255.6" fill="#f62611"/>
<polygon points="374,255.3 371.7,248.2 364.8,252.6 366.8,259.8" fill="#f62619"/>
<polygon points="367.4,259.5 365.4,252.3 357.6,257.3 359.4,264.7" fill="#f62621"/>
<polygon points="360,264.4 358.2,257.1 349.8,262.5 351.4,270" fill="#f6262a"/>
<polygon points="351.9,269.7 350.4,262.3 341.6,268.1 343,275.7" fill="#f62633"/>
<polygon points="343.6,275.4 342.2,267.8 333.1,273.9 334.4,281.6" fill="#f6263d"/>
<polygon points="335,281.3 333.7,273.6 324.5,279.9 325.7,287.6" fill="#f62647"/>
<polygon points="326.3,287.3 325.1,279.6 315.9,286 316.9,293.8" fill="#f62651"/>
<polygon points="317.5,293.5 316.5,285.7 307.2,292.3 308.1,300.1" fill="#f6265c"/>
<polygon points="308.7,299.8 307.8,292 298.6,298.6 299.4,306.5" fill="#f62666"/>
<polygon points="300,306.2 299.2,298.3 290,305 290.8,312.9" fill="#f62671"/>
<polygon points="291.4,312.6 290.6,304.7 281.5,311.5 282.2,319.5" fill="#f6267c"/>
<polygon points="282.8,319.2 282.1,311.2 273.1,318.1 273.8,326" fill="#f72688"/>
<polygon points="274.4,325.7 273.7,317.8 264.7,324.7 265.4,332.7" fill="#f72693"/>
<polygon points="266,332.4 265.3,324.4 256.5,331.4 257.2,339.3" fill="#f7269f"/>
<polygon points="257.8,339 257.1,331 248.4,338.1 249,346.1" fill="#f726aa"/>
<polygon points="249.6,345.8 249,337.8 240.4,344.9 241,352.9" fill="#f726b6"/>
<polygon points="241.6,352.5 241,344.5 232.5,351.7 233,359.7" fill="#f726c2"/>
<polygon points="233.6,359.4 233,351.4 224.6,358.6 225.2,366.6" fill="#f726cf"/>
<polygon points="225.8,366.2 225.2,358.3 216.9,365.5 217.5,373.5" fill="#f826db"/>
<polygon points="218,373.1 217.5,365.2 209.3,372.5 209.8,380.5" fill="#f826e8"/>
<polygon points="210.4,380.1 209.9,372.2 201.8,379.6 202.3,387.5" fill="#f826f4"/>
<polygon points="383.8,241.1 380.7,233.4 377.6,235.3 380.5,243.2" fill="#f62f06"/>
<polygon points="380.8,243 377.9,235.2 374,237.6 376.7,245.6" fill="#f62f0c"/>
<polygon points="377.1,245.4 374.4,237.4 369,240.8 371.5,248.9" fill="#f62f12"/>
<polygon points="371.9,248.7 369.5,240.6 362.9,244.8 365.1,253" fill="#f62f1a"/>
<polygon points="365.6,252.8 363.4,244.6 355.9,249.4 357.9,257.8" fill="#f62f22"/>
<polygon points="358.4,257.5 356.5,249.2 348.3,254.5 350,263" fill="#f62f2a"/>
<polygon points="350.6,262.7 348.9,254.3 340.3,259.9 341.8,268.5" fill="#f62f34"/>
<polygon points="342.4,268.3 340.9,259.7 332,265.6 333.3,274.3" fill="#f62f3d"/>
<polygon points="333.9,274 332.6,265.4 323.5,271.5 324.7,280.3" fill="#f62f47"/>
<polygon points="325.3,280 324.1,271.3 315,277.6 316.1,286.4" fill="#f62f51"/>
<polygon points="316.7,286.1 315.5,277.3 306.4,283.8 307.4,292.7" fill="#f62f5c"/>
<polygon points="308,292.4 307,283.5 297.8,290.1 298.8,299" fill="#f62f66"/>
<polygon points="299.4,298.7 298.4,289.8 289.3,296.4 290.2,305.4" fill="#f62f71"/>
<polygon points="290.8,305.1 289.9,296.2 280.9,302.9 281.7,311.9" fill="#f72f7c"/>
<polygon points="282.3,311.6 281.5,302.6 272.5,309.4 273.3,318.5" fill="#f72f88"/>
<polygon points="273.8,318.2 273.1,309.2 264.2,316 265,325.1" fill="#f72f93"/>
<polygon points="265.5,324.8 264.8,315.8 256,322.7 256.7,331.7" fill="#f72f9f"/>
<polygon points="257.3,331.5 256.6,322.4 248,329.4 248.6,338.5" fill="#f72fab"/>
<polygon points="249.2,338.2 248.5,329.1 240,336.2 240.6,345.3" fill="#f72fb6"/>
<polygon points="241.2,345 240.5,335.9 232.1,343 232.7,352.1" fill="#f72fc3"/>
<polygon points="233.2,351.8 232.6,342.8 224.3,349.9 224.9,359" fill="#f82fcf"/>
<polygon points="225.4,358.7 224.8,349.7 216.6,356.9 217.1,365.9" fill="#f82fdb"/>
<polygon points="217.7,365.6 217.1,356.6 209,363.9 209.5,372.9" fill="#f82fe8"/>
<polygon points="210.1,372.6 209.5,363.6 201.5,371 202,380" fill="#f82ff4"/>
<polygon points="380.9,234.1 377.6,225.5 374.8,227.2 377.9,235.9" fill="#f63907"/>
<polygon points="378.2,235.8 375.1,227.1 371.4,229.4 374.3,238.2" fill="#f6390d"/>
<polygon points="374.6,238.1 371.8,229.3 366.7,232.5 369.3,241.4" fill="#f63913"/>
<polygon points="369.7,241.2 367.1,232.3 360.8,236.3 363.2,245.4" fill="#f6391a"/>
<polygon points="363.6,245.2 361.3,236.1 354.1,240.7 356.2,249.9" fill="#f63922"/>
<polygon points="356.7,249.7 354.6,240.5 346.7,245.7 348.5,255" fill="#f6392b"/>
<polygon points="349.1,254.8 347.2,245.5 338.9,251 340.5,260.4" fill="#f63934"/>
<polygon points="341.1,260.2 339.4,250.7 330.8,256.5 332.2,266.1" fill="#f6393e"/>
<polygon points="332.8,265.9 331.3,256.3 322.4,262.3 323.7,272" fill="#f63947"/>
<polygon points="324.3,271.8 323,262.1 314,268.3 315.2,278" fill="#f63951"/>
<polygon points="315.7,277.8 314.6,268.1 305.5,274.4 306.6,284.2" fill="#f6395c"/>
<polygon points="307.2,284 306.1,274.2 297.1,280.6 298.1,290.5" fill="#f63967"/>
<polygon points="298.6,290.3 297.6,280.4 288.6,286.9 289.5,296.9" fill="#f73971"/>
<polygon points="290.1,296.6 289.2,286.7 280.3,293.4 281.1,303.3" fill="#f7397c"/>
<polygon points="281.7,303.1 280.8,293.1 272,299.9 272.7,309.9" fill="#f73988"/>
<polygon points="273.3,309.6 272.5,299.6 263.7,306.4 264.4,316.5" fill="#f73993"/>
<polygon points="265,316.2 264.3,306.2 255.6,313.1 256.3,323.1" fill="#f7399f"/>
<polygon points="256.8,322.9 256.1,312.8 247.5,319.8 248.2,329.9" fill="#f739ab"/>
<polygon points="248.7,329.6 248.1,319.6 239.6,326.6 240.2,336.6" fill="#f739b7"/>
<polygon points="240.7,336.4 240.1,326.3 231.7,333.4 232.3,343.5" fill="#f739c3"/>
<polygon points="232.8,343.2 232.2,333.2 223.9,340.3 224.5,350.4" fill="#f839cf"/>
<polygon points="225.1,350.1 224.5,340.1 216.3,347.3 216.8,357.3" fill="#f839db"/>
<polygon points="217.4,357.1 216.8,347.1 208.7,354.3 209.2,364.4" fill="#f839e8"/>
<polygon points="209.8,364.1 209.2,354.1 201.2,361.4 201.7,371.4" fill="#f839f4"/>
<polygon points="377.9,226.2 374.5,216.8 371.8,218.5 375,227.9" fill="#f64309"/>
<polygon points="375.3,227.8 372.1,218.4 368.7,220.5 371.7,230.1" fill="#f6430f"/>
<polygon points="372,229.9 369,220.4 364.2,223.4 366.9,233.1" fill="#f64315"/>
<polygon points="367.3,232.9 364.6,223.3 358.6,227.1 361.1,236.9" fill="#f6431b"/>
<polygon points="361.5,236.7 359.1,226.9 352.2,231.3 354.3,241.3" fill="#f64323"/>
<polygon points="354.8,241.1 352.6,231.1 345,236.1 346.9,246.2" fill="#f6432c"/>
<polygon points="347.4,246 345.5,235.9 337.4,241.2 339.1,251.5" fill="#f64334"/>
<polygon points="339.6,251.3 337.9,241 329.5,246.7 331,257" fill="#f6433e"/>
<polygon points="331.5,256.8 330,246.5 321.3,252.3 322.6,262.8" fill="#f64348"/>
<polygon points="323.2,262.6 321.8,252.1 313,258.2 314.2,268.8" fill="#f64352"/>
<polygon points="314.8,268.6 313.5,258 304.7,264.2 305.8,274.9" fill="#f6435c"/>
<polygon points="306.3,274.7 305.2,264 296.3,270.4 297.3,281.1" fill="#f74367"/>
<polygon points="297.8,280.9 296.8,270.2 287.9,276.7 288.9,287.4" fill="#f74372"/>
<polygon points="289.4,287.2 288.5,276.5 279.6,283 280.5,293.9" fill="#f7437d"/>
<polygon points="281,293.7 280.2,282.8 271.4,289.5 272.2,300.4" fill="#f74388"/>
<polygon points="272.7,300.2 271.9,289.3 263.2,296 263.9,306.9" fill="#f74393"/>
<polygon points="264.5,306.7 263.7,295.8 255.1,302.7 255.8,313.6" fill="#f7439f"/>
<polygon points="256.3,313.4 255.6,302.4 247.1,309.3 247.7,320.3" fill="#f743ab"/>
<polygon points="248.3,320.1 247.6,309.1 239.2,316.1 239.8,327.1" fill="#f743b7"/>
<polygon points="240.3,326.9 239.7,315.9 231.3,323 231.9,333.9" fill="#f843c3"/>
<polygon points="232.4,333.7 231.9,322.7 223.6,329.9 224.2,340.8" fill="#f843cf"/>
<polygon points="224.7,340.6 224.1,329.6 215.9,336.8 216.5,347.8" fill="#f843db"/>
<polygon points="217,347.6 216.5,336.6 208.4,343.9 208.9,354.8" fill="#f843e8"/>
<polygon points="209.4,354.6 208.9,343.7 200.9,351 201.4,361.9" fill="#f843f4"/>
<polygon points="374.8,217.5 371.3,207.6 368.8,209.1 372.1,219.2" fill="#f64d0c"/>
<polygon points="372.3,219.1 369.1,209 365.9,211 368.9,221.2" fill="#f64d11"/>
<polygon points="369.2,221.1 366.2,210.9 361.6,213.7 364.5,224.1" fill="#f64d16"/>
<polygon points="364.8,223.9 362,213.6 356.3,217.2 358.9,227.7" fill="#f64d1c"/>
<polygon points="359.3,227.5 356.8,217.1 350.1,221.3 352.4,231.9" fill="#f64d24"/>
<polygon points="352.8,231.7 350.6,221.1 343.3,225.9 345.2,236.6" fill="#f64d2c"/>
<polygon points="345.7,236.5 343.7,225.7 335.9,230.8 337.6,241.8" fill="#f64d35"/>
<polygon points="338.1,241.6 336.4,230.7 328.1,236.1 329.7,247.2" fill="#f64d3e"/>
<polygon points="330.2,247 328.6,236 320.1,241.7 321.5,252.9" fill="#f64d48"/>
<polygon points="322,252.7 320.6,241.5 312,247.5 313.2,258.7" fill="#f74d52"/>
<polygon points="313.7,258.6 312.5,247.3 303.8,253.4 304.9,264.8" fill="#f74d5c"/>
<polygon points="305.4,264.6 304.3,253.2 295.5,259.5 296.5,270.9" fill="#f74d67"/>
<polygon points="297,270.7 296,259.3 287.3,265.7 288.1,277.2" fill="#f74d72"/>
<polygon points="288.7,277 287.8,265.5 279,272 279.8,283.6" fill="#f74d7d"/>
<polygon points="280.4,283.4 279.5,271.8 270.8,278.4 271.6,290" fill="#f74d88"/>
<polygon points="272.1,289.8 271.4,278.2 262.7,284.9 263.4,296.6" fill="#f74d94"/>
<polygon points="263.9,296.4 263.2,284.7 254.7,291.5 255.3,303.2" fill="#f74d9f"/>
<polygon points="255.8,303 255.2,291.3 246.7,298.2 247.3,309.9" fill="#f74dab"/>
<polygon points="247.8,309.7 247.2,298 238.8,304.9 239.4,316.6" fill="#f74db7"/>
<polygon points="239.9,316.5 239.3,304.7 231,311.7 231.6,323.5" fill="#f84dc3"/>
<polygon points="232.1,323.3 231.5,311.5 223.3,318.6 223.8,330.4" fill="#f84dcf"/>
<polygon points="224.3,330.2 223.8,318.4 215.7,325.6 216.2,337.4" fill="#f84ddb"/>
<polygon points="216.7,337.2 216.2,325.4 208.1,332.6 208.6,344.4" fill="#f84de8"/>
<polygon points="209.1,344.2 208.6,332.5 200.7,339.8 201.1,351.5" fill="#f94df4"/>
<polygon points="371.6,208.3 368.1,197.7 365.8,199.2 369.1,209.8" fill="#f6580e"/>
<polygon points="369.3,209.7 366,199.1 363,200.9 366.1,211.7" fill="#f75813"/>
<polygon points="366.4,211.6 363.3,200.9 359.1,203.5 361.9,214.4" fill="#f75818"/>
<polygon points="362.2,214.3 359.4,203.4 354,206.8 356.6,217.8" fill="#f7581e"/>
<polygon points="357,217.7 354.4,206.7 348.1,210.7 350.4,221.9" fill="#f75825"/>
<polygon points="350.8,221.7 348.5,210.6 341.5,215.1 343.5,226.5" fill="#f7582d"/>
<polygon points="343.9,226.3 341.9,215 334.3,219.9 336.1,231.4" fill="#f75836"/>
<polygon points="336.6,231.3 334.8,219.8 326.8,225.1 328.3,236.7" fill="#f7583f"/>
<polygon points="328.8,236.5 327.2,224.9 319,230.5 320.3,242.3" fill="#f75849"/>
<polygon points="320.8,242.1 319.4,230.4 311,236.2 312.2,248" fill="#f75853"/>
<polygon points="312.7,247.9 311.5,236 302.9,242 304,254" fill="#f7585d"/>
<polygon points="304.5,253.8 303.4,241.8 294.7,248 295.7,260" fill="#f75867"/>
<polygon points="296.2,259.9 295.2,247.8 286.6,254.1 287.4,266.2" fill="#f75872"/>
<polygon points="287.9,266.1 287.1,253.9 278.4,260.4 279.2,272.5" fill="#f7587d"/>
<polygon points="279.7,272.4 278.9,260.2 270.3,266.7 271,279" fill="#f75888"/>
<polygon points="271.5,278.8 270.8,266.5 262.3,273.2 262.9,285.5" fill="#f75894"/>
<polygon points="263.4,285.3 262.8,273 254.3,279.7 254.9,292" fill="#f7589f"/>
<polygon points="255.4,291.9 254.8,279.5 246.4,286.3 246.9,298.7" fill="#f758ab"/>
<polygon points="247.4,298.6 246.8,286.2 238.5,293.1 239,305.5" fill="#f858b7"/>
<polygon points="239.5,305.3 239,292.9 230.7,299.9 231.2,312.3" fill="#f858c3"/>
<polygon points="231.7,312.1 231.2,299.7 223.1,306.7 223.5,319.2" fill="#f858cf"/>
<polygon points="224,319 223.5,306.6 215.5,313.7 215.9,326.2" fill="#f858dc"/>
<polygon points="216.4,326 215.9,313.5 207.9,320.7 208.3,333.2" fill="#f858e8"/>
<polygon points="208.8,333 208.4,320.6 200.5,327.8 200.9,340.3" fill="#f958f5"/>
<polygon points="368.4,198.5 365,187.5 362.8,188.8 366.1,199.9" fill="#f76311"/>
<polygon points="366.2,199.8 363,188.7 360.2,190.4 363.3,201.7" fill="#f76315"/>
<polygon points="363.5,201.6 360.5,190.4 356.5,192.9 359.3,204.2" fill="#f7631a"/>
<polygon points="359.6,204.1 356.8,192.8 351.7,196 354.2,207.5" fill="#f7631f"/>
<polygon points="354.6,207.3 352,195.9 346,199.7 348.3,211.3" fill="#f76326"/>
<polygon points="348.7,211.2 346.4,199.6 339.6,203.9 341.7,215.7" fill="#f7632e"/>
<polygon points="342.1,215.6 340.1,203.8 332.7,208.6 334.5,220.5" fill="#f76337"/>
<polygon points="335,220.4 333.2,208.4 325.4,213.6 327,225.7" fill="#f76340"/>
<polygon points="327.4,225.5 325.9,213.4 317.8,218.9 319.1,231.1" fill="#f76349"/>
<polygon points="319.6,231 318.3,218.7 310,224.4 311.2,236.7" fill="#f76353"/>
<polygon points="311.6,236.6 310.4,224.3 302,230.1 303.1,242.6" fill="#f7635d"/>
<polygon points="303.6,242.4 302.5,230 294,236 294.9,248.6" fill="#f76368"/>
<polygon points="295.4,248.4 294.5,235.9 285.9,242 286.8,254.7" fill="#f76372"/>
<polygon points="287.3,254.5 286.4,241.9 277.9,248.2 278.6,260.9" fill="#f7637d"/>
<polygon points="279.1,260.8 278.4,248.1 269.9,254.5 270.5,267.3" fill="#f76389"/>
<polygon points="271,267.1 270.3,254.4 261.9,260.9 262.5,273.7" fill="#f76394"/>
<polygon points="262.9,273.6 262.4,260.7 253.9,267.4 254.5,280.3" fill="#f863a0"/>
<polygon points="255,280.1 254.4,267.2 246.1,274 246.5,286.9" fill="#f863ab"/>
<polygon points="247,286.8 246.5,273.8 238.3,280.7 238.7,293.6" fill="#f863b7"/>
<polygon points="239.2,293.5 238.7,280.5 230.5,287.4 230.9,300.4" fill="#f863c3"/>
<polygon points="231.4,300.3 231,287.3 222.9,294.3 223.3,307.3" fill="#f863cf"/>
<polygon points="223.7,307.2 223.3,294.1 215.3,301.2 215.7,314.3" fill="#f863dc"/>
<polygon points="216.1,314.1 215.8,301.1 207.8,308.2 208.1,321.3" fill="#f963e8"/>
<polygon points="208.6,321.2 208.3,308.1 200.4,315.3 200.7,328.4" fill="#f963f5"/>
<polygon points="365.2,188.2 361.9,176.8 359.9,178 363,189.5" fill="#f76f14"/>
<polygon points="363.2,189.5 360,178 357.4,179.6 360.4,191.2" fill="#f76f17"/>
<polygon points="360.7,191.1 357.7,179.5 353.9,181.8 356.7,193.6" fill="#f76f1c"/>
<polygon points="357,193.5 354.2,181.8 349.4,184.8 351.9,196.6" fill="#f76f21"/>
<polygon points="352.2,196.5 349.7,184.7 344,188.3 346.2,200.3" fill="#f76f28"/>
<polygon points="346.6,200.2 344.4,188.2 337.9,192.4 339.8,204.6" fill="#f76f2f"/>
<polygon points="340.3,204.4 338.3,192.3 331.2,196.9 332.9,209.2" fill="#f76f38"/>
<polygon points="333.4,209.1 331.6,196.7 324.1,201.7 325.6,214.2" fill="#f76f41"/>
<polygon points="326,214.1 324.5,201.6 316.6,206.9 318,219.5" fill="#f76f4a"/>
<polygon points="318.4,219.3 317.1,206.7 309,212.2 310.2,225" fill="#f76f54"/>
<polygon points="310.6,224.9 309.5,212.1 301.2,217.9 302.2,230.7" fill="#f76f5e"/>
<polygon points="302.7,230.6 301.7,217.7 293.3,223.6 294.2,236.6" fill="#f76f68"/>
<polygon points="294.7,236.5 293.8,223.5 285.4,229.6 286.1,242.6" fill="#f76f73"/>
<polygon points="286.6,242.5 285.8,229.5 277.4,235.7 278.1,248.8" fill="#f76f7e"/>
<polygon points="278.5,248.7 277.9,235.5 269.5,241.9 270,255.1" fill="#f86f89"/>
<polygon points="270.5,255 269.9,241.7 261.5,248.2 262.1,261.5" fill="#f86f94"/>
<polygon points="262.5,261.4 262,248.1 253.7,254.6 254.1,268" fill="#f86fa0"/>
<polygon points="254.6,267.9 254.1,254.5 245.8,261.2 246.2,274.6" fill="#f86fab"/>
<polygon points="246.7,274.4 246.3,261 238.1,267.8 238.4,281.3" fill="#f86fb7"/>
<polygon points="238.9,281.1 238.5,267.7 230.4,274.5 230.7,288" fill="#f86fc3"/>
<polygon points="231.2,287.9 230.8,274.4 222.8,281.4 223.1,294.9" fill="#f86fd0"/>
<polygon points="223.5,294.8 223.2,281.2 215.2,288.3 215.5,301.8" fill="#f96fdc"/>
<polygon points="215.9,301.7 215.7,288.1 207.7,295.3 208,308.8" fill="#f96fe8"/>
<polygon points="208.4,308.7 208.2,295.1 200.3,302.3 200.6,315.9" fill="#f96ff5"/>
<polygon points="362.1,177.5 358.9,165.8 357,166.9 360.1,178.7" fill="#f77b17"/>
<polygon points="360.2,178.7 357.2,166.9 354.7,168.4 357.6,180.3" fill="#f77b1a"/>
<polygon points="357.9,180.2 354.9,168.3 351.4,170.5 354.1,182.6" fill="#f77b1e"/>
<polygon points="354.4,182.5 351.7,170.4 347.1,173.3 349.6,185.5" fill="#f77b23"/>
<polygon points="349.9,185.4 347.4,173.2 342,176.7 344.2,189" fill="#f77b29"/>
<polygon points="344.5,188.9 342.3,176.6 336.1,180.5 338,193" fill="#f77b31"/>
<polygon points="338.5,192.9 336.5,180.4 329.7,184.9 331.4,197.5" fill="#f77b39"/>
<polygon points="331.8,197.4 330.1,184.8 322.8,189.6 324.3,202.3" fill="#f77b42"/>
<polygon points="324.7,202.2 323.2,189.4 315.6,194.6 316.8,207.5" fill="#f77b4b"/>
<polygon points="317.3,207.4 316,194.4 308.1,199.8 309.2,212.9" fill="#f77b54"/>
<polygon points="309.6,212.7 308.5,199.7 300.4,205.3 301.4,218.5" fill="#f77b5e"/>
<polygon points="301.8,218.3 300.9,205.2 292.7,211 293.5,224.3" fill="#f87b69"/>
<polygon points="293.9,224.1 293.1,210.8 284.9,216.8 285.5,230.2" fill="#f87b73"/>
<polygon points="286,230.1 285.3,216.7 277,222.8 277.6,236.3" fill="#f87b7e"/>
<polygon points="278,236.2 277.4,222.7 269.1,228.9 269.6,242.5" fill="#f87b89"/>
<polygon points="270.1,242.4 269.6,228.8 261.3,235.2 261.7,248.8" fill="#f87b95"/>
<polygon points="262.2,248.7 261.7,235.1 253.5,241.5 253.8,255.3" fill="#f87ba0"/>
<polygon points="254.3,255.1 253.9,241.4 245.7,248 246,261.8" fill="#f87bac"/>
<polygon points="246.5,261.7 246.2,247.9 238,254.6 238.3,268.4" fill="#f87bb8"/>
<polygon points="238.7,268.3 238.4,254.5 230.3,261.3 230.6,275.2" fill="#f97bc4"/>
<polygon points="231,275 230.8,261.2 222.7,268 222.9,282" fill="#f97bd0"/>
<polygon points="223.4,281.9 223.2,267.9 215.2,274.9 215.4,288.9" fill="#f97bdc"/>
<polygon points="215.8,288.8 215.7,274.8 207.8,281.9 207.9,295.9" fill="#f97be8"/>
<polygon points="208.4,295.8 208.2,281.8 200.4,288.9 200.5,303" fill="#f97bf5"/>
<polygon points="359.1,166.5 356,154.5 354.2,155.6 357.2,167.7" fill="#f8871a"/>
<polygon points="357.4,167.6 354.4,155.6 352.1,157 354.9,169.1" fill="#f8871d"/>
<polygon points="355.1,169.1 352.3,156.9 349,159 351.6,171.2" fill="#f88720"/>
<polygon points="351.9,171.2 349.2,158.9 344.9,161.6 347.3,174" fill="#f88725"/>
<polygon points="347.6,173.9 345.2,161.5 340,164.8 342.2,177.3" fill="#f8872b"/>
<polygon points="342.5,177.2 340.4,164.7 334.4,168.5 336.3,181.2" fill="#f88732"/>
<polygon points="336.7,181.1 334.8,168.4 328.2,172.7 329.8,185.5" fill="#f8873a"/>
<polygon points="330.3,185.4 328.6,172.6 321.5,177.2 323,190.2" fill="#f88743"/>
<polygon points="323.4,190.1 322,177.1 314.5,182 315.7,195.2" fill="#f8874c"/>
<polygon points="316.2,195.1 314.9,181.9 307.2,187.2 308.2,200.4" fill="#f88755"/>
<polygon points="308.7,200.3 307.7,187 299.7,192.5 300.6,205.9" fill="#f8875f"/>
<polygon points="301,205.8 300.2,192.4 292.1,198.1 292.8,211.6" fill="#f88769"/>
<polygon points="293.3,211.5 292.6,198 284.4,203.8 285,217.4" fill="#f88774"/>
<polygon points="285.5,217.3 284.9,203.7 276.7,209.7 277.2,223.4" fill="#f8877f"/>
<polygon points="277.6,223.3 277.1,209.6 268.9,215.7 269.3,229.6" fill="#f8878a"/>
<polygon points="269.7,229.4 269.3,215.6 261.1,221.9 261.4,235.8" fill="#f88795"/>
<polygon points="261.9,235.7 261.6,221.8 253.4,228.2 253.6,242.2" fill="#f887a0"/>
<polygon points="254.1,242.1 253.8,228.1 245.7,234.6 245.9,248.6" fill="#f987ac"/>
<polygon points="246.3,248.5 246.1,234.5 238,241.1 238.2,255.2" fill="#f987b8"/>
<polygon points="238.6,255.1 238.4,241 230.4,247.7 230.5,261.9" fill="#f987c4"/>
<polygon points="230.9,261.8 230.8,247.6 222.8,254.4 222.9,268.7" fill="#f987d0"/>
<polygon points="223.3,268.6 223.2,254.3 215.3,261.3 215.4,275.6" fill="#f987dc"/>
<polygon points="215.8,275.4 215.7,261.2 207.9,268.2 207.9,282.5" fill="#f987e9"/>
<polygon points="208.4,282.4 208.3,268.1 200.5,275.2 200.5,289.6" fill="#fa87f5"/>
<polygon points="356.2,155.3 353.2,143.1 351.6,144.1 354.4,156.4" fill="#f8941d"/>
<polygon points="354.6,156.3 351.7,144 349.6,145.3 352.3,157.7" fill="#f89420"/>
<polygon points="352.5,157.7 349.8,145.3 346.7,147.2 349.2,159.7" fill="#f89423"/>
<polygon points="349.4,159.6 346.9,147.2 342.8,149.7 345.1,162.3" fill="#f89428"/>
<polygon points="345.4,162.2 343.1,149.7 338.2,152.8 340.2,165.5" fill="#f8942d"/>
<polygon points="340.5,165.4 338.5,152.7 332.8,156.3 334.6,169.2" fill="#f89434"/>
<polygon points="335,169.1 333.1,156.2 326.8,160.3 328.4,173.3" fill="#f8943c"/>
<polygon points="328.8,173.2 327.2,160.2 320.4,164.7 321.7,177.8" fill="#f89444"/>
<polygon points="322.1,177.7 320.8,164.6 313.5,169.4 314.7,182.7" fill="#f8944d"/>
<polygon points="315.1,182.6 314,169.3 306.4,174.3 307.4,187.8" fill="#f89456"/>
<polygon points="307.8,187.7 306.9,174.2 299.1,179.6 299.9,193.2" fill="#f89460"/>
<polygon points="300.3,193 299.5,179.5 291.6,185 292.3,198.7" fill="#f8946a"/>
<polygon points="292.7,198.6 292.1,184.9 284,190.6 284.6,204.4" fill="#f89475"/>
<polygon points="285,204.3 284.5,190.5 276.4,196.4 276.8,210.3" fill="#f8947f"/>
<polygon points="277.2,210.2 276.8,196.3 268.7,202.3 269,216.4" fill="#f8948a"/>
<polygon points="269.5,216.3 269.2,202.2 261,208.4 261.3,222.5" fill="#f99496"/>
<polygon points="261.7,222.4 261.5,208.3 253.4,214.6 253.5,228.8" fill="#f994a1"/>
<polygon points="254,228.7 253.8,214.5 245.7,221 245.8,235.2" fill="#f994ad"/>
<polygon points="246.2,235.1 246.1,220.9 238.1,227.4 238.1,241.7" fill="#f994b8"/>
<polygon points="238.6,241.6 238.5,227.3 230.5,233.9 230.5,248.4" fill="#f994c4"/>
<polygon points="231,248.3 230.9,233.9 223,240.6 223,255.1" fill="#f994d0"/>
<polygon points="223.4,255 223.4,240.5 215.5,247.4 215.5,261.9" fill="#fa94dd"/>
<polygon points="215.9,261.8 215.9,247.3 208.1,254.2 208,268.8" fill="#fa94e9"/>
<polygon points="208.5,268.7 208.5,254.1 200.7,261.2 200.7,275.8" fill="#fa94f6"/>
<polygon points="353.4,143.9 350.6,131.5 349.1,132.4 351.8,144.8" fill="#f8a121"/>
<polygon points="351.9,144.8 349.3,132.4 347.2,133.6 349.8,146.1" fill="#f8a123"/>
<polygon points="350,146.1 347.4,133.6 344.5,135.4 346.8,148" fill="#f8a126"/>
<polygon points="347.1,147.9 344.7,135.3 340.8,137.7 343,150.5" fill="#f8a12a"/>
<polygon points="343.3,150.4 341.1,137.7 336.4,140.6 338.3,153.5" fill="#f8a12f"/>
<polygon points="338.6,153.4 336.7,140.6 331.2,144 332.9,157" fill="#f8a136"/>
<polygon points="333.3,156.9 331.6,143.9 325.5,147.8 327,161" fill="#f8a13d"/>
<polygon points="327.4,160.9 325.9,147.8 319.3,152 320.5,165.3" fill="#f8a145"/>
<polygon points="320.9,165.2 319.7,152 312.6,156.6 313.7,170" fill="#f8a14e"/>
<polygon points="314.1,169.9 313.1,156.5 305.7,161.4 306.6,175" fill="#f9a157"/>
<polygon points="307,174.9 306.1,161.3 298.6,166.5 299.3,180.2" fill="#f9a161"/>
<polygon points="299.7,180.1 299,166.4 291.2,171.8 291.8,185.6" fill="#f9a16b"/>
<polygon points="292.2,185.5 291.6,171.7 283.8,177.3 284.2,191.3" fill="#f9a175"/>
<polygon points="284.6,191.2 284.2,177.2 276.2,183 276.5,197.1" fill="#f9a180"/>
<polygon points="277,197 276.7,182.9 268.6,188.8 268.9,203" fill="#f9a18b"/>
<polygon points="269.3,202.9 269.1,188.7 261,194.8 261.2,209.1" fill="#f9a196"/>
<polygon points="261.6,209 261.5,194.7 253.4,200.9 253.5,215.3" fill="#f9a1a1"/>
<polygon points="253.9,215.2 253.9,200.8 245.8,207.2 245.8,221.6" fill="#f9a1ad"/>
<polygon points="246.3,221.5 246.3,207.1 238.3,213.5 238.2,228" fill="#f9a1b9"/>
<polygon points="238.7,228 238.7,213.4 230.7,220 230.7,234.6" fill="#faa1c5"/>
<polygon points="231.1,234.5 231.2,219.9 223.3,226.6 223.1,241.3" fill="#faa1d1"/>
<polygon points="223.6,241.2 223.7,226.5 215.8,233.3 215.7,248" fill="#faa1dd"/>
<polygon points="216.1,247.9 216.2,233.2 208.4,240.1 208.2,254.9" fill="#faa1e9"/>
<polygon points="208.7,254.8 208.8,240 201.1,247 200.9,261.8" fill="#fba1f6"/>
<polygon points="350.8,132.3 348.2,119.8 346.8,120.7 349.3,133.2" fill="#f9af24"/>
<polygon points="349.4,133.2 346.9,120.6 345,121.8 347.4,134.4" fill="#f9af26"/>
<polygon points="347.6,134.3 345.2,121.8 342.4,123.5 344.6,136.1" fill="#f9af29"/>
<polygon points="344.8,136.1 342.6,123.4 338.9,125.7 341,138.5" fill="#f9af2d"/>
<polygon points="341.3,138.4 339.2,125.6 334.7,128.4 336.5,141.4" fill="#f9af32"/>
<polygon points="336.9,141.3 335,128.4 329.8,131.6 331.4,144.7" fill="#f9af38"/>
<polygon points="331.7,144.6 330.1,131.6 324.3,135.3 325.7,148.5" fill="#f9af3f"/>
<polygon points="326,148.4 324.6,135.2 318.3,139.4 319.4,152.7" fill="#f9af47"/>
<polygon points="319.8,152.6 318.6,139.3 311.8,143.8 312.8,157.3" fill="#f9af4f"/>
<polygon points="313.2,157.2 312.2,143.7 305.1,148.5 305.9,162.1" fill="#f9af59"/>
<polygon points="306.3,162 305.5,148.4 298.1,153.4 298.7,167.2" fill="#f9af62"/>
<polygon points="299.1,167.1 298.5,153.3 290.9,158.6 291.4,172.5" fill="#f9af6c"/>
<polygon points="291.8,172.4 291.3,158.5 283.6,164 283.9,178" fill="#f9af76"/>
<polygon points="284.3,177.9 284,163.9 276.2,169.5 276.4,183.7" fill="#f9af81"/>
<polygon points="276.8,183.6 276.6,169.4 268.7,175.2 268.8,189.5" fill="#f9af8c"/>
<polygon points="269.2,189.4 269.1,175.2 261.1,181.1 261.2,195.5" fill="#faaf97"/>
<polygon points="261.6,195.4 261.6,181 253.6,187.1 253.6,201.6" fill="#faafa2"/>
<polygon points="254,201.5 254,187.1 246.1,193.3 246,207.8" fill="#faafae"/>
<polygon points="246.4,207.7 246.5,193.2 238.6,199.6 238.4,214.2" fill="#faafb9"/>
<polygon points="238.8,214.1 239,199.5 231.1,206 230.9,220.7" fill="#faafc5"/>
<polygon points="231.3,220.6 231.5,205.9 223.6,212.5 223.4,227.3" fill="#faafd1"/>
<polygon points="223.8,227.2 224,212.4 216.2,219.1 216,234" fill="#fbafdd"/>
<polygon points="216.4,233.9 216.6,219 208.9,225.8 208.6,240.8" fill="#fbafea"/>
<polygon points="209,240.7 209.3,225.8 201.5,232.7 201.2,247.7" fill="#fbaff6"/>
<polygon points="348.4,120.6 345.9,108 344.6,108.8 347,121.4" fill="#f9bd28"/>
<polygon points="347.1,121.4 344.7,108.8 342.9,109.9 345.2,122.6" fill="#f9bd2a"/>
<polygon points="345.3,122.5 343.1,109.9 340.5,111.5 342.6,124.2" fill="#f9bd2c"/>
<polygon points="342.8,124.2 340.7,111.4 337.2,113.6 339.1,126.4" fill="#f9bd30"/>
<polygon points="339.4,126.4 337.4,113.5 333.2,116.2 334.9,129.1" fill="#f9bd34"/>
<polygon points="335.2,129.1 333.5,116.1 328.5,119.3 329.9,132.4" fill="#f9bd3a"/>
<polygon points="330.3,132.3 328.8,119.2 323.2,122.8 324.4,136" fill="#f9bd41"/>
<polygon points="324.8,135.9 323.5,122.7 317.3,126.7 318.4,140.1" fill="#f9bd49"/>
<polygon points="318.8,140 317.7,126.6 311.1,130.9 312,144.4" fill="#fabd51"/>
<polygon points="312.4,144.4 311.5,130.8 304.5,135.5 305.2,149.1" fill="#fabd5a"/>
<polygon points="305.6,149 304.9,135.4 297.7,140.3 298.2,154.1" fill="#fabd63"/>
<polygon points="298.6,154 298.1,140.2 290.7,145.3 291,159.2" fill="#fabd6d"/>
<polygon points="291.4,159.2 291.1,145.2 283.5,150.6 283.7,164.6" fill="#fabd77"/>
<polygon points="284.1,164.5 283.9,150.5 276.2,156 276.3,170.2" fill="#fabd82"/>
<polygon points="276.7,170.1 276.6,155.9 268.8,161.6 268.8,175.9" fill="#fabd8c"/>
<polygon points="269.2,175.8 269.2,161.5 261.4,167.4 261.3,181.8" fill="#fabd97"/>
<polygon points="261.7,181.7 261.8,167.3 253.9,173.3 253.7,187.8" fill="#fabda3"/>
<polygon points="254.2,187.7 254.3,173.2 246.4,179.4 246.2,194" fill="#fabdae"/>
<polygon points="246.6,193.9 246.8,179.3 239,185.5 238.7,200.2" fill="#fabdba"/>
<polygon points="239.1,200.2 239.4,185.5 231.5,191.9 231.2,206.6" fill="#fbbdc6"/>
<polygon points="231.6,206.6 231.9,191.8 224.1,198.3 223.8,213.1" fill="#fbbdd2"/>
<polygon points="224.2,213.1 224.5,198.2 216.7,204.8 216.4,219.8" fill="#fbbdde"/>
<polygon points="216.8,219.7 217.2,204.8 209.4,211.5 209,226.5" fill="#fbbdea"/>
<polygon points="209.4,226.4 209.8,211.4 202.1,218.3 201.7,233.3" fill="#fcbdf6"/>
<polygon points="346.1,108.8 343.8,96.2 342.6,97 344.8,109.6" fill="#facb2b"/>
<polygon points="344.9,109.6 342.7,96.9 341,97.9 343.1,110.7" fill="#facb2d"/>
<polygon points="343.2,110.6 341.2,97.9 338.7,99.4 340.6,112.2" fill="#facb2f"/>
<polygon points="340.8,112.2 338.9,99.4 335.6,101.4 337.3,114.3" fill="#facb33"/>
<polygon points="337.6,114.3 335.8,101.4 331.7,103.9 333.3,116.9" fill="#facb37"/>
<polygon points="333.6,116.8 332,103.9 327.2,106.8 328.6,120" fill="#facb3d"/>
<polygon points="328.9,119.9 327.5,106.8 322.1,110.2 323.3,123.5" fill="#facb43"/>
<polygon points="323.6,123.4 322.5,110.2 316.5,114 317.5,127.4" fill="#facb4b"/>
<polygon points="317.8,127.3 316.9,113.9 310.5,118.1 311.2,131.6" fill="#facb53"/>
<polygon points="311.6,131.5 310.8,118 304.1,122.5 304.7,136.1" fill="#facb5b"/>
<polygon points="305.1,136.1 304.5,122.4 297.4,127.1 297.8,140.9" fill="#facb65"/>
<polygon points="298.2,140.9 297.8,127.1 290.5,132 290.8,146" fill="#facb6e"/>
<polygon points="291.2,145.9 290.9,132 283.5,137.2 283.6,151.2" fill="#facb78"/>
<polygon points="284,151.2 283.9,137.1 276.3,142.5 276.3,156.7" fill="#facb83"/>
<polygon points="276.7,156.6 276.7,142.4 269,148 268.9,162.3" fill="#fbcb8d"/>
<polygon points="269.3,162.2 269.4,147.9 261.7,153.6 261.5,168.1" fill="#fbcb98"/>
<polygon points="261.9,168 262.1,153.6 254.3,159.5 254,174" fill="#fbcba3"/>
<polygon points="254.4,173.9 254.7,159.4 246.9,165.4 246.6,180" fill="#fbcbaf"/>
<polygon points="247,180 247.3,165.3 239.5,171.5 239.1,186.2" fill="#fbcbba"/>
<polygon points="239.5,186.1 239.9,171.4 232.1,177.7 231.7,192.5" fill="#fbcbc6"/>
<polygon points="232.1,192.5 232.5,177.7 224.7,184.1 224.2,199" fill="#fbcbd2"/>
<polygon points="224.7,198.9 225.1,184 217.4,190.5 216.9,205.5" fill="#fccbde"/>
<polygon points="217.3,205.4 217.8,190.5 210.1,197.1 209.5,212.2" fill="#fccbea"/>
<polygon points="209.9,212.1 210.5,197 202.8,203.8 202.2,218.9" fill="#fccbf7"/>
<polygon points="344,97 341.9,84.3 340.7,85.1 342.7,97.7" fill="#fbd92f"/>
<polygon points="342.8,97.7 340.8,85 339.2,86 341.1,98.7" fill="#fbd931"/>
<polygon points="341.3,98.7 339.4,86 337,87.4 338.8,100.2" fill="#fbd933"/>
<polygon points="339,100.2 337.2,87.4 334.1,89.3 335.7,102.2" fill="#fbd936"/>
<polygon points="335.9,102.1 334.3,89.3 330.4,91.6 331.9,104.7" fill="#fbd93a"/>
<polygon points="332.1,104.6 330.7,91.6 326.1,94.5 327.3,107.6" fill="#fbd93f"/>
<polygon points="327.7,107.5 326.4,94.4 321.2,97.7 322.2,110.9" fill="#fbd946"/>
<polygon points="322.6,110.9 321.5,97.6 315.8,101.3 316.6,114.7" fill="#fbd94d"/>
<polygon points="317,114.6 316.1,101.2 309.9,105.2 310.6,118.8" fill="#fbd955"/>
<polygon points="311,118.7 310.3,105.2 303.7,109.5 304.2,123.1" fill="#fbd95d"/>
<polygon points="304.6,123.1 304.1,109.4 297.2,114 297.5,127.8" fill="#fbd966"/>
<polygon points="297.9,127.7 297.6,114 290.5,118.8 290.6,132.7" fill="#fbd970"/>
<polygon points="291,132.6 290.9,118.7 283.5,123.8 283.6,137.8" fill="#fbd979"/>
<polygon points="284,137.8 283.9,123.7 276.5,129 276.4,143.2" fill="#fbd984"/>
<polygon points="276.8,143.1 276.9,128.9 269.3,134.4 269.1,148.7" fill="#fbd98e"/>
<polygon points="269.5,148.6 269.7,134.3 262.1,139.9 261.8,154.3" fill="#fbd999"/>
<polygon points="262.2,154.2 262.5,139.9 254.8,145.6 254.4,160.1" fill="#fbd9a4"/>
<polygon points="254.8,160.1 255.2,145.6 247.4,151.5 247,166.1" fill="#fcd9af"/>
<polygon points="247.4,166 247.8,151.4 240.1,157.5 239.6,172.2" fill="#fcd9bb"/>
<polygon points="240,172.1 240.5,157.4 232.7,163.6 232.2,178.4" fill="#fcd9c7"/>
<polygon points="232.6,178.3 233.2,163.5 225.4,169.8 224.8,184.7" fill="#fcd9d3"/>
<polygon points="225.2,184.7 225.8,169.8 218.1,176.2 217.5,191.2" fill="#fcd9df"/>
<polygon points="217.9,191.1 218.5,176.1 210.8,182.7 210.2,197.8" fill="#fdd9eb"/>
<polygon points="210.6,197.7 211.2,182.6 203.6,189.3 202.9,204.5" fill="#fdd9f7"/>
<polygon points="342,85.1 340.1,72.5 339,73.2 340.9,85.8" fill="#fbe833"/>
<polygon points="340.9,85.8 339.1,73.2 337.6,74.1 339.4,86.8" fill="#fbe834"/>
<polygon points="339.5,86.8 337.7,74 335.5,75.4 337.1,88.2" fill="#fbe836"/>
<polygon points="337.3,88.2 335.7,75.4 332.7,77.2 334.2,90.1" fill="#fbe839"/>
<polygon points="334.4,90 332.9,77.1 329.2,79.4 330.5,92.4" fill="#fbe83d"/>
<polygon points="330.8,92.4 329.5,79.4 325.1,82.1 326.2,95.2" fill="#fbe842"/>
<polygon points="326.5,95.1 325.4,82.1 320.4,85.2 321.3,98.4" fill="#fce848"/>
<polygon points="321.6,98.3 320.7,85.1 315.1,88.6 315.9,102" fill="#fce84f"/>
<polygon points="316.2,101.9 315.5,88.6 309.5,92.5 310,105.9" fill="#fce857"/>
<polygon points="310.4,105.9 309.8,92.4 303.4,96.6 303.8,110.2" fill="#fce85f"/>
<polygon points="304.2,110.1 303.8,96.5 297.1,101 297.3,114.7" fill="#fce868"/>
<polygon points="297.7,114.6 297.5,100.9 290.5,105.6 290.6,119.5" fill="#fce871"/>
<polygon points="291,119.4 290.9,105.5 283.7,110.5 283.7,124.5" fill="#fce87b"/>
<polygon points="284.1,124.4 284.1,110.4 276.8,115.5 276.6,129.7" fill="#fce885"/>
<polygon points="277,129.6 277.2,115.5 269.7,120.8 269.4,135" fill="#fce88f"/>
<polygon points="269.8,135 270.1,120.7 262.5,126.2 262.2,140.6" fill="#fce89a"/>
<polygon points="262.6,140.5 262.9,126.2 255.3,131.8 254.9,146.3" fill="#fce8a5"/>
<polygon points="255.3,146.2 255.7,131.8 248.1,137.6 247.5,152.2" fill="#fce8b0"/>
<polygon points="247.9,152.1 248.5,137.5 240.8,143.5 240.2,158.1" fill="#fde8bc"/>
<polygon points="240.6,158.1 241.2,143.4 233.5,149.5 232.9,164.3" fill="#fde8c7"/>
<polygon points="233.3,164.2 233.9,149.4 226.2,155.6 225.5,170.5" fill="#fde8d3"/>
<polygon points="225.9,170.5 226.6,155.6 218.9,161.9 218.2,176.9" fill="#fde8df"/>
<polygon points="218.6,176.8 219.3,161.8 211.7,168.3 210.9,183.4" fill="#fde8ec"/>
<polygon points="211.3,183.3 212.1,168.2 204.5,174.8 203.7,190" fill="#fee8f8"/>
<polygon points="340.3,73.3 338.5,60.7 337.5,61.3 339.1,74" fill="#fcf737"/>
<polygon points="339.2,73.9 337.6,61.3 336.2,62.1 337.7,74.8" fill="#fcf738"/>
<polygon points="337.9,74.8 336.3,62.1 334.2,63.4 335.6,76.2" fill="#fcf73a"/>
<polygon points="335.8,76.1 334.3,63.4 331.5,65.1 332.8,77.9" fill="#fcf73d"/>
<polygon points="333,77.9 331.7,65.1 328.1,67.2 329.3,80.2" fill="#fcf740"/>
<polygon points="329.6,80.1 328.4,67.2 324.2,69.8 325.2,82.8" fill="#fcf745"/>
<polygon points="325.5,82.8 324.5,69.7 319.7,72.7 320.5,85.9" fill="#fcf74b"/>
<polygon points="320.8,85.9 320,72.7 314.6,76.1 315.3,89.4" fill="#fcf751"/>
<polygon points="315.6,89.3 314.9,76 309.1,79.7 309.6,93.2" fill="#fcf759"/>
<polygon points="309.9,93.1 309.5,79.7 303.3,83.7 303.6,97.3" fill="#fcf761"/>
<polygon points="303.9,97.2 303.6,83.6 297.1,88 297.2,101.7" fill="#fdf769"/>
<polygon points="297.6,101.6 297.4,87.9 290.6,92.5 290.6,106.3" fill="#fdf773"/>
<polygon points="291,106.2 291,92.4 284,97.2 283.8,111.2" fill="#fdf77c"/>
<polygon points="284.2,111.1 284.4,97.1 277.1,102.2 276.9,116.2" fill="#fdf786"/>
<polygon points="277.3,116.2 277.5,102.1 270.2,107.3 269.8,121.5" fill="#fdf790"/>
<polygon points="270.2,121.4 270.6,107.2 263.1,112.6 262.6,126.9" fill="#fdf79b"/>
<polygon points="263.1,126.9 263.5,112.5 256,118.1 255.4,132.5" fill="#fdf7a6"/>
<polygon points="255.8,132.4 256.4,118 248.8,123.7 248.2,138.3" fill="#fdf7b1"/>
<polygon points="248.6,138.2 249.2,123.7 241.6,129.5 240.9,144.1" fill="#fdf7bd"/>
<polygon points="241.3,144.1 242,129.4 234.4,135.4 233.6,150.2" fill="#fef7c8"/>
<polygon points="234,150.1 234.8,135.4 227.1,141.5 226.3,156.3" fill="#fef7d4"/>
<polygon points="226.7,156.3 227.5,141.4 219.9,147.6 219.1,162.6" fill="#fef7e0"/>
<polygon points="219.4,162.5 220.3,147.6 212.7,153.9 211.8,169" fill="#fef7ec"/>
<polygon points="212.2,168.9 213.1,153.9 205.5,160.4 204.6,175.5" fill="#fef7f8"/>
</g></g>
<path d="M253.3 9L252.7 9.4L252.1 9.8L251.3 10.4L250.2 11.1L249 11.9L247.4 12.9L245.7 14.1L243.7 15.5L241.5 17L239.1 18.6L236.5 20.5L233.8 22.4L230.9 24.5L227.8 26.8L224.6 29.2L221.3 31.6L217.9 34.2L214.4 36.9L210.8 39.8L207.2 42.7L203.5 45.7L199.8 48.8L196 51.9L192.3 55.2L188.5 58.5L184.6 61.9L180.8 65.4L177 69L173.1 72.6L169.3 76.3L165.4 80L161.6 83.8L157.8 87.7L154 91.7L150.2 95.6L146.4 99.7L142.6 103.8L138.9 107.9L135.1 112.2L131.4 116.4M247.4 10.8L247.6 10.9L247.8 11.1L248.1 11.3L248.5 11.6L249 11.9L249.5 12.3L250.2 12.8L251 13.4L251.9 14L252.9 14.8L254.1 15.6L255.3 16.4L256.7 17.4L258.2 18.4L259.8 19.6L261.6 20.8L263.4 22L265.4 23.4L267.5 24.8L269.7 26.2L272 27.8L274.4 29.4L277 31L279.6 32.7L282.4 34.4L285.2 36.2L288.2 38.1L291.2 39.9L294.4 41.8L297.6 43.7L300.9 45.7L304.3 47.7L307.8 49.6L311.4 51.6L315 53.7L318.7 55.7L322.5 57.7L326.4 59.7L330.3 61.7L334.3 63.8M257.3 11.9L256.7 12.3L256 12.7L255.2 13.2L254.2 13.9L252.9 14.8L251.4 15.8L249.7 16.9L247.7 18.3L245.5 19.8L243.1 21.5L240.5 23.3L237.7 25.2L234.8 27.3L231.7 29.6L228.5 31.9L225.2 34.4L221.8 37L218.3 39.7L214.7 42.5L211 45.4L207.3 48.4L203.6 51.5L199.8 54.6L196 57.9L192.2 61.2L188.3 64.6L184.5 68L180.6 71.6L176.7 75.2L172.9 78.8L169 82.6L165.1 86.3L161.3 90.2L157.4 94.1L153.6 98.1L149.8 102.1L146 106.2L142.2 110.3L138.4 114.5L134.7 118.7M237.5 17.5L237.8 17.7L238 17.8L238.3 18L238.7 18.3L239.1 18.6L239.7 19.1L240.4 19.5L241.2 20.1L242.1 20.7L243.1 21.5L244.2 22.3L245.5 23.1L246.9 24.1L248.3 25.1L250 26.2L251.7 27.4L253.5 28.7L255.5 30L257.6 31.4L259.8 32.9L262.1 34.4L264.5 36L267 37.6L269.7 39.3L272.4 41L275.3 42.8L278.2 44.6L281.3 46.4L284.4 48.3L287.6 50.2L291 52.2L294.4 54.1L297.9 56.1L301.4 58.1L305.1 60.1L308.8 62.1L312.6 64.1L316.4 66.1L320.4 68.1L324.4 70.1M264.2 16.7L263.6 17.1L262.9 17.5L262.1 18L261.1 18.7L259.8 19.6L258.3 20.6L256.6 21.7L254.6 23.1L252.4 24.6L250 26.2L247.3 28L244.6 30L241.6 32.1L238.5 34.3L235.3 36.6L232 39.1L228.5 41.7L225 44.3L221.4 47.1L217.7 50L214 53L210.2 56L206.4 59.1L202.5 62.4L198.6 65.7L194.7 69L190.8 72.4L186.9 75.9L183 79.5L179.1 83.1L175.2 86.8L171.3 90.6L167.4 94.4L163.5 98.3L159.6 102.2L155.7 106.2L151.8 110.2L148 114.3L144.2 118.4L140.3 122.6M223 28L223.3 28.2L223.5 28.3L223.8 28.5L224.1 28.8L224.6 29.2L225.2 29.6L225.8 30L226.6 30.6L227.5 31.2L228.5 31.9L229.6 32.7L230.9 33.6L232.2 34.5L233.7 35.5L235.3 36.6L237 37.8L238.8 39L240.8 40.4L242.9 41.7L245 43.2L247.3 44.7L249.7 46.2L252.2 47.8L254.9 49.5L257.6 51.2L260.4 53L263.4 54.8L266.4 56.6L269.5 58.5L272.7 60.4L276 62.3L279.4 64.2L282.9 66.2L286.4 68.1L290.1 70.1L293.8 72.1L297.6 74.1L301.4 76.1L305.4 78.1L309.3 80.1M274 23.4L273.4 23.8L272.8 24.2L272 24.7L271 25.4L269.7 26.2L268.2 27.2L266.4 28.4L264.4 29.7L262.2 31.2L259.8 32.9L257.2 34.6L254.4 36.6L251.4 38.6L248.3 40.8L245 43.2L241.7 45.6L238.2 48.2L234.6 50.8L231 53.6L227.3 56.4L223.5 59.3L219.6 62.4L215.8 65.5L211.9 68.6L207.9 71.9L204 75.2L200 78.6L196.1 82.1L192.1 85.6L188.1 89.2L184.1 92.8L180.1 96.5L176.2 100.3L172.2 104.1L168.2 108L164.3 111.9L160.3 115.9L156.4 119.9L152.5 124L148.6 128.1M205.7 41.6L205.9 41.7L206.1 41.9L206.4 42.1L206.7 42.3L207.2 42.7L207.8 43.1L208.4 43.5L209.2 44.1L210.1 44.7L211 45.4L212.1 46.2L213.4 47L214.7 47.9L216.1 48.9L217.7 50L219.4 51.1L221.2 52.4L223.1 53.6L225.1 55L227.3 56.4L229.5 57.9L231.9 59.4L234.3 61L236.9 62.6L239.6 64.3L242.4 66L245.3 67.8L248.3 69.6L251.4 71.5L254.6 73.3L257.8 75.2L261.2 77.1L264.6 79L268.1 81L271.7 82.9L275.4 84.9L279.2 86.9L283 88.8L286.9 90.8L290.9 92.8M286.7 31.6L286.1 32L285.5 32.4L284.7 32.9L283.6 33.6L282.4 34.4L280.8 35.4L279.1 36.6L277.1 37.9L274.9 39.4L272.4 41L269.8 42.8L267 44.7L264 46.7L260.9 48.9L257.6 51.2L254.2 53.6L250.7 56.2L247.1 58.8L243.4 61.5L239.6 64.3L235.8 67.2L231.9 70.2L228 73.3L224 76.4L220 79.6L216 82.9L212 86.3L207.9 89.7L203.9 93.1L199.8 96.7L195.8 100.3L191.7 103.9L187.6 107.6L183.6 111.4L179.5 115.2L175.5 119.1L171.5 123L167.4 126.9L163.4 130.9L159.4 135M187 57.5L187.2 57.6L187.4 57.8L187.6 58L188 58.2L188.5 58.5L189 58.9L189.6 59.4L190.4 59.9L191.2 60.5L192.2 61.2L193.2 61.9L194.4 62.7L195.7 63.6L197.1 64.6L198.6 65.7L200.3 66.8L202 67.9L203.9 69.2L205.9 70.5L207.9 71.9L210.2 73.3L212.5 74.8L214.9 76.4L217.4 78L220 79.6L222.8 81.3L225.6 83L228.5 84.8L231.6 86.6L234.7 88.4L237.9 90.3L241.2 92.2L244.6 94.1L248 96L251.6 97.9L255.2 99.8L258.9 101.8L262.7 103.7L266.5 105.7L270.4 107.6M301.9 41L301.3 41.3L300.7 41.7L299.9 42.2L298.9 42.9L297.6 43.7L296.1 44.7L294.3 45.9L292.3 47.2L290.1 48.6L287.6 50.2L285 52L282.2 53.9L279.2 55.9L276 58.1L272.7 60.4L269.3 62.7L265.7 65.2L262.1 67.8L258.4 70.5L254.6 73.3L250.7 76.2L246.7 79.1L242.8 82.2L238.7 85.3L234.7 88.4L230.6 91.7L226.5 95L222.3 98.4L218.2 101.8L214.1 105.3L209.9 108.8L205.8 112.4L201.6 116L197.5 119.7L193.3 123.5L189.2 127.3L185 131.1L180.9 135L176.8 139L172.7 143M167.8 75.3L168 75.4L168.2 75.5L168.5 75.7L168.8 76L169.3 76.3L169.8 76.7L170.4 77.1L171.1 77.6L171.9 78.2L172.9 78.8L173.9 79.5L175 80.3L176.3 81.2L177.6 82.1L179.1 83.1L180.7 84.2L182.4 85.4L184.2 86.6L186.1 87.8L188.1 89.2L190.2 90.6L192.5 92L194.8 93.5L197.3 95.1L199.8 96.7L202.5 98.3L205.2 100L208.1 101.7L211 103.5L214.1 105.3L217.2 107.1L220.4 108.9L223.7 110.8L227.1 112.6L230.6 114.5L234.1 116.4L237.7 118.3L241.4 120.2L245.2 122.1L249.1 124M319.3 50.9L318.7 51.3L318.1 51.7L317.3 52.2L316.3 52.8L315 53.7L313.5 54.6L311.7 55.8L309.7 57L307.5 58.5L305.1 60.1L302.4 61.8L299.6 63.7L296.6 65.7L293.4 67.8L290.1 70.1L286.6 72.5L283 74.9L279.4 77.5L275.6 80.2L271.7 82.9L267.8 85.8L263.8 88.7L259.8 91.7L255.7 94.8L251.6 97.9L247.4 101.1L243.2 104.4L239 107.7L234.8 111.1L230.6 114.5L226.3 118L222.1 121.6L217.8 125.1L213.6 128.8L209.3 132.5L205.1 136.2L200.9 140L196.6 143.8L192.4 147.7L188.2 151.7M148.8 94.7L149 94.8L149.2 94.9L149.4 95.1L149.8 95.4L150.2 95.6L150.7 96L151.3 96.4L151.9 96.9L152.7 97.4L153.6 98.1L154.6 98.8L155.7 99.5L156.9 100.3L158.2 101.2L159.6 102.2L161.1 103.2L162.7 104.3L164.4 105.5L166.3 106.7L168.2 108L170.3 109.3L172.4 110.7L174.7 112.2L177.1 113.7L179.5 115.2L182.1 116.8L184.8 118.4L187.5 120.1L190.4 121.8L193.3 123.5L196.3 125.3L199.5 127L202.7 128.8L206 130.7L209.3 132.5L212.8 134.3L216.3 136.2L219.9 138L223.6 139.9L227.4 141.8M338.6 61.1L338 61.4L337.4 61.8L336.6 62.3L335.5 63L334.3 63.8L332.8 64.7L331 65.8L329 67.1L326.8 68.5L324.4 70.1L321.7 71.8L318.9 73.7L315.9 75.7L312.7 77.8L309.3 80.1L305.9 82.4L302.3 84.9L298.6 87.4L294.8 90.1L290.9 92.8L286.9 95.6L282.9 98.5L278.8 101.5L274.6 104.5L270.4 107.6L266.2 110.8L262 114L257.7 117.3L253.4 120.6L249.1 124L244.7 127.5L240.4 131L236.1 134.5L231.7 138.1L227.4 141.8L223 145.5L218.7 149.2L214.4 153L210 156.8L205.7 160.7M130.1 115.5L130.3 115.6L130.5 115.7L130.7 115.9L131 116.1L131.4 116.4L131.9 116.7L132.4 117.1L133.1 117.6L133.8 118.1L134.7 118.7L135.6 119.4L136.6 120.1L137.8 120.9L139 121.7L140.3 122.6L141.8 123.6L143.3 124.6L145 125.7L146.8 126.9L148.6 128.1L150.6 129.4L152.6 130.7L154.8 132.1L157.1 133.5L159.4 135L161.9 136.5L164.5 138.1L167.1 139.7L169.9 141.3L172.7 143L175.6 144.7L178.7 146.4L181.8 148.1L184.9 149.9L188.2 151.7L191.6 153.4L195 155.2L198.5 157L202.1 158.9L205.7 160.7M98.5 438.9L98.4 436.6L98.3 434.2L98.2 431.2L98.1 427.3L98 422.6L97.9 417L97.7 410.8L97.7 403.9L97.6 396.4L97.6 388.3L97.6 379.9L97.7 371.1L97.9 362L98.2 352.6L98.6 343.2L99 333.6L99.6 323.9L100.2 314.2L100.9 304.5L101.7 294.8L102.6 285.1L103.6 275.5L104.6 266L105.8 256.5L107 247.2L108.3 237.9L109.6 228.6L111 219.5L112.5 210.5L114 201.5L115.6 192.7L117.2 183.9L118.9 175.2L120.6 166.6L122.3 158.1L124.1 149.6L125.9 141.2L127.7 132.9L129.5 124.6L131.4 116.4M95.6 423.1L95.9 423.1L96.3 423L96.7 422.9L97.3 422.7L98 422.6L98.9 422.3L99.9 422.1L101 421.8L102.4 421.5L103.8 421.2L105.5 420.8L107.3 420.4L109.2 419.9L111.3 419.5L113.5 419L115.9 418.4L118.4 417.9L121 417.4L123.8 416.8L126.7 416.2L129.7 415.6L132.8 415L136.1 414.4L139.4 413.7L142.8 413.1L146.3 412.4L149.9 411.8L153.6 411.1L157.4 410.4L161.2 409.8L165.2 409.1L169.2 408.4L173.2 407.7L177.3 407.1L181.5 406.4L185.7 405.7L190 405L194.3 404.3L198.7 403.6L203.2 402.9M104.3 436.4L104.2 434.2L104.2 432L104.1 429.2L103.9 425.6L103.8 421.2L103.7 416L103.6 410.1L103.5 403.6L103.4 396.4L103.4 388.8L103.4 380.7L103.5 372.2L103.6 363.4L103.8 354.3L104.1 345.1L104.5 335.7L105 326.2L105.5 316.7L106.1 307.1L106.8 297.5L107.6 287.9L108.5 278.4L109.5 268.9L110.5 259.4L111.6 250.1L112.8 240.8L114.1 231.5L115.4 222.4L116.7 213.3L118.2 204.3L119.6 195.4L121.1 186.6L122.7 177.9L124.3 169.2L126 160.6L127.6 152.1L129.4 143.7L131.1 135.3L132.9 127L134.7 118.7M95.2 388.1L95.5 388.1L95.9 388.2L96.3 388.2L96.9 388.3L97.6 388.3L98.4 388.4L99.4 388.5L100.6 388.6L101.9 388.7L103.4 388.8L105 388.9L106.8 389L108.7 389.1L110.8 389.2L113 389.3L115.4 389.4L117.9 389.5L120.5 389.6L123.3 389.6L126.1 389.7L129.1 389.7L132.3 389.7L135.5 389.7L138.8 389.7L142.2 389.7L145.7 389.7L149.3 389.6L153 389.5L156.8 389.4L160.6 389.3L164.5 389.1L168.5 389L172.5 388.8L176.6 388.6L180.8 388.4L185 388.2L189.3 387.9L193.6 387.7L198 387.4L202.5 387.1M113.9 432.5L113.9 430.6L113.8 428.7L113.7 426.2L113.6 422.9L113.5 419L113.4 414.3L113.3 408.9L113.2 403L113.1 396.4L113 389.3L113 381.7L113 373.8L113.1 365.5L113.2 356.8L113.4 348L113.7 339L114 329.8L114.4 320.5L114.9 311.1L115.5 301.7L116.2 292.3L116.9 282.9L117.7 273.5L118.6 264.1L119.5 254.8L120.6 245.5L121.6 236.3L122.8 227.1L124 218L125.3 209L126.6 200L128 191.2L129.4 182.3L130.8 173.6L132.3 164.9L133.9 156.3L135.4 147.8L137 139.4L138.7 131L140.3 122.6M96.3 342.3L96.6 342.4L96.9 342.6L97.3 342.7L97.9 342.9L98.6 343.2L99.4 343.5L100.3 343.8L101.5 344.2L102.7 344.6L104.1 345.1L105.7 345.6L107.4 346.2L109.3 346.7L111.3 347.4L113.4 348L115.7 348.7L118.1 349.3L120.7 350L123.4 350.7L126.2 351.4L129.1 352.1L132.2 352.8L135.3 353.4L138.6 354.1L141.9 354.8L145.4 355.4L148.9 356L152.5 356.6L156.3 357.1L160 357.7L163.9 358.2L167.8 358.7L171.8 359.1L175.9 359.6L180 360L184.2 360.3L188.5 360.7L192.8 361L197.1 361.3L201.6 361.5M127.1 428L127 426.4L127 424.7L126.9 422.5L126.8 419.7L126.7 416.2L126.6 412.1L126.5 407.3L126.4 402L126.2 396.1L126.1 389.7L126.1 382.8L126 375.5L126 367.7L126.1 359.7L126.2 351.4L126.3 342.9L126.6 334.1L126.8 325.2L127.2 316.2L127.6 307.1L128.1 297.9L128.6 288.7L129.3 279.4L129.9 270.2L130.7 260.9L131.5 251.7L132.4 242.5L133.4 233.4L134.4 224.3L135.4 215.3L136.5 206.3L137.7 197.3L138.9 188.5L140.2 179.7L141.5 170.9L142.8 162.2L144.2 153.6L145.7 145.1L147.1 136.6L148.6 128.1M99.6 293.7L99.9 293.8L100.2 294L100.6 294.2L101.1 294.5L101.7 294.8L102.5 295.2L103.3 295.7L104.4 296.2L105.5 296.8L106.8 297.5L108.3 298.2L109.9 299L111.6 299.9L113.5 300.8L115.5 301.7L117.7 302.7L120 303.8L122.4 304.8L124.9 305.9L127.6 307.1L130.4 308.2L133.3 309.4L136.3 310.5L139.4 311.7L142.7 312.9L146 314L149.4 315.2L152.9 316.3L156.5 317.4L160.2 318.5L163.9 319.6L167.8 320.6L171.7 321.7L175.7 322.7L179.7 323.7L183.8 324.6L188 325.5L192.2 326.4L196.5 327.2L200.8 328M143.2 423.3L143.1 421.8L143.1 420.4L143 418.5L142.9 416.1L142.8 413.1L142.7 409.5L142.6 405.4L142.5 400.7L142.3 395.4L142.2 389.7L142.1 383.5L142 376.9L142 369.8L141.9 362.5L141.9 354.8L142 346.8L142.1 338.6L142.2 330.2L142.4 321.6L142.7 312.9L143 304L143.3 295.1L143.8 286.1L144.3 277.1L144.8 268L145.4 258.9L146.1 249.9L146.8 240.8L147.6 231.8L148.4 222.7L149.3 213.8L150.3 204.8L151.3 195.9L152.3 187.1L153.4 178.3L154.5 169.5L155.7 160.8L156.9 152.2L158.2 143.6L159.4 135M105.1 246L105.4 246.1L105.6 246.3L106 246.5L106.4 246.8L107 247.2L107.7 247.6L108.5 248.1L109.4 248.7L110.5 249.3L111.6 250.1L113 250.9L114.4 251.7L116 252.7L117.7 253.7L119.5 254.8L121.5 255.9L123.6 257.1L125.9 258.3L128.2 259.6L130.7 260.9L133.3 262.3L136 263.7L138.8 265.1L141.8 266.6L144.8 268L147.9 269.5L151.2 271L154.5 272.4L157.9 273.9L161.4 275.4L165 276.8L168.7 278.3L172.5 279.7L176.3 281.2L180.2 282.6L184.2 283.9L188.2 285.3L192.3 286.6L196.5 287.9L200.7 289.2M161.6 418.5L161.5 417.3L161.5 416.1L161.4 414.5L161.3 412.4L161.2 409.8L161.1 406.7L161 403.1L160.9 399L160.7 394.4L160.6 389.3L160.5 383.8L160.3 377.8L160.2 371.4L160.1 364.7L160 357.7L160 350.3L160 342.7L160 334.8L160.1 326.8L160.2 318.5L160.3 310.1L160.5 301.6L160.8 292.9L161.1 284.2L161.4 275.4L161.8 266.5L162.3 257.6L162.8 248.7L163.4 239.8L164 230.9L164.7 222L165.4 213.1L166.1 204.2L167 195.3L167.8 186.5L168.7 177.7L169.6 169L170.6 160.3L171.7 151.6L172.7 143M112.4 200.4L112.6 200.6L112.8 200.7L113.1 200.9L113.5 201.2L114 201.5L114.6 202L115.3 202.4L116.2 203L117.1 203.6L118.2 204.3L119.3 205.1L120.6 206L122.1 206.9L123.6 207.9L125.3 209L127.1 210.1L129 211.3L131 212.6L133.2 213.9L135.4 215.3L137.8 216.7L140.3 218.1L142.9 219.6L145.6 221.2L148.4 222.7L151.4 224.3L154.4 226L157.5 227.6L160.7 229.2L164 230.9L167.4 232.6L170.9 234.2L174.4 235.9L178 237.6L181.8 239.2L185.5 240.9L189.4 242.5L193.3 244.1L197.3 245.7L201.4 247.3M181.8 413.9L181.8 412.9L181.7 411.8L181.7 410.4L181.6 408.6L181.5 406.4L181.4 403.7L181.3 400.5L181.1 396.9L181 392.9L180.8 388.4L180.6 383.5L180.5 378.2L180.3 372.5L180.2 366.4L180 360L179.9 353.2L179.8 346.2L179.8 338.9L179.7 331.4L179.7 323.7L179.7 315.7L179.8 307.6L179.9 299.4L180 291L180.2 282.6L180.4 274L180.7 265.4L181 256.7L181.3 248L181.8 239.2L182.2 230.4L182.7 221.6L183.2 212.8L183.8 204L184.5 195.3L185.1 186.5L185.8 177.7L186.6 169L187.4 160.3L188.2 151.7M120.8 157L121 157.2L121.2 157.3L121.5 157.5L121.9 157.7L122.3 158.1L122.8 158.4L123.5 158.9L124.2 159.4L125 160L126 160.6L127 161.3L128.2 162.1L129.4 163L130.8 163.9L132.3 164.9L133.9 166L135.7 167.2L137.5 168.4L139.4 169.6L141.5 170.9L143.7 172.3L145.9 173.7L148.3 175.2L150.8 176.7L153.4 178.3L156.1 179.9L158.9 181.5L161.8 183.1L164.7 184.8L167.8 186.5L171 188.2L174.2 190L177.5 191.7L181 193.5L184.5 195.3L188 197L191.7 198.8L195.4 200.6L199.2 202.3L203 204.1M203.5 409.5L203.5 408.6L203.4 407.7L203.4 406.5L203.3 404.9L203.2 402.9L203.1 400.6L202.9 397.8L202.8 394.7L202.6 391.1L202.5 387.1L202.3 382.7L202.1 378L201.9 372.9L201.7 367.4L201.6 361.5L201.4 355.4L201.2 349L201.1 342.2L200.9 335.3L200.8 328L200.7 320.6L200.7 313L200.6 305.2L200.6 297.3L200.7 289.2L200.7 281L200.8 272.7L201 264.3L201.2 255.8L201.4 247.3L201.6 238.7L201.9 230.1L202.3 221.4L202.6 212.8L203 204.1L203.5 195.4L204 186.7L204.5 178L205.1 169.3L205.7 160.7M392 260.3L389.8 261.7L387.6 263.1L385 264.8L381.7 266.9L378 269.3L373.8 272L369.3 274.9L364.6 278.1L359.6 281.4L354.5 284.8L349.3 288.3L344 291.9L338.7 295.5L333.3 299.2L327.9 303L322.5 306.7L317.1 310.6L311.8 314.4L306.5 318.3L301.2 322.1L295.9 326L290.6 330L285.4 333.9L280.3 337.8L275.2 341.8L270.1 345.8L265 349.8L260 353.8L255.1 357.8L250.2 361.8L245.3 365.9L240.5 369.9L235.7 374L230.9 378.1L226.2 382.2L221.5 386.3L216.9 390.5L212.3 394.6L207.7 398.8L203.2 402.9M379.9 275.2L379.6 274.4L379.4 273.6L379 272.5L378.5 271.1L378 269.3L377.3 267.2L376.5 264.7L375.6 261.9L374.7 258.7L373.6 255.2L372.4 251.3L371.2 247.1L369.8 242.6L368.4 237.8L367 232.7L365.5 227.4L364 221.8L362.5 216L360.9 210L359.3 203.8L357.8 197.5L356.2 191L354.6 184.4L353.1 177.7L351.6 170.8L350.1 163.9L348.7 157L347.3 149.9L346 142.9L344.6 135.7L343.4 128.6L342.2 121.4L341 114.2L339.9 107L338.8 99.8L337.8 92.6L336.8 85.4L335.9 78.2L335.1 71L334.3 63.8M386.1 247.1L384.2 248.3L382.3 249.6L379.9 251.1L377 253L373.6 255.2L369.7 257.7L365.6 260.4L361.1 263.3L356.4 266.4L351.6 269.7L346.6 273L341.5 276.5L336.3 280L331.1 283.6L325.9 287.3L320.6 291L315.3 294.7L310.1 298.5L304.9 302.3L299.6 306.1L294.4 310L289.3 313.9L284.1 317.8L279 321.7L274 325.7L268.9 329.7L264 333.6L259 337.7L254.1 341.7L249.2 345.7L244.4 349.8L239.6 353.9L234.8 358L230.1 362.1L225.4 366.2L220.7 370.3L216.1 374.5L211.5 378.7L207 382.9L202.5 387.1M355.8 291.1L355.6 290.2L355.4 289.3L355.2 288.2L354.9 286.7L354.5 284.8L354.1 282.5L353.5 279.9L352.9 276.9L352.3 273.5L351.6 269.7L350.8 265.6L349.9 261.1L349 256.3L348.1 251.2L347.1 245.8L346.1 240.2L345 234.3L344 228.2L342.9 221.8L341.8 215.3L340.7 208.7L339.6 201.9L338.5 195L337.4 187.9L336.4 180.8L335.4 173.6L334.3 166.4L333.4 159.1L332.4 151.7L331.5 144.3L330.6 136.9L329.8 129.5L328.9 122.1L328.2 114.6L327.4 107.2L326.7 99.8L326.1 92.3L325.5 84.9L324.9 77.5L324.4 70.1M377.6 225.9L376.1 226.9L374.5 227.9L372.5 229.2L370 230.8L367 232.7L363.6 234.9L359.9 237.3L355.9 240L351.6 242.8L347.1 245.8L342.4 248.9L337.7 252.2L332.8 255.5L327.8 259L322.8 262.4L317.8 266L312.7 269.6L307.6 273.3L302.5 277L297.5 280.7L292.4 284.5L287.3 288.4L282.3 292.2L277.3 296.1L272.3 300L267.4 303.9L262.5 307.9L257.6 311.9L252.7 315.9L247.9 319.9L243.1 324L238.4 328.1L233.6 332.2L229 336.3L224.3 340.5L219.7 344.6L215.1 348.8L210.6 353L206 357.3L201.6 361.5M328.8 309.5L328.7 308.6L328.5 307.7L328.4 306.5L328.2 304.9L327.9 303L327.6 300.6L327.2 297.9L326.8 294.7L326.4 291.2L325.9 287.3L325.3 283L324.7 278.3L324.1 273.4L323.5 268.1L322.8 262.4L322.1 256.6L321.4 250.4L320.7 244.1L320 237.5L319.3 230.7L318.6 223.8L317.9 216.7L317.2 209.5L316.5 202.2L315.9 194.8L315.2 187.3L314.6 179.8L314 172.2L313.5 164.6L312.9 156.9L312.4 149.2L311.9 141.5L311.5 133.8L311.1 126.1L310.7 118.4L310.4 110.7L310.1 103L309.8 95.3L309.6 87.7L309.3 80.1M368.2 198.1L366.9 199L365.6 199.8L363.9 200.8L361.8 202.2L359.3 203.8L356.4 205.7L353.2 207.8L349.6 210.1L345.8 212.6L341.8 215.3L337.5 218.2L333.2 221.2L328.6 224.3L324 227.4L319.3 230.7L314.5 234.1L309.7 237.5L304.8 241L300 244.6L295.1 248.2L290.2 251.9L285.3 255.6L280.4 259.3L275.5 263.1L270.7 266.9L265.8 270.8L261 274.7L256.2 278.6L251.4 282.6L246.7 286.5L242 290.6L237.3 294.6L232.6 298.7L228 302.8L223.4 306.9L218.8 311.1L214.3 315.3L209.8 319.5L205.3 323.8L200.8 328M301.8 328.8L301.7 327.9L301.6 327L301.5 325.7L301.3 324.1L301.2 322.1L300.9 319.8L300.6 317L300.3 313.8L300 310.1L299.6 306.1L299.2 301.8L298.8 297L298.4 291.9L297.9 286.5L297.5 280.7L297 274.7L296.5 268.4L296 261.9L295.5 255.1L295.1 248.2L294.6 241.1L294.2 233.8L293.8 226.4L293.4 218.9L293 211.2L292.6 203.5L292.3 195.7L292 187.9L291.7 180L291.5 172.1L291.3 164.2L291.1 156.2L291 148.3L290.9 140.3L290.8 132.3L290.7 124.4L290.7 116.5L290.7 108.5L290.8 100.7L290.9 92.8M358.9 166.2L357.9 166.8L356.8 167.5L355.4 168.4L353.7 169.5L351.6 170.8L349.2 172.4L346.4 174.2L343.3 176.2L340 178.4L336.4 180.8L332.6 183.4L328.6 186L324.5 188.9L320.2 191.8L315.9 194.8L311.4 197.9L306.9 201.1L302.3 204.4L297.7 207.8L293 211.2L288.3 214.7L283.6 218.3L278.9 221.8L274.2 225.5L269.4 229.2L264.7 232.9L260 236.7L255.3 240.5L250.7 244.4L246 248.3L241.4 252.2L236.8 256.2L232.2 260.2L227.6 264.2L223 268.3L218.5 272.4L214 276.6L209.5 280.7L205.1 284.9L200.7 289.2M275.7 348.6L275.6 347.6L275.5 346.7L275.4 345.4L275.3 343.8L275.2 341.8L275 339.4L274.8 336.6L274.5 333.4L274.3 329.7L274 325.7L273.7 321.3L273.3 316.5L273 311.3L272.7 305.8L272.3 300L272 293.9L271.6 287.5L271.3 280.9L271 274L270.7 266.9L270.4 259.7L270.1 252.2L269.9 244.7L269.6 237L269.4 229.2L269.3 221.3L269.1 213.3L269 205.3L269 197.2L268.9 189.1L268.9 181L269 172.8L269 164.6L269.1 156.5L269.3 148.3L269.4 140.1L269.6 132L269.9 123.8L270.1 115.7L270.4 107.6M350.7 131.9L349.8 132.4L349 133L347.8 133.7L346.4 134.6L344.6 135.7L342.6 137.1L340.2 138.6L337.6 140.3L334.6 142.2L331.5 144.3L328.1 146.6L324.6 149L320.8 151.5L316.9 154.1L312.9 156.9L308.8 159.8L304.6 162.7L300.3 165.8L295.9 168.9L291.5 172.1L287 175.4L282.5 178.7L278 182.1L273.5 185.6L268.9 189.1L264.4 192.7L259.8 196.3L255.2 200L250.7 203.7L246.1 207.5L241.6 211.3L237 215.1L232.5 219L228 222.9L223.5 226.9L219.1 230.9L214.6 234.9L210.2 239L205.8 243.1L201.4 247.3M250.6 368.6L250.5 367.6L250.5 366.7L250.4 365.5L250.3 363.8L250.2 361.8L250 359.4L249.8 356.6L249.6 353.4L249.4 349.8L249.2 345.7L249 341.3L248.7 336.5L248.4 331.3L248.2 325.8L247.9 319.9L247.6 313.8L247.4 307.3L247.1 300.6L246.9 293.7L246.7 286.5L246.5 279.2L246.3 271.7L246.2 264L246.1 256.2L246 248.3L246 240.3L246 232.1L246 224L246 215.7L246.1 207.5L246.3 199.1L246.4 190.8L246.6 182.4L246.9 174.1L247.1 165.7L247.5 157.4L247.8 149L248.2 140.7L248.6 132.3L249.1 124M343.9 96.6L343.2 97L342.5 97.5L341.5 98.1L340.3 98.9L338.8 99.8L337.1 100.9L335 102.2L332.7 103.7L330.2 105.4L327.4 107.2L324.4 109.2L321.3 111.3L317.9 113.5L314.4 115.9L310.7 118.4L306.9 121L303 123.7L299 126.5L294.9 129.4L290.8 132.3L286.6 135.4L282.3 138.5L278 141.7L273.6 145L269.3 148.3L264.9 151.7L260.4 155.1L256 158.6L251.6 162.1L247.1 165.7L242.7 169.4L238.3 173L233.8 176.8L229.4 180.5L225 184.4L220.6 188.2L216.2 192.1L211.8 196.1L207.4 200.1L203 204.1M226.6 388.9L226.5 388L226.5 387L226.4 385.8L226.3 384.2L226.2 382.2L226.1 379.8L225.9 377L225.8 373.8L225.6 370.2L225.4 366.2L225.2 361.8L225 357L224.7 351.8L224.5 346.3L224.3 340.5L224.1 334.3L223.9 327.8L223.7 321.1L223.5 314.1L223.4 306.9L223.3 299.5L223.2 292L223.1 284.2L223.1 276.3L223 268.3L223.1 260.2L223.1 252L223.2 243.7L223.4 235.3L223.5 226.9L223.7 218.4L224 209.9L224.3 201.4L224.6 192.9L225 184.4L225.4 175.8L225.8 167.3L226.3 158.8L226.8 150.3L227.4 141.8" fill="none" stroke="#868686" stroke-opacity=".9" stroke-width="1" stroke-linejoin="round"/>
<path d="M251.7 7.9L251.1 8.3L250.5 8.7L249.7 9.2L248.6 9.9L247.4 10.8L245.8 11.8L244.1 13L242.1 14.3L239.9 15.8L237.5 17.5L235 19.3L232.2 21.3L229.3 23.4L226.2 25.7L223 28L219.7 30.5L216.3 33.1L212.9 35.8L209.3 38.7L205.7 41.6L202 44.6L198.3 47.7L194.5 50.9L190.8 54.1L187 57.5L183.2 60.9L179.3 64.4L175.5 67.9L171.7 71.6L167.8 75.3L164 79L160.2 82.8L156.4 86.7L152.6 90.7L148.8 94.7L145 98.7L141.3 102.8L137.5 107L133.8 111.2L130.1 115.5M251.7 7.9L251.9 8L252.1 8.2L252.4 8.4L252.8 8.7L253.3 9L253.9 9.4L254.5 9.9L255.3 10.5L256.2 11.2L257.3 11.9L258.4 12.7L259.7 13.6L261 14.5L262.5 15.6L264.2 16.7L265.9 17.9L267.8 19.2L269.7 20.5L271.8 21.9L274 23.4L276.3 24.9L278.8 26.5L281.3 28.2L284 29.9L286.7 31.6L289.6 33.4L292.5 35.3L295.6 37.1L298.7 39L301.9 41L305.2 42.9L308.7 44.9L312.1 46.9L315.7 48.9L319.3 50.9L323 52.9L326.8 55L330.7 57L334.6 59L338.6 61.1M96.1 440.1L96 437.6L96 435.2L95.9 432L95.7 428L95.6 423.1L95.5 417.5L95.4 411.1L95.3 404L95.2 396.3L95.2 388.1L95.3 379.5L95.4 370.6L95.6 361.3L95.9 351.9L96.3 342.3L96.8 332.6L97.4 322.9L98 313.1L98.8 303.4L99.6 293.7L100.6 284L101.6 274.4L102.7 264.8L103.9 255.3L105.1 246L106.5 236.7L107.8 227.5L109.3 218.4L110.8 209.3L112.4 200.4L114 191.6L115.6 182.8L117.3 174.1L119.1 165.5L120.8 157L122.6 148.6L124.5 140.2L126.3 131.9L128.2 123.7L130.1 115.5M96.1 440.1L96.5 439.9L96.8 439.7L97.2 439.5L97.8 439.3L98.5 438.9L99.4 438.5L100.4 438.1L101.5 437.6L102.8 437L104.3 436.4L105.9 435.7L107.7 435L109.6 434.2L111.7 433.4L113.9 432.5L116.3 431.7L118.8 430.8L121.5 429.9L124.2 429L127.1 428L130.1 427.1L133.2 426.1L136.4 425.2L139.8 424.2L143.2 423.3L146.7 422.3L150.3 421.3L154 420.4L157.8 419.5L161.6 418.5L165.5 417.6L169.5 416.7L173.5 415.7L177.7 414.8L181.8 413.9L186.1 413L190.3 412.1L194.7 411.2L199.1 410.4L203.5 409.5M394.6 265.7L392.3 267.2L390 268.7L387.2 270.5L383.8 272.7L379.9 275.2L375.6 278L370.9 281.1L366 284.3L361 287.6L355.8 291.1L350.4 294.7L345.1 298.3L339.7 302L334.2 305.8L328.8 309.5L323.3 313.4L317.9 317.2L312.5 321.1L307.2 324.9L301.8 328.8L296.5 332.8L291.2 336.7L286 340.6L280.8 344.6L275.7 348.6L270.6 352.5L265.5 356.5L260.5 360.5L255.5 364.5L250.6 368.6L245.7 372.6L240.9 376.6L236.1 380.7L231.3 384.8L226.6 388.9L221.9 393L217.2 397.1L212.6 401.2L208 405.3L203.5 409.5M394.6 265.7L394.2 265L393.9 264.2L393.4 263.2L392.8 261.9L392 260.3L391.1 258.3L390 256L388.8 253.4L387.5 250.4L386.1 247.1L384.6 243.5L382.9 239.5L381.2 235.2L379.5 230.7L377.6 225.9L375.8 220.8L373.9 215.4L372 209.9L370.1 204.1L368.2 198.1L366.2 192L364.4 185.7L362.5 179.3L360.7 172.8L358.9 166.2L357.2 159.5L355.5 152.7L353.8 145.8L352.2 138.9L350.7 131.9L349.2 124.9L347.8 117.8L346.4 110.8L345.1 103.7L343.9 96.6L342.7 89.5L341.6 82.4L340.5 75.3L339.5 68.2L338.6 61.1" fill="none" stroke="#808080" stroke-opacity=".5" stroke-width=".9"/>
<polygon points="206.9,159.8 106.1,22.4 104.5,23.6 204.6,161.5" fill="url(#gan)"/>
<polygon points="204.6,161.5 327.0,328.4 328.6,327.2 206.9,159.8" fill="url(#gap)"/>
<polygon points="205.0,159.4 18.8,262.1 19.8,263.9 206.4,161.9" fill="url(#gbn)"/>
<polygon points="206.4,161.9 371.5,71.5 370.5,69.7 205.0,159.4" fill="url(#gbp)"/>
<path d="M5.6 4.2h8.8L10 10.8z" fill="#111"/>
 </svg>
</div>
</body>
</html>
